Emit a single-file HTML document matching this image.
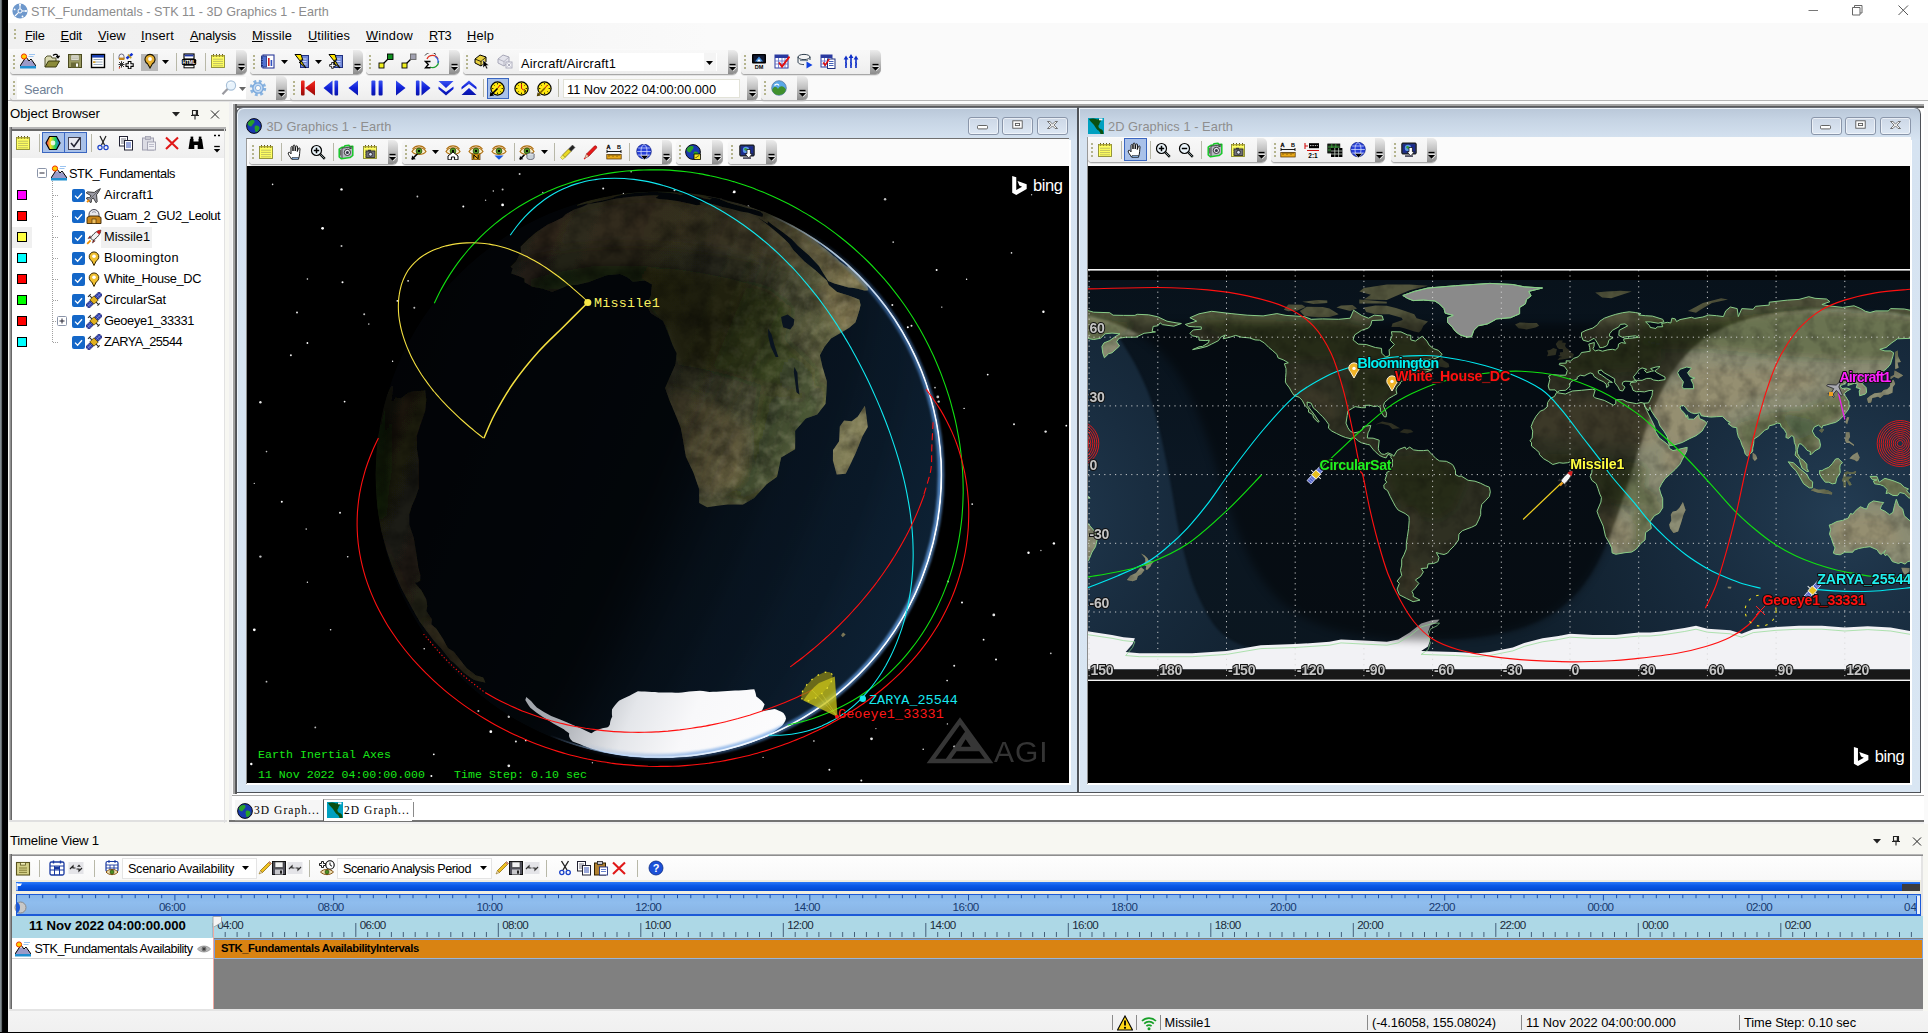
<!DOCTYPE html>
<html lang="en"><head><meta charset="utf-8"><title>STK_Fundamentals - STK 11 - 3D Graphics 1 - Earth</title>
<style>
html,body{margin:0;padding:0}
body{width:1928px;height:1033px;position:relative;overflow:hidden;background:#fafafa;font-family:"Liberation Sans",sans-serif}
.b{position:absolute;box-sizing:border-box}
.t{position:absolute;white-space:pre}
u{text-decoration:underline;text-underline-offset:1px}
svg{overflow:hidden;display:block}
</style></head>
<body>
<div class="b" style="left:0px;top:0px;width:8px;height:1033px;background:linear-gradient(90deg,#8a9498 0,#7a8286 1.2px,#000 2.6px,#000 100%)"></div>
<div class="b" style="left:0px;top:1031.5px;width:1928px;height:1.5px;background:#000"></div>
<div class="b" style="left:8px;top:0px;width:1920px;height:23px;background:#fff"></div>
<svg class="b" style="left:12px;top:3px" width="16" height="16" viewBox="0 0 16 16"><circle cx="8" cy="8" r="7.6" fill="#6e98cc"/><circle cx="8" cy="8" r="2" fill="none" stroke="#fff" stroke-width="1"/><path d="M8 6V1.5M6.6 9.4L3 13M10 8h4" stroke="#fff" stroke-width="1.1"/><circle cx="8" cy="1.8" r="1" fill="#fff"/><circle cx="14" cy="8" r="1.1" fill="#fff"/><circle cx="2.6" cy="6.4" r=".9" fill="#fff"/><circle cx="10.5" cy="13.5" r=".9" fill="#fff"/></svg>
<span class="t" style="left:31.00px;top:3.13px;font:400 12.6px/18px 'Liberation Sans',sans-serif;color:#8c8c8c;letter-spacing:0.027px;">STK_Fundamentals - STK 11 - 3D Graphics 1 - Earth</span>
<svg class="b" style="left:1800px;top:0px;" width="128" height="23"><path d="M8.5 10.5h9.5" stroke="#777" stroke-width="1"/><path d="M52.5 7.5h7.5v7.5h-7.5Z M54.5 7.5v-2h7.5v7.5h-2" fill="none" stroke="#666" stroke-width="1"/><path d="M98.5 5.5l9.5 9.5m0-9.5l-9.5 9.5" stroke="#555" stroke-width="1"/></svg>
<div class="b" style="left:8px;top:23px;width:1920px;height:26px;background:linear-gradient(90deg,#f0f0f0 0,#f2f2f2 300px,#fafafa 700px)"></div>
<div class="b" style="left:14px;top:29px;width:2px;height:2px;background:#b4b48e"></div>
<div class="b" style="left:14px;top:33px;width:2px;height:2px;background:#b4b48e"></div>
<div class="b" style="left:14px;top:37px;width:2px;height:2px;background:#b4b48e"></div>
<span class="t" style="left:25.00px;top:26.56px;font:400 12.8px/18px 'Liberation Sans',sans-serif;color:#000;letter-spacing:-0.281px;"><u>F</u>ile</span>
<span class="t" style="left:60.50px;top:26.56px;font:400 12.8px/18px 'Liberation Sans',sans-serif;color:#000;letter-spacing:-0.139px;"><u>E</u>dit</span>
<span class="t" style="left:98.00px;top:26.56px;font:400 12.8px/18px 'Liberation Sans',sans-serif;color:#000;letter-spacing:-0.002px;"><u>V</u>iew</span>
<span class="t" style="left:141.00px;top:26.56px;font:400 12.8px/18px 'Liberation Sans',sans-serif;color:#000;letter-spacing:0.165px;"><u>I</u>nsert</span>
<span class="t" style="left:190.00px;top:26.56px;font:400 12.8px/18px 'Liberation Sans',sans-serif;color:#000;letter-spacing:-0.208px;"><u>A</u>nalysis</span>
<span class="t" style="left:252.00px;top:26.56px;font:400 12.8px/18px 'Liberation Sans',sans-serif;color:#000;letter-spacing:0.127px;"><u>M</u>issile</span>
<span class="t" style="left:308.00px;top:26.56px;font:400 12.8px/18px 'Liberation Sans',sans-serif;color:#000;letter-spacing:0.084px;"><u>U</u>tilities</span>
<span class="t" style="left:366.00px;top:26.56px;font:400 12.8px/18px 'Liberation Sans',sans-serif;color:#000;letter-spacing:0.247px;"><u>W</u>indow</span>
<span class="t" style="left:429.00px;top:26.56px;font:400 12.8px/18px 'Liberation Sans',sans-serif;color:#000;letter-spacing:-0.649px;"><u>R</u>T3</span>
<span class="t" style="left:467.00px;top:26.56px;font:400 12.8px/18px 'Liberation Sans',sans-serif;color:#000;letter-spacing:0.170px;"><u>H</u>elp</span>
<div class="b" style="left:10px;top:50px;width:236.5px;height:24px;border-radius:5px 6px 6px 4px;background:linear-gradient(180deg,#f8f8f8,#f3f3f3 60%,#ededed);box-shadow:0 1px 0 #a8a8a8,0 2px 1px rgba(0,0,0,.10)"></div>
<div class="b" style="left:236.0px;top:50px;width:10.5px;height:24px;border-radius:0 5px 5px 0;background:linear-gradient(180deg,#ececec,#c4c4c4 45%,#8c8c8c)"></div>
<svg class="b" style="left:236.5px;top:63px;" width="9" height="9"><path d="M1.5 1.5h6" stroke="#000" stroke-width="1.3"/><path d="M2.2 3.2h6v1h-6z" fill="#fff" opacity=".8"/><path d="M1 4h7L4.5 7.6Z" fill="#000"/><path d="M5.2 8 L8.6 4.4" stroke="#fff" stroke-width=".8" opacity=".9"/></svg>
<div class="b" style="left:13.4px;top:55px;width:2px;height:2px;background:#b4b48e"></div>
<div class="b" style="left:13.4px;top:59px;width:2px;height:2px;background:#b4b48e"></div>
<div class="b" style="left:13.4px;top:63px;width:2px;height:2px;background:#b4b48e"></div>
<div class="b" style="left:13.4px;top:67px;width:2px;height:2px;background:#b4b48e"></div>
<svg class="b" style="left:20px;top:53.4px" width="16" height="16" viewBox="0 0 16 16"><rect x="0" y="13" width="16" height="2.5" fill="#1f8fd0"/><path d="M0 13 L6 4 L9 8 L11 6 L16 13Z" fill="#9a9ac8"/><path d="M6 4 L4.2 7 L6 6.3 L7.6 7.2 L6 4Z M11 6 L9.8 7.5 L12.2 7.8Z" fill="#fff"/><path d="M0 13 L6 4 L9 8 L11 6 L16 13" fill="none" stroke="#000" stroke-width="1"/><circle cx="4" cy="3.5" r="2.6" fill="#ffd000" stroke="#f03000" stroke-width="1"/><path d="M9 1.5h6M8.5 3.5h5" stroke="#9cc4f0" stroke-width="1"/></svg>
<svg class="b" style="left:44px;top:53.4px" width="16" height="16" viewBox="0 0 16 16"><path d="M1 14 L1 5 L3 3 L7 3 L8 5 L12 5 L12 8" fill="#d8d8b0" stroke="#555530" stroke-width="1"/><path d="M1 14 L4.5 8 L15.5 8 L12 14Z" fill="#8a8a3a" stroke="#3a3a10" stroke-width="1"/><path d="M9 2.5 C11 0.5 14 1 14 4 M12.2 3.2 L14 4.8 L15.6 2.8" fill="none" stroke="#000" stroke-width="1.2"/></svg>
<svg class="b" style="left:67px;top:53.4px" width="16" height="16" viewBox="0 0 16 16"><rect x="1.5" y="1.5" width="13" height="13" fill="#9a9a62" stroke="#4a4a20"/><rect x="4" y="2" width="8" height="5.5" fill="#f2f2e6" stroke="#707050" stroke-width=".6"/><path d="M5 4h6M5 5.8h6" stroke="#909080" stroke-width=".7"/><rect x="4" y="9.5" width="8" height="5" fill="#6a6a38"/><rect x="9" y="10.5" width="2" height="3.2" fill="#fff"/></svg>
<svg class="b" style="left:90px;top:53.4px" width="16" height="16" viewBox="0 0 16 16"><rect x="1.5" y="1.5" width="13" height="13" fill="#fff" stroke="#000" stroke-width="1.4"/><rect x="2" y="2" width="12" height="2.6" fill="#1a3fb0"/><path d="M3.5 6.5h9M3.5 9h9M3.5 11.5h9" stroke="#9ab" stroke-width="1.2"/><rect x="3" y="8.3" width="2.4" height="1.6" fill="#d8a020"/></svg>
<div class="b" style="left:112.5px;top:53px;width:1px;height:18px;background:#b8b8a8"></div>
<svg class="b" style="left:118px;top:53.4px" width="16" height="16" viewBox="0 0 16 16"><path d="M1 6 L1 3.5 A2.5 2.5 0 0 1 6 3.5 L6 6Z" fill="#f4f4f4" stroke="#446" stroke-width=".8"/><rect x="1" y="4.6" width="5.4" height="2.4" fill="#c8861c"/><path d="M8.5 5.5 L14.5 0.8" stroke="#1030d0" stroke-width="2.4"/><path d="M10 1.5 L13.2 5.2" stroke="#c8a020" stroke-width="1.6"/><path d="M1 9l5 5M6 9l-5 5M3.5 8.2v6.4M.5 11.5h6" stroke="#333" stroke-width="1"/><path d="M1 15.3l1-1" stroke="#e02000" stroke-width="1.2"/><path d="M10.3 8.5h2.6v2.3h2.3v2.6h-2.3v2.3h-2.6v-2.3H8v-2.6h2.3Z" fill="#fff" stroke="#000" stroke-width="1.1"/></svg>
<div class="b" style="left:141px;top:53.5px;width:16.5px;height:17px;background:#b8b8b8"></div>
<svg class="b" style="left:141.5px;top:53.4px" width="16" height="16" viewBox="0 0 16 16"><path d="M8 15 L5.6 10.8 A5 5 0 1 1 10.4 10.8Z" fill="#e8b030" stroke="#1a1400" stroke-width="1.1"/><circle cx="8" cy="6" r="1.9" fill="#fff"/></svg>
<svg class="b" style="left:162px;top:60px;" width="7" height="4"><path d="M0 0h7L3.5 4Z" fill="#000"/></svg>
<div class="b" style="left:175.5px;top:53px;width:1px;height:18px;background:#b8b8a8"></div>
<svg class="b" style="left:181px;top:53.4px" width="16" height="16" viewBox="0 0 16 16"><rect x="3" y="1" width="10" height="5" fill="#fff" stroke="#000" stroke-width="1.2"/><rect x="3.6" y="1.6" width="8.8" height="1.8" fill="#2038a8"/><rect x="0.8" y="6" width="14.4" height="6" rx="1.2" fill="#000"/><text x="8" y="10.9" font-family="Liberation Sans,sans-serif" font-size="4.6" font-weight="700" fill="#fff" text-anchor="middle">HTML</text><rect x="3" y="12.2" width="10" height="2.6" fill="#fff" stroke="#000" stroke-width="1"/></svg>
<div class="b" style="left:204.5px;top:53px;width:1px;height:18px;background:#b8b8a8"></div>
<svg class="b" style="left:210px;top:53.4px" width="16" height="16" viewBox="0 0 16 16"><rect x="1.5" y="2.5" width="13" height="12" fill="#ffff60" stroke="#8a8a30" stroke-width=".9"/><path d="M3 6.2h10M3 8.4h10M3 10.6h10M3 12.8h10" stroke="#b0b060" stroke-width=".8"/><path d="M3.5 1v3M6.5 1v3M9.5 1v3M12.5 1v3" stroke="#605820" stroke-width="1"/><path d="M2 3h12" stroke="#c0b840" stroke-width="1.2"/></svg>
<div class="b" style="left:249.5px;top:50px;width:113.5px;height:24px;border-radius:5px 6px 6px 4px;background:linear-gradient(180deg,#f8f8f8,#f3f3f3 60%,#ededed);box-shadow:0 1px 0 #a8a8a8,0 2px 1px rgba(0,0,0,.10)"></div>
<div class="b" style="left:352.5px;top:50px;width:10.5px;height:24px;border-radius:0 5px 5px 0;background:linear-gradient(180deg,#ececec,#c4c4c4 45%,#8c8c8c)"></div>
<svg class="b" style="left:353px;top:63px;" width="9" height="9"><path d="M1.5 1.5h6" stroke="#000" stroke-width="1.3"/><path d="M2.2 3.2h6v1h-6z" fill="#fff" opacity=".8"/><path d="M1 4h7L4.5 7.6Z" fill="#000"/><path d="M5.2 8 L8.6 4.4" stroke="#fff" stroke-width=".8" opacity=".9"/></svg>
<div class="b" style="left:252.9px;top:55px;width:2px;height:2px;background:#b4b48e"></div>
<div class="b" style="left:252.9px;top:59px;width:2px;height:2px;background:#b4b48e"></div>
<div class="b" style="left:252.9px;top:63px;width:2px;height:2px;background:#b4b48e"></div>
<div class="b" style="left:252.9px;top:67px;width:2px;height:2px;background:#b4b48e"></div>
<svg class="b" style="left:260px;top:53.4px" width="16" height="16" viewBox="0 0 16 16"><rect x="3" y="2" width="11" height="13" fill="#fff" stroke="#2a3a9a" stroke-width="1.1"/><rect x="1.5" y="3" width="5" height="11" fill="#5070d0" stroke="#203080" stroke-width=".8"/><path d="M1 5h2M1 7.5h2M1 10h2M1 12.5h2" stroke="#102060" stroke-width=".8"/><rect x="8" y="5" width="1.6" height="8" fill="#d02020"/><rect x="10.6" y="7" width="1.6" height="6" fill="#3050c0"/></svg>
<svg class="b" style="left:281px;top:60px;" width="7" height="4"><path d="M0 0h7L3.5 4Z" fill="#000"/></svg>
<svg class="b" style="left:294px;top:53.4px" width="16" height="16" viewBox="0 0 16 16"><rect x="6.5" y="2.5" width="8" height="12" fill="#7088d8" stroke="#203080" stroke-width="1"/><path d="M8.5 6h4M8.5 8.5h4M8.5 11h4" stroke="#dfe6ff" stroke-width=".9"/><path d="M1 1.5 L7 1.5 L8.8 7 L6.6 7 L12 15 L5 9.2 L7 9.2 Z" fill="#ffe600" stroke="#000" stroke-width="1"/></svg>
<svg class="b" style="left:315px;top:60px;" width="7" height="4"><path d="M0 0h7L3.5 4Z" fill="#000"/></svg>
<svg class="b" style="left:328px;top:53.4px" width="16" height="16" viewBox="0 0 16 16"><rect x="6.5" y="2.5" width="8" height="12" fill="#7088d8" stroke="#203080" stroke-width="1"/><path d="M8.5 6h4M8.5 8.5h4M8.5 11h4" stroke="#dfe6ff" stroke-width=".9"/><path d="M1 1.5 L7 1.5 L8.8 7 L6.6 7 L12 15 L5 9.2 L7 9.2 Z" fill="#ffe600" stroke="#000" stroke-width="1"/><path d="M1.6 11.5h2v-2h1.8v2h2v1.8h-2v2H3.6v-2h-2Z" fill="#fff" stroke="#000" stroke-width=".8"/></svg>
<div class="b" style="left:366px;top:50px;width:93.5px;height:24px;border-radius:5px 6px 6px 4px;background:linear-gradient(180deg,#f8f8f8,#f3f3f3 60%,#ededed);box-shadow:0 1px 0 #a8a8a8,0 2px 1px rgba(0,0,0,.10)"></div>
<div class="b" style="left:449.0px;top:50px;width:10.5px;height:24px;border-radius:0 5px 5px 0;background:linear-gradient(180deg,#ececec,#c4c4c4 45%,#8c8c8c)"></div>
<svg class="b" style="left:449.5px;top:63px;" width="9" height="9"><path d="M1.5 1.5h6" stroke="#000" stroke-width="1.3"/><path d="M2.2 3.2h6v1h-6z" fill="#fff" opacity=".8"/><path d="M1 4h7L4.5 7.6Z" fill="#000"/><path d="M5.2 8 L8.6 4.4" stroke="#fff" stroke-width=".8" opacity=".9"/></svg>
<div class="b" style="left:369.4px;top:55px;width:2px;height:2px;background:#b4b48e"></div>
<div class="b" style="left:369.4px;top:59px;width:2px;height:2px;background:#b4b48e"></div>
<div class="b" style="left:369.4px;top:63px;width:2px;height:2px;background:#b4b48e"></div>
<div class="b" style="left:369.4px;top:67px;width:2px;height:2px;background:#b4b48e"></div>
<svg class="b" style="left:378px;top:53.4px" width="16" height="16" viewBox="0 0 16 16"><path d="M3.5 12.5 L12 4" stroke="#000" stroke-width="1.2"/><rect x="9.5" y="1" width="5.5" height="5.5" fill="#109020" stroke="#000" stroke-width=".9"/><rect x="1" y="10" width="5" height="5" fill="#f0f020" stroke="#000" stroke-width=".9"/></svg>
<svg class="b" style="left:401px;top:53.4px" width="16" height="16" viewBox="0 0 16 16"><path d="M3.5 12.5 L12 4" stroke="#000" stroke-width="1.2"/><rect x="9.5" y="1" width="5.5" height="5.5" fill="#a0a0b0" stroke="#666" stroke-width=".9"/><rect x="1" y="10" width="5" height="5" fill="#f0f020" stroke="#000" stroke-width=".9"/></svg>
<svg class="b" style="left:424px;top:53.4px" width="16" height="16" viewBox="0 0 16 16"><path d="M3 6 A6 6 0 0 1 14 6" fill="none" stroke="#e03020" stroke-width="1.3"/><path d="M14.5 8 A6 6 0 0 1 6 14" fill="none" stroke="#20a030" stroke-width="1.3"/><path d="M11 3.5 A6 6 0 0 1 14 10" fill="none" stroke="#3060e0" stroke-width="1.3"/><path d="M1 2.5 A7 7 0 0 1 12 1.5" fill="none" stroke="#333" stroke-width="1"/><path d="M6.5 8.5H1.5L4.3 11.5 1.5 14.8H6.5" fill="none" stroke="#000" stroke-width="1.4"/></svg>
<div class="b" style="left:462.5px;top:50px;width:275.5px;height:24px;border-radius:5px 6px 6px 4px;background:linear-gradient(180deg,#f8f8f8,#f3f3f3 60%,#ededed);box-shadow:0 1px 0 #a8a8a8,0 2px 1px rgba(0,0,0,.10)"></div>
<div class="b" style="left:727.5px;top:50px;width:10.5px;height:24px;border-radius:0 5px 5px 0;background:linear-gradient(180deg,#ececec,#c4c4c4 45%,#8c8c8c)"></div>
<svg class="b" style="left:728px;top:63px;" width="9" height="9"><path d="M1.5 1.5h6" stroke="#000" stroke-width="1.3"/><path d="M2.2 3.2h6v1h-6z" fill="#fff" opacity=".8"/><path d="M1 4h7L4.5 7.6Z" fill="#000"/><path d="M5.2 8 L8.6 4.4" stroke="#fff" stroke-width=".8" opacity=".9"/></svg>
<div class="b" style="left:465.9px;top:55px;width:2px;height:2px;background:#b4b48e"></div>
<div class="b" style="left:465.9px;top:59px;width:2px;height:2px;background:#b4b48e"></div>
<div class="b" style="left:465.9px;top:63px;width:2px;height:2px;background:#b4b48e"></div>
<div class="b" style="left:465.9px;top:67px;width:2px;height:2px;background:#b4b48e"></div>
<svg class="b" style="left:474px;top:53.4px" width="16" height="16" viewBox="0 0 16 16"><path d="M1 6 L6 2 L12 4 L12 9 L7 13 L1 10Z" fill="#e8d040" stroke="#000" stroke-width="1"/><path d="M1 6l6 2.5v4.5M7 8.5l5-4.5" fill="none" stroke="#000" stroke-width=".8"/><path d="M9 7 L9 15 L11 13 L12.4 16 L13.8 15.3 L12.4 12.5 L15 12.5Z" fill="#000" stroke="#fff" stroke-width=".5"/></svg>
<svg class="b" style="left:497px;top:53.4px" width="16" height="16" viewBox="0 0 16 16"><path d="M1 6 L6 2 L12 4 L12 9 L7 13 L1 10Z" fill="#e4e4ec" stroke="#a8a8b8" stroke-width="1"/><path d="M1 6l6 2.5v4.5M7 8.5l5-4.5" fill="none" stroke="#a8a8b8" stroke-width=".8"/><rect x="9" y="9" width="6" height="6" fill="#f4f4f8" stroke="#a8a8b8" stroke-width=".9"/><path d="M10.5 10.5l3 3m0-3l-3 3" stroke="#a8a8b8" stroke-width=".9"/></svg>
<div class="b" style="left:519px;top:53px;width:198px;height:18px;background:#fff"></div>
<div class="b" style="left:704px;top:53px;width:12px;height:18px;background:#f4f4f4"></div>
<span class="t" style="left:521.00px;top:54.96px;font:400 12.8px/18px 'Liberation Sans',sans-serif;color:#000;letter-spacing:0.181px;">Aircraft/Aircraft1</span>
<svg class="b" style="left:706px;top:60.5px;" width="7" height="4"><path d="M0 0h7L3.5 4Z" fill="#000"/></svg>
<div class="b" style="left:741px;top:50px;width:139.5px;height:24px;border-radius:5px 6px 6px 4px;background:linear-gradient(180deg,#f8f8f8,#f3f3f3 60%,#ededed);box-shadow:0 1px 0 #a8a8a8,0 2px 1px rgba(0,0,0,.10)"></div>
<div class="b" style="left:870.0px;top:50px;width:10.5px;height:24px;border-radius:0 5px 5px 0;background:linear-gradient(180deg,#ececec,#c4c4c4 45%,#8c8c8c)"></div>
<svg class="b" style="left:870.5px;top:63px;" width="9" height="9"><path d="M1.5 1.5h6" stroke="#000" stroke-width="1.3"/><path d="M2.2 3.2h6v1h-6z" fill="#fff" opacity=".8"/><path d="M1 4h7L4.5 7.6Z" fill="#000"/><path d="M5.2 8 L8.6 4.4" stroke="#fff" stroke-width=".8" opacity=".9"/></svg>
<div class="b" style="left:744.4px;top:55px;width:2px;height:2px;background:#b4b48e"></div>
<div class="b" style="left:744.4px;top:59px;width:2px;height:2px;background:#b4b48e"></div>
<div class="b" style="left:744.4px;top:63px;width:2px;height:2px;background:#b4b48e"></div>
<div class="b" style="left:744.4px;top:67px;width:2px;height:2px;background:#b4b48e"></div>
<svg class="b" style="left:751px;top:53.4px" width="16" height="16" viewBox="0 0 16 16"><rect x="1" y="1" width="14" height="9.5" rx="1" fill="#000"/><rect x="2.5" y="2.3" width="11" height="6.6" fill="#101830"/><path d="M4 8.5 L8 3.5 L12 8.5Z" fill="#4090e0"/><path d="M6 8.5L8 6l2 2.5Z" fill="#fff"/><text x="8" y="15.6" font-family="Liberation Sans,sans-serif" font-size="5.6" font-weight="700" fill="#000" text-anchor="middle">DM</text></svg>
<svg class="b" style="left:774px;top:53.4px" width="16" height="16" viewBox="0 0 16 16"><rect x="1" y="2" width="13" height="13" fill="#fff" stroke="#2a3aa0" stroke-width="1"/><rect x="1" y="2" width="13" height="3" fill="#2a3aa0"/><path d="M1 8h13M1 11h13M4.5 5v10M8 5v10M11 5v10" stroke="#5a6ac8" stroke-width=".8"/><path d="M5 9.5 L8 13.5 L15.5 3.5" fill="none" stroke="#e01010" stroke-width="2"/></svg>
<svg class="b" style="left:797px;top:53.4px" width="16" height="16" viewBox="0 0 16 16"><ellipse cx="7" cy="4" rx="6" ry="2.6" fill="#f4f4f4" stroke="#304050" stroke-width="1"/><path d="M1 4v5c0 1.5 2.6 2.6 6 2.6" fill="none" stroke="#304050" stroke-width="1"/><path d="M13 4v3" stroke="#304050" stroke-width="1"/><path d="M3 7.5h8" stroke="#7a8a9a" stroke-width="1.2"/><path d="M9.5 8.5 L15.5 12 L9.5 15.5Z" fill="#1040e0"/></svg>
<svg class="b" style="left:820px;top:53.4px" width="16" height="16" viewBox="0 0 16 16"><rect x="1" y="2" width="11" height="12" fill="#fff" stroke="#2a3aa0" stroke-width="1"/><rect x="1" y="2" width="11" height="3" fill="#2a3aa0"/><path d="M1 8h11M1 11h11M4.5 5v9M8 5v9" stroke="#5a6ac8" stroke-width=".8"/><rect x="7.5" y="6" width="7.5" height="9.5" fill="#fff" stroke="#203080" stroke-width="1"/><path d="M9 8.5h4.5M9 10.5h4.5M9 12.5h4.5" stroke="#3050b0" stroke-width=".9"/><path d="M3.2 9.5l2 2.6 4-6" fill="none" stroke="#e01010" stroke-width="1.6"/></svg>
<svg class="b" style="left:843px;top:53.4px" width="16" height="16" viewBox="0 0 16 16"><path d="M3 15V4M8 15V2.5M13 15V4" stroke="#1030c8" stroke-width="1.6"/><path d="M0.6 6.5L3 2.5l2.4 4ZM5.6 5L8 1l2.4 4ZM10.6 6.5L13 2.5l2.4 4Z" fill="#1030c8"/><path d="M2 9l2 2-2 2M7 9l2 2-2 2M12 9l2 2-2 2" fill="none" stroke="#1030c8" stroke-width=".7"/></svg>
<div class="b" style="left:10px;top:76px;width:276.5px;height:24px;border-radius:5px 6px 6px 4px;background:linear-gradient(180deg,#f8f8f8,#f3f3f3 60%,#ededed);box-shadow:0 1px 0 #a8a8a8,0 2px 1px rgba(0,0,0,.10)"></div>
<div class="b" style="left:276.0px;top:76px;width:10.5px;height:24px;border-radius:0 5px 5px 0;background:linear-gradient(180deg,#ececec,#c4c4c4 45%,#8c8c8c)"></div>
<svg class="b" style="left:276.5px;top:89px;" width="9" height="9"><path d="M1.5 1.5h6" stroke="#000" stroke-width="1.3"/><path d="M2.2 3.2h6v1h-6z" fill="#fff" opacity=".8"/><path d="M1 4h7L4.5 7.6Z" fill="#000"/><path d="M5.2 8 L8.6 4.4" stroke="#fff" stroke-width=".8" opacity=".9"/></svg>
<div class="b" style="left:13.4px;top:81px;width:2px;height:2px;background:#b4b48e"></div>
<div class="b" style="left:13.4px;top:85px;width:2px;height:2px;background:#b4b48e"></div>
<div class="b" style="left:13.4px;top:89px;width:2px;height:2px;background:#b4b48e"></div>
<div class="b" style="left:13.4px;top:93px;width:2px;height:2px;background:#b4b48e"></div>
<div class="b" style="left:17px;top:77px;width:229px;height:22px;background:#fff"></div>
<span class="t" style="left:24.00px;top:81.36px;font:400 12.8px/18px 'Liberation Sans',sans-serif;color:#6f7f96;letter-spacing:-0.258px;">Search</span>
<svg class="b" style="left:221px;top:80px" width="16" height="16" viewBox="0 0 16 16"><circle cx="10" cy="5.5" r="4.6" fill="#e8f3fc" stroke="#a8c0d8" stroke-width="1.1"/><path d="M6.5 9 L1.5 14.2" stroke="#9a9aa0" stroke-width="2.2"/><path d="M7.6 4.2 A3 3 0 0 1 10.5 2.4" fill="none" stroke="#fff" stroke-width="1"/></svg>
<svg class="b" style="left:239px;top:87px;" width="7" height="4"><path d="M0 0h7L3.5 4Z" fill="#666"/></svg>
<svg class="b" style="left:249px;top:79px" width="18" height="18" viewBox="0 0 16 16"><circle cx="8" cy="8" r="5.6" fill="none" stroke="#8ab4e0" stroke-width="3.4" stroke-dasharray="2.3 2.1"/><circle cx="8" cy="8" r="4.6" fill="#c4daf2" stroke="#7aa8dc" stroke-width="1.2"/><circle cx="8" cy="8" r="2.3" fill="#fafafa" stroke="#7aa8dc" stroke-width=".8"/></svg>
<div class="b" style="left:290px;top:76px;width:467.5px;height:24px;border-radius:5px 6px 6px 4px;background:linear-gradient(180deg,#f8f8f8,#f3f3f3 60%,#ededed);box-shadow:0 1px 0 #a8a8a8,0 2px 1px rgba(0,0,0,.10)"></div>
<div class="b" style="left:747.0px;top:76px;width:10.5px;height:24px;border-radius:0 5px 5px 0;background:linear-gradient(180deg,#ececec,#c4c4c4 45%,#8c8c8c)"></div>
<svg class="b" style="left:747.5px;top:89px;" width="9" height="9"><path d="M1.5 1.5h6" stroke="#000" stroke-width="1.3"/><path d="M2.2 3.2h6v1h-6z" fill="#fff" opacity=".8"/><path d="M1 4h7L4.5 7.6Z" fill="#000"/><path d="M5.2 8 L8.6 4.4" stroke="#fff" stroke-width=".8" opacity=".9"/></svg>
<div class="b" style="left:293.4px;top:81px;width:2px;height:2px;background:#b4b48e"></div>
<div class="b" style="left:293.4px;top:85px;width:2px;height:2px;background:#b4b48e"></div>
<div class="b" style="left:293.4px;top:89px;width:2px;height:2px;background:#b4b48e"></div>
<div class="b" style="left:293.4px;top:93px;width:2px;height:2px;background:#b4b48e"></div>
<svg class="b" style="left:300px;top:80px" width="16" height="16" viewBox="0 0 16 16"><defs><linearGradient id="chx25" x1="0" y1="0" x2="0" y2="1"><stop offset="0" stop-color="#f03020"/><stop offset=".5" stop-color="#d01010"/><stop offset="1" stop-color="#901008"/></linearGradient></defs><rect x="1" y="0.5" width="3.6" height="15" rx="1" fill="url(#chx25)"/><path d="M15 0.5 L15 15.5 L5 8Z" fill="url(#chx25)"/></svg>
<svg class="b" style="left:323px;top:80px" width="16" height="16" viewBox="0 0 16 16"><defs><linearGradient id="chx26" x1="0" y1="0" x2="0" y2="1"><stop offset="0" stop-color="#3a54f0"/><stop offset=".5" stop-color="#1020d8"/><stop offset="1" stop-color="#0814a8"/></linearGradient></defs><path d="M9.5 0.5 L9.5 15.5 L0.5 8Z" fill="url(#chx26)"/><rect x="11.5" y="0.5" width="3.6" height="15" rx="1" fill="url(#chx26)"/></svg>
<svg class="b" style="left:346px;top:80px" width="16" height="16" viewBox="0 0 16 16"><defs><linearGradient id="chx27" x1="0" y1="0" x2="0" y2="1"><stop offset="0" stop-color="#3a54f0"/><stop offset=".5" stop-color="#1020d8"/><stop offset="1" stop-color="#0814a8"/></linearGradient></defs><path d="M12 0.5 L12 15.5 L2.5 8Z" fill="url(#chx27)"/></svg>
<svg class="b" style="left:369px;top:80px" width="16" height="16" viewBox="0 0 16 16"><defs><linearGradient id="chx28" x1="0" y1="0" x2="0" y2="1"><stop offset="0" stop-color="#3a54f0"/><stop offset=".5" stop-color="#1020d8"/><stop offset="1" stop-color="#0814a8"/></linearGradient></defs><rect x="2.4" y="0.5" width="4" height="15" rx="1" fill="url(#chx28)"/><rect x="9.6" y="0.5" width="4" height="15" rx="1" fill="url(#chx28)"/></svg>
<svg class="b" style="left:392px;top:80px" width="16" height="16" viewBox="0 0 16 16"><defs><linearGradient id="chx29" x1="0" y1="0" x2="0" y2="1"><stop offset="0" stop-color="#3a54f0"/><stop offset=".5" stop-color="#1020d8"/><stop offset="1" stop-color="#0814a8"/></linearGradient></defs><path d="M4 0.5 L4 15.5 L13.5 8Z" fill="url(#chx29)"/></svg>
<svg class="b" style="left:415px;top:80px" width="16" height="16" viewBox="0 0 16 16"><defs><linearGradient id="chx30" x1="0" y1="0" x2="0" y2="1"><stop offset="0" stop-color="#3a54f0"/><stop offset=".5" stop-color="#1020d8"/><stop offset="1" stop-color="#0814a8"/></linearGradient></defs><path d="M6.5 0.5 L6.5 15.5 L15.5 8Z" fill="url(#chx30)"/><rect x="0.9" y="0.5" width="3.6" height="15" rx="1" fill="url(#chx30)"/></svg>
<svg class="b" style="left:438px;top:80px" width="16" height="16" viewBox="0 0 16 16"><defs><linearGradient id="chx31" x1="0" y1="0" x2="0" y2="1"><stop offset="0" stop-color="#3a54f0"/><stop offset=".5" stop-color="#1020d8"/><stop offset="1" stop-color="#0814a8"/></linearGradient></defs><path d="M0.5 1 L15.5 1 L8 8Z M0.5 6.5 L8 12 L15.5 6.5 L15.5 9 L8 15.5 L0.5 9Z" fill="url(#chx31)"/></svg>
<svg class="b" style="left:461px;top:80px" width="16" height="16" viewBox="0 0 16 16"><defs><linearGradient id="chx32" x1="0" y1="0" x2="0" y2="1"><stop offset="0" stop-color="#3a54f0"/><stop offset=".5" stop-color="#1020d8"/><stop offset="1" stop-color="#0814a8"/></linearGradient></defs><path d="M0.5 15 L15.5 15 L8 8Z M0.5 9.5 L8 4 L15.5 9.5 L15.5 7 L8 0.5 L0.5 7Z" fill="url(#chx32)"/></svg>
<div class="b" style="left:483px;top:79px;width:1px;height:18px;background:#b8b8a8"></div>
<div class="b" style="left:487px;top:78px;width:22px;height:21px;background:#a9c1e9;border:1px solid #3a66c0"></div>
<svg class="b" style="left:489px;top:80.5px" width="16" height="16" viewBox="0 0 16 16"><circle cx="8.5" cy="7.5" r="6.6" fill="#ffe810" stroke="#000" stroke-width="1.2"/><path d="M8.5 2v1.4M8.5 11.6V13M3 7.5h1.4M12.6 7.5H14M4.6 3.6l1 1M12.4 3.6l-1 1M4.6 11.4l1-1M12.4 11.4l-1-1" stroke="#000" stroke-width=".8"/><path d="M8.5 7.5L11 4" stroke="#d01010" stroke-width="1"/><path d="M8.5 7.5 L2 14" stroke="#000" stroke-width="1.6"/><path d="M0.8 15.2 L1.4 10.8 L5.2 14.6Z" fill="#000"/></svg>
<svg class="b" style="left:513px;top:80.5px" width="16" height="16" viewBox="0 0 16 16"><circle cx="8.5" cy="7.5" r="6.6" fill="#ffe810" stroke="#000" stroke-width="1.2"/><path d="M8.5 2v1.4M8.5 11.6V13M3 7.5h1.4M12.6 7.5H14M4.6 3.6l1 1M12.4 3.6l-1 1M4.6 11.4l1-1M12.4 11.4l-1-1" stroke="#000" stroke-width=".8"/><path d="M8.5 7.5V3.2M8.5 7.5l2.8 2" stroke="#d01010" stroke-width="1"/><path d="M11 8.5l2 1.5-2 1.5" fill="none" stroke="#000" stroke-width=".8"/></svg>
<svg class="b" style="left:536px;top:80.5px" width="16" height="16" viewBox="0 0 16 16"><circle cx="8.5" cy="7.5" r="6.6" fill="#ffe810" stroke="#000" stroke-width="1.2"/><path d="M8.5 2v1.4M8.5 11.6V13M3 7.5h1.4M12.6 7.5H14M4.6 3.6l1 1M12.4 3.6l-1 1M4.6 11.4l1-1M12.4 11.4l-1-1" stroke="#000" stroke-width=".8"/><path d="M8.5 7.5L11.5 4" stroke="#d01010" stroke-width="1"/><path d="M9 7 L2.5 13.5" stroke="#806000" stroke-width="1.6"/><path d="M0.8 15.2 L1.6 11.2 L4.8 14.4Z" fill="#504000"/></svg>
<div class="b" style="left:557.5px;top:79px;width:1px;height:18px;background:#b8b8a8"></div>
<div class="b" style="left:563px;top:79px;width:177px;height:19px;background:#fff;border:1px solid #e2e2d8"></div>
<span class="t" style="left:567.00px;top:81.16px;font:400 12.8px/18px 'Liberation Sans',sans-serif;color:#000;letter-spacing:-0.038px;">11 Nov 2022 04:00:00.000</span>
<div class="b" style="left:760.5px;top:76px;width:47.0px;height:24px;border-radius:5px 6px 6px 4px;background:linear-gradient(180deg,#f8f8f8,#f3f3f3 60%,#ededed);box-shadow:0 1px 0 #a8a8a8,0 2px 1px rgba(0,0,0,.10)"></div>
<div class="b" style="left:797.0px;top:76px;width:10.5px;height:24px;border-radius:0 5px 5px 0;background:linear-gradient(180deg,#ececec,#c4c4c4 45%,#8c8c8c)"></div>
<svg class="b" style="left:797.5px;top:89px;" width="9" height="9"><path d="M1.5 1.5h6" stroke="#000" stroke-width="1.3"/><path d="M2.2 3.2h6v1h-6z" fill="#fff" opacity=".8"/><path d="M1 4h7L4.5 7.6Z" fill="#000"/><path d="M5.2 8 L8.6 4.4" stroke="#fff" stroke-width=".8" opacity=".9"/></svg>
<div class="b" style="left:763.9px;top:81px;width:2px;height:2px;background:#b4b48e"></div>
<div class="b" style="left:763.9px;top:85px;width:2px;height:2px;background:#b4b48e"></div>
<div class="b" style="left:763.9px;top:89px;width:2px;height:2px;background:#b4b48e"></div>
<div class="b" style="left:763.9px;top:93px;width:2px;height:2px;background:#b4b48e"></div>
<svg class="b" style="left:771px;top:80px" width="16" height="16" viewBox="0 0 16 16"><circle cx="8" cy="8" r="7.3" fill="#5aa8e8" stroke="#5878a0" stroke-width=".8"/><path d="M1 10 C3 6 5 6 7 9 C9 5.5 12 5 15 9.5 A7.3 7.3 0 0 1 1 10Z" fill="#40902c"/><path d="M3.5 5.5 C5 3.5 7 3.8 8 5.5" fill="none" stroke="#fff" stroke-width="1.3"/></svg>
<div class="b" style="left:8px;top:100.2px;width:1920px;height:1px;background:#b4b4b4"></div>
<div class="b" style="left:8px;top:102px;width:221px;height:722px;background:#f7f7f2"></div>
<span class="t" style="left:10.00px;top:104.63px;font:400 13.2px/18px 'Liberation Sans',sans-serif;color:#000;letter-spacing:-0.016px;">Object Browser</span>
<svg class="b" style="left:170px;top:108px;" width="52" height="12"><path d="M2 4h8L6 8.5Z" fill="#222"/><path d="M22.5 2.5h5v4.5h-5zM21 7.5h8M25 7.5v4" fill="none" stroke="#222" stroke-width="1.1"/><path d="M26.5 2.5v4.5" stroke="#222" stroke-width="1.4"/><path d="M41 2.5l8 8m0-8l-8 8" stroke="#222" stroke-width="1"/></svg>
<div class="b" style="left:9px;top:127.2px;width:217px;height:3.6px;background:linear-gradient(180deg,#b4b4b4 0,#b4b4b4 40%,#686868 60%,#686868 100%)"></div>
<div class="b" style="left:9px;top:127.2px;width:3.4px;height:695px;background:linear-gradient(90deg,#b4b4b4 0,#b4b4b4 40%,#686868 60%,#686868 100%)"></div>
<div class="b" style="left:12.4px;top:130.8px;width:212px;height:27.5px;background:linear-gradient(180deg,#f9f9f9,#efefef)"></div>
<div class="b" style="left:224px;top:129px;width:1px;height:694px;background:#e2e2e2"></div>
<div class="b" style="left:12px;top:158px;width:212px;height:662px;background:#fff"></div>
<div class="b" style="left:9px;top:820px;width:218px;height:2px;background:#e0e0e0"></div>
<svg class="b" style="left:15px;top:135px" width="16" height="16" viewBox="0 0 16 16"><rect x="1.5" y="2.5" width="13" height="12" fill="#ffff60" stroke="#8a8a30" stroke-width=".9"/><path d="M3 6.2h10M3 8.4h10M3 10.6h10M3 12.8h10" stroke="#b0b060" stroke-width=".8"/><path d="M3.5 1v3M6.5 1v3M9.5 1v3M12.5 1v3" stroke="#605820" stroke-width="1"/><path d="M2 3h12" stroke="#c0b840" stroke-width="1.2"/></svg>
<div class="b" style="left:39px;top:134px;width:1px;height:18px;background:#b8b8a8"></div>
<div class="b" style="left:41.5px;top:132px;width:45px;height:21px;background:#a9c1e9;border:1px solid #3a66c0"></div>
<div class="b" style="left:64px;top:132px;width:1px;height:21px;background:#3a66c0"></div>
<svg class="b" style="left:45px;top:135px" width="16" height="16" viewBox="0 0 16 16"><defs><linearGradient id="chx38" x1="0" x2="1"><stop offset="0" stop-color="#f02060"/><stop offset=".33" stop-color="#f0e020"/><stop offset=".66" stop-color="#20d060"/><stop offset="1" stop-color="#2060f0"/></linearGradient></defs><path d="M4.5 1.5h7L15 8l-3.5 6.5h-7L1 8Z" fill="url(#chx38)" stroke="#000" stroke-width="1.2"/><circle cx="8" cy="8" r="2.4" fill="#fff" opacity=".85"/></svg>
<svg class="b" style="left:67px;top:135px" width="16" height="16" viewBox="0 0 16 16"><rect x="1.5" y="2.5" width="12" height="12" fill="#e8e8f0" stroke="#445" stroke-width="1"/><path d="M4 8l3 3.5L13 3" fill="none" stroke="#223" stroke-width="1.6"/></svg>
<div class="b" style="left:91px;top:134px;width:1px;height:18px;background:#b8b8a8"></div>
<svg class="b" style="left:95px;top:135px" width="16" height="16" viewBox="0 0 16 16"><path d="M5 1 L9.5 10M11 1 L6.5 10" stroke="#222" stroke-width="1.2"/><circle cx="5" cy="12.5" r="2.1" fill="none" stroke="#1840c8" stroke-width="1.2"/><circle cx="11" cy="12.5" r="2.1" fill="none" stroke="#1840c8" stroke-width="1.2"/></svg>
<svg class="b" style="left:118px;top:135px" width="16" height="16" viewBox="0 0 16 16"><rect x="1.5" y="1.5" width="8" height="9.5" fill="#fff" stroke="#223" stroke-width="1"/><path d="M3 4h5M3 6h5M3 8h5" stroke="#556" stroke-width=".8"/><rect x="6.5" y="5.5" width="8" height="9.5" fill="#fff" stroke="#223" stroke-width="1"/><path d="M8 8h5M8 10h5M8 12h5" stroke="#2040b0" stroke-width=".9"/></svg>
<svg class="b" style="left:141px;top:135px" width="16" height="16" viewBox="0 0 16 16"><rect x="1.5" y="3" width="11" height="12" fill="#dcdce4" stroke="#a0a0b0" stroke-width="1"/><rect x="4.5" y="1.5" width="5" height="3" fill="#c8c8d0" stroke="#a0a0b0" stroke-width=".8"/><rect x="6.5" y="7" width="8" height="8" fill="#f0f0f4" stroke="#a0a0b0" stroke-width=".9"/><path d="M8 9.5h5M8 11.5h5" stroke="#b0b0c0" stroke-width=".8"/></svg>
<svg class="b" style="left:164px;top:135px" width="16" height="16" viewBox="0 0 16 16"><path d="M2 2.5 L14 14M14 2.5 L2 14" stroke="#e01818" stroke-width="2.1"/></svg>
<svg class="b" style="left:188px;top:135px" width="16" height="16" viewBox="0 0 16 16"><path d="M2 4h3.5v2.5h5V4H14l1.5 10h-5.8v-4h-3.4v4H.5Z" fill="#000"/><rect x="2.6" y="1.6" width="2.6" height="3" fill="#000"/><rect x="10.8" y="1.6" width="2.6" height="3" fill="#000"/></svg>
<svg class="b" style="left:213px;top:133px;" width="8" height="22"><path d="M1 2.5h2M5 2.5h2" stroke="#000" stroke-width="1.4"/><path d="M1.2 13.5h5.6" stroke="#000" stroke-width="1.3"/><path d="M0.8 16h6.4L4 19.6Z" fill="#000"/></svg>
<svg class="b" style="left:50px;top:181px;" width="30" height="170"><path d="M2.5 0V161.5" stroke="#a0a0a0" stroke-width="1" stroke-dasharray="1 1"/><path d="M3 14.5H8" stroke="#a0a0a0" stroke-width="1" stroke-dasharray="1 1"/><path d="M3 35.5H8" stroke="#a0a0a0" stroke-width="1" stroke-dasharray="1 1"/><path d="M3 56.5H8" stroke="#a0a0a0" stroke-width="1" stroke-dasharray="1 1"/><path d="M3 77.5H8" stroke="#a0a0a0" stroke-width="1" stroke-dasharray="1 1"/><path d="M3 98.5H8" stroke="#a0a0a0" stroke-width="1" stroke-dasharray="1 1"/><path d="M3 119.5H8" stroke="#a0a0a0" stroke-width="1" stroke-dasharray="1 1"/><path d="M3 140.5H6" stroke="#a0a0a0" stroke-width="1" stroke-dasharray="1 1"/><path d="M3 161.5H8" stroke="#a0a0a0" stroke-width="1" stroke-dasharray="1 1"/></svg>
<svg class="b" style="left:37px;top:168px;" width="11" height="11"><rect x=".5" y=".5" width="9" height="9" rx="1" fill="#fff" stroke="#8a94a8"/><path d="M2.5 5h5" stroke="#223" stroke-width="1"/></svg>
<svg class="b" style="left:51px;top:165px" width="16" height="16" viewBox="0 0 16 16"><rect x="0" y="13" width="16" height="2.5" fill="#1f8fd0"/><path d="M0 13 L6 4 L9 8 L11 6 L16 13Z" fill="#9a9ac8"/><path d="M6 4 L4.2 7 L6 6.3 L7.6 7.2 L6 4Z M11 6 L9.8 7.5 L12.2 7.8Z" fill="#fff"/><path d="M0 13 L6 4 L9 8 L11 6 L16 13" fill="none" stroke="#000" stroke-width="1"/><circle cx="4" cy="3.5" r="2.6" fill="#ffd000" stroke="#f03000" stroke-width="1"/><path d="M9 1.5h6M8.5 3.5h5" stroke="#9cc4f0" stroke-width="1"/></svg>
<span class="t" style="left:69.00px;top:164.56px;font:400 12.8px/18px 'Liberation Sans',sans-serif;color:#000;letter-spacing:-0.444px;">STK_Fundamentals</span>
<div class="b" style="left:12px;top:227px;width:20px;height:21px;background:#f0f0f0"></div>
<div class="b" style="left:101px;top:227px;width:51px;height:21px;background:#f0f0f0"></div>
<div class="b" style="left:17px;top:190px;width:10px;height:10px;background:#ff00ff;border:1px solid #000"></div>
<svg class="b" style="left:72px;top:188.7px;" width="13" height="13"><rect x="0" y="0" width="13" height="13" rx="2" fill="#1467c8"/><path d="M3 6.6l2.6 2.6L10 4.2" fill="none" stroke="#fff" stroke-width="1.3"/></svg>
<svg class="b" style="left:86px;top:187px" width="16" height="16" viewBox="0 0 16 16"><g transform="rotate(45 8 8)"><path d="M8 -1 L9.3 3.5 L9.6 6 L15 10.5 L15 12 L9.6 10.6 L9.3 13 L11.2 15 L11.2 16 L8 15.2 L4.8 16 L4.8 15 L6.7 13 L6.4 10.6 L1 12 L1 10.5 L6.4 6 L6.7 3.5Z" fill="#9c9ca6" stroke="#222" stroke-width=".8"/><path d="M8 1.5v12" stroke="#555" stroke-width=".7"/></g><path d="M1 15.2l2.2-2.2" stroke="#f08a00" stroke-width="1.8"/></svg>
<span class="t" style="left:104.00px;top:186.16px;font:400 12.8px/18px 'Liberation Sans',sans-serif;color:#000;letter-spacing:0.205px;">Aircraft1</span>
<div class="b" style="left:17px;top:211px;width:10px;height:10px;background:#ff0000;border:1px solid #000"></div>
<svg class="b" style="left:72px;top:209.7px;" width="13" height="13"><rect x="0" y="0" width="13" height="13" rx="2" fill="#1467c8"/><path d="M3 6.6l2.6 2.6L10 4.2" fill="none" stroke="#fff" stroke-width="1.3"/></svg>
<svg class="b" style="left:86px;top:208px" width="16" height="16" viewBox="0 0 16 16"><path d="M3 9 V6.5 A5 5 0 0 1 13 6.5 V9Z" fill="#e8e8ec" stroke="#334" stroke-width=".9"/><path d="M6 4.5 A3 3 0 0 1 10 4.5" fill="none" stroke="#889" stroke-width=".8"/><path d="M1 15.5 V9.5 L4 8 h8 L15 9.5 V15.5Z" fill="#c8861c" stroke="#3a2400" stroke-width=".9"/><rect x="6" y="11" width="4" height="4.5" fill="#f0c060" stroke="#3a2400" stroke-width=".6"/></svg>
<span class="t" style="left:104.00px;top:207.16px;font:400 12.8px/18px 'Liberation Sans',sans-serif;color:#000;letter-spacing:-0.500px;">Guam_2_GU2_Leolut</span>
<div class="b" style="left:17px;top:232px;width:10px;height:10px;background:#ffff40;border:1px solid #000"></div>
<svg class="b" style="left:72px;top:230.7px;" width="13" height="13"><rect x="0" y="0" width="13" height="13" rx="2" fill="#1467c8"/><path d="M3 6.6l2.6 2.6L10 4.2" fill="none" stroke="#fff" stroke-width="1.3"/></svg>
<svg class="b" style="left:86px;top:229px" width="16" height="16" viewBox="0 0 16 16"><path d="M14.8 1.2 C11 1.5 7.5 4.5 4.5 9 L7 11.5 C11.5 8.5 14.5 5 14.8 1.2Z" fill="#f0f0f0" stroke="#222" stroke-width=".9"/><path d="M14.8 1.2 C13 1.4 11.6 2 10.4 2.9 L13.1 5.6 C14 4.4 14.6 3 14.8 1.2Z" fill="#d01818"/><path d="M4.5 9 L2 9.5 L4.2 6.8Z M7 11.5 L6.5 14 L9.2 11.8Z" fill="#d01818" stroke="#222" stroke-width=".5"/><path d="M4.6 11.4 L1.2 14.8" stroke="#f09000" stroke-width="1.8"/></svg>
<span class="t" style="left:104.00px;top:228.16px;font:400 12.8px/18px 'Liberation Sans',sans-serif;color:#000;letter-spacing:-0.029px;">Missile1</span>
<div class="b" style="left:17px;top:253px;width:10px;height:10px;background:#00ffff;border:1px solid #000"></div>
<svg class="b" style="left:72px;top:251.7px;" width="13" height="13"><rect x="0" y="0" width="13" height="13" rx="2" fill="#1467c8"/><path d="M3 6.6l2.6 2.6L10 4.2" fill="none" stroke="#fff" stroke-width="1.3"/></svg>
<svg class="b" style="left:86px;top:250px" width="16" height="16" viewBox="0 0 16 16"><path d="M8 15.5 L5.8 11 A4.8 4.8 0 1 1 10.2 11Z" fill="#f0c030" stroke="#3a2a00" stroke-width="1"/><circle cx="8" cy="6.2" r="1.8" fill="#fff"/></svg>
<span class="t" style="left:104.00px;top:249.16px;font:400 12.8px/18px 'Liberation Sans',sans-serif;color:#000;letter-spacing:0.350px;">Bloomington</span>
<div class="b" style="left:17px;top:274px;width:10px;height:10px;background:#ff0000;border:1px solid #000"></div>
<svg class="b" style="left:72px;top:272.7px;" width="13" height="13"><rect x="0" y="0" width="13" height="13" rx="2" fill="#1467c8"/><path d="M3 6.6l2.6 2.6L10 4.2" fill="none" stroke="#fff" stroke-width="1.3"/></svg>
<svg class="b" style="left:86px;top:271px" width="16" height="16" viewBox="0 0 16 16"><path d="M8 15.5 L5.8 11 A4.8 4.8 0 1 1 10.2 11Z" fill="#f0c030" stroke="#3a2a00" stroke-width="1"/><circle cx="8" cy="6.2" r="1.8" fill="#fff"/></svg>
<span class="t" style="left:104.00px;top:270.16px;font:400 12.8px/18px 'Liberation Sans',sans-serif;color:#000;letter-spacing:-0.388px;">White_House_DC</span>
<div class="b" style="left:17px;top:295px;width:10px;height:10px;background:#00ff00;border:1px solid #000"></div>
<svg class="b" style="left:72px;top:293.7px;" width="13" height="13"><rect x="0" y="0" width="13" height="13" rx="2" fill="#1467c8"/><path d="M3 6.6l2.6 2.6L10 4.2" fill="none" stroke="#fff" stroke-width="1.3"/></svg>
<svg class="b" style="left:86px;top:292px" width="16" height="16" viewBox="0 0 16 16"><g transform="rotate(-45 8 8)"><rect x="-1.5" y="5.6" width="6.4" height="4.8" fill="#2c3ca8" stroke="#10184a" stroke-width=".6"/><rect x="11.1" y="5.6" width="6.4" height="4.8" fill="#2c3ca8" stroke="#10184a" stroke-width=".6"/><path d="M0.6 5.6v4.8M2.7 5.6v4.8M13.2 5.6v4.8M15.3 5.6v4.8M-1.5 8h6.4M11.1 8h6.4" stroke="#9aa8f0" stroke-width=".5"/><rect x="5.2" y="5" width="5.6" height="6" fill="#e0b020" stroke="#403000" stroke-width=".7"/><path d="M8 1.5V5M8 11v3.5M6 1.5h4M6.4 14.5h3.2" stroke="#222" stroke-width="1"/></g></svg>
<span class="t" style="left:104.00px;top:291.16px;font:400 12.8px/18px 'Liberation Sans',sans-serif;color:#000;letter-spacing:-0.118px;">CircularSat</span>
<div class="b" style="left:17px;top:316px;width:10px;height:10px;background:#ff0000;border:1px solid #000"></div>
<svg class="b" style="left:72px;top:314.7px;" width="13" height="13"><rect x="0" y="0" width="13" height="13" rx="2" fill="#1467c8"/><path d="M3 6.6l2.6 2.6L10 4.2" fill="none" stroke="#fff" stroke-width="1.3"/></svg>
<svg class="b" style="left:86px;top:313px" width="16" height="16" viewBox="0 0 16 16"><g transform="rotate(-45 8 8)"><rect x="-1.5" y="5.6" width="6.4" height="4.8" fill="#2c3ca8" stroke="#10184a" stroke-width=".6"/><rect x="11.1" y="5.6" width="6.4" height="4.8" fill="#2c3ca8" stroke="#10184a" stroke-width=".6"/><path d="M0.6 5.6v4.8M2.7 5.6v4.8M13.2 5.6v4.8M15.3 5.6v4.8M-1.5 8h6.4M11.1 8h6.4" stroke="#9aa8f0" stroke-width=".5"/><rect x="5.2" y="5" width="5.6" height="6" fill="#e0b020" stroke="#403000" stroke-width=".7"/><path d="M8 1.5V5M8 11v3.5M6 1.5h4M6.4 14.5h3.2" stroke="#222" stroke-width="1"/></g></svg>
<span class="t" style="left:104.00px;top:312.16px;font:400 12.8px/18px 'Liberation Sans',sans-serif;color:#000;letter-spacing:-0.357px;">Geoeye1_33331</span>
<div class="b" style="left:17px;top:337px;width:10px;height:10px;background:#00ffff;border:1px solid #000"></div>
<svg class="b" style="left:72px;top:335.7px;" width="13" height="13"><rect x="0" y="0" width="13" height="13" rx="2" fill="#1467c8"/><path d="M3 6.6l2.6 2.6L10 4.2" fill="none" stroke="#fff" stroke-width="1.3"/></svg>
<svg class="b" style="left:86px;top:334px" width="16" height="16" viewBox="0 0 16 16"><g transform="rotate(-45 8 8)"><rect x="-1.5" y="5.6" width="6.4" height="4.8" fill="#2c3ca8" stroke="#10184a" stroke-width=".6"/><rect x="11.1" y="5.6" width="6.4" height="4.8" fill="#2c3ca8" stroke="#10184a" stroke-width=".6"/><path d="M0.6 5.6v4.8M2.7 5.6v4.8M13.2 5.6v4.8M15.3 5.6v4.8M-1.5 8h6.4M11.1 8h6.4" stroke="#9aa8f0" stroke-width=".5"/><rect x="5.2" y="5" width="5.6" height="6" fill="#e0b020" stroke="#403000" stroke-width=".7"/><path d="M8 1.5V5M8 11v3.5M6 1.5h4M6.4 14.5h3.2" stroke="#222" stroke-width="1"/></g></svg>
<span class="t" style="left:104.00px;top:333.16px;font:400 12.8px/18px 'Liberation Sans',sans-serif;color:#000;letter-spacing:-0.563px;">ZARYA_25544</span>
<svg class="b" style="left:57px;top:316px;" width="11" height="11"><rect x=".5" y=".5" width="9" height="9" rx="1" fill="#fff" stroke="#8a94a8"/><path d="M2.5 5h5M5 2.5v5" stroke="#223" stroke-width="1"/></svg>
<div class="b" style="left:229px;top:102px;width:3px;height:722px;background:#f0f0f0"></div>
<div class="b" style="left:233px;top:104px;width:1691px;height:695px;background:#fff"></div>
<div class="b" style="left:233px;top:104.2px;width:1691px;height:3.6px;background:linear-gradient(180deg,#a2a2a2 0,#a2a2a2 42%,#5a5a5a 58%,#5a5a5a 100%)"></div>
<div class="b" style="left:233px;top:104.2px;width:3.6px;height:690px;background:linear-gradient(90deg,#a2a2a2 0,#a2a2a2 42%,#5a5a5a 58%,#5a5a5a 100%)"></div>
<div class="b" style="left:232px;top:795px;width:1692px;height:1px;background:#a8a8a8"></div>
<div class="b" style="left:232px;top:798px;width:1692px;height:1px;background:#686868"></div>
<div class="b" style="left:236.4px;top:107.4px;width:841.6px;height:685.6px;border-radius:7px 0 0 0;background:linear-gradient(180deg,#b9c7d8 0,#c6d4e4 12px,#d6e3f1 32px,#d9e6f3 100%);border:1px solid #4e5258;border-top-color:#6a6e76;box-shadow:inset 1px 1px 0 #eef4fa"></div>
<svg class="b" style="left:246.4px;top:118px" width="16" height="16" viewBox="0 0 16 16"><circle cx="8" cy="8" r="7.4" fill="#1838b0" stroke="#000" stroke-width=".9"/><path d="M3 3.5 C5 1.5 8 1.5 8.5 3 C9 5 7 5.5 6 7.5 C5 9.5 3.5 8 2.2 7 C1.5 5.5 2 4.5 3 3.5Z" fill="#28a028"/><path d="M9 8 C11 7 13.5 8 13.5 10 C13 12.5 11 14.5 9.5 14 C9 12 8 10 9 8Z" fill="#28a028"/></svg>
<span class="t" style="left:266.40px;top:117.56px;font:400 12.8px/18px 'Liberation Sans',sans-serif;color:#8e8e8e;letter-spacing:0.059px;">3D Graphics 1 - Earth</span>
<div class="b" style="left:968.0px;top:117px;width:31px;height:18px;border-radius:3px;border:1px solid #8a96aa;background:linear-gradient(180deg,#ccd7e6,#dde7f3);box-shadow:inset 0 0 0 1px rgba(255,255,255,.55)"></div>
<svg class="b" style="left:977.0px;top:124px;" width="13" height="7"><rect x=".5" y="1.5" width="10" height="3.4" rx="1" fill="#fff" stroke="#555" stroke-width=".9"/></svg>
<div class="b" style="left:1002.3px;top:117px;width:31px;height:18px;border-radius:3px;border:1px solid #8a96aa;background:linear-gradient(180deg,#ccd7e6,#dde7f3);box-shadow:inset 0 0 0 1px rgba(255,255,255,.55)"></div>
<svg class="b" style="left:1012.3px;top:120px;" width="12" height="11"><rect x=".8" y=".8" width="9.4" height="7.4" fill="#fff" stroke="#555" stroke-width=".9"/><rect x="3.4" y="3.4" width="4.2" height="2.2" fill="#fff" stroke="#555" stroke-width=".9"/></svg>
<div class="b" style="left:1036.6px;top:117px;width:31px;height:18px;border-radius:3px;border:1px solid #8a96aa;background:linear-gradient(180deg,#ccd7e6,#dde7f3);box-shadow:inset 0 0 0 1px rgba(255,255,255,.55)"></div>
<svg class="b" style="left:1045.6px;top:120px;" width="13" height="11"><path d="M1.5 1.5h2.4l2.6 2.6 2.6-2.6h2.4L7.9 5l3.6 3.5H9.1L6.5 5.9 3.9 8.5H1.5L5.1 5Z" fill="#fff" stroke="#555" stroke-width=".8"/></svg>
<div class="b" style="left:1078px;top:107.4px;width:843px;height:685.6px;border-radius:0 7px 0 0;background:linear-gradient(180deg,#b9c7d8 0,#c6d4e4 12px,#d6e3f1 32px,#d9e6f3 100%);border:1px solid #4e5258;border-top-color:#6a6e76;box-shadow:inset 1px 1px 0 #eef4fa"></div>
<svg class="b" style="left:1088px;top:118px" width="16" height="16" viewBox="0 0 16 16"><rect x="0" y="0" width="16" height="16" fill="#00a0c0"/><path d="M1 1 C4 0 7 0.5 9 1.5 L12 1 L13 3 C11 4.5 12 6 10.5 7.5 C10 9.5 11.5 10.5 12.5 11 C14.5 11.5 15.5 13 15.5 16 L12.5 16 C12 14 11 12.5 9.5 12 C8 10.5 7 8.5 6 7 C4.5 5 3 4.5 1 1Z" fill="#0a5010"/><path d="M11 0.5h3.5v1.8H11Z" fill="#f0f4f8"/></svg>
<span class="t" style="left:1108.00px;top:117.56px;font:400 12.8px/18px 'Liberation Sans',sans-serif;color:#8e8e8e;letter-spacing:0.059px;">2D Graphics 1 - Earth</span>
<div class="b" style="left:1811.0px;top:117px;width:31px;height:18px;border-radius:3px;border:1px solid #8a96aa;background:linear-gradient(180deg,#ccd7e6,#dde7f3);box-shadow:inset 0 0 0 1px rgba(255,255,255,.55)"></div>
<svg class="b" style="left:1820.0px;top:124px;" width="13" height="7"><rect x=".5" y="1.5" width="10" height="3.4" rx="1" fill="#fff" stroke="#555" stroke-width=".9"/></svg>
<div class="b" style="left:1845.3px;top:117px;width:31px;height:18px;border-radius:3px;border:1px solid #8a96aa;background:linear-gradient(180deg,#ccd7e6,#dde7f3);box-shadow:inset 0 0 0 1px rgba(255,255,255,.55)"></div>
<svg class="b" style="left:1855.3px;top:120px;" width="12" height="11"><rect x=".8" y=".8" width="9.4" height="7.4" fill="#fff" stroke="#555" stroke-width=".9"/><rect x="3.4" y="3.4" width="4.2" height="2.2" fill="#fff" stroke="#555" stroke-width=".9"/></svg>
<div class="b" style="left:1879.6px;top:117px;width:31px;height:18px;border-radius:3px;border:1px solid #8a96aa;background:linear-gradient(180deg,#ccd7e6,#dde7f3);box-shadow:inset 0 0 0 1px rgba(255,255,255,.55)"></div>
<svg class="b" style="left:1888.6px;top:120px;" width="13" height="11"><path d="M1.5 1.5h2.4l2.6 2.6 2.6-2.6h2.4L7.9 5l3.6 3.5H9.1L6.5 5.9 3.9 8.5H1.5L5.1 5Z" fill="#fff" stroke="#555" stroke-width=".8"/></svg>
<div class="b" style="left:246px;top:138.4px;width:823px;height:28px;background:#fbfbfb;border-top:1px solid #707070;border-left:1px solid #9a9a9a"></div>
<div class="b" style="left:246px;top:783px;width:824.5px;height:1.6px;background:#fff"></div>
<div class="b" style="left:1069px;top:140px;width:1.6px;height:644.5px;background:#fff"></div>
<div class="b" style="left:1087px;top:783px;width:824.5px;height:1.6px;background:#fff"></div>
<div class="b" style="left:1910px;top:140px;width:1.6px;height:644.5px;background:#fff"></div>
<div class="b" style="left:249px;top:140.3px;width:149px;height:23.899999999999977px;border-radius:5px 6px 6px 4px;background:linear-gradient(180deg,#f8f8f8,#f3f3f3 60%,#ededed);box-shadow:0 1px 0 #a8a8a8,0 2px 1px rgba(0,0,0,.10)"></div>
<div class="b" style="left:387.5px;top:140.3px;width:10.5px;height:23.899999999999977px;border-radius:0 5px 5px 0;background:linear-gradient(180deg,#ececec,#c4c4c4 45%,#8c8c8c)"></div>
<svg class="b" style="left:388px;top:153.2px;" width="9" height="9"><path d="M1.5 1.5h6" stroke="#000" stroke-width="1.3"/><path d="M2.2 3.2h6v1h-6z" fill="#fff" opacity=".8"/><path d="M1 4h7L4.5 7.6Z" fill="#000"/><path d="M5.2 8 L8.6 4.4" stroke="#fff" stroke-width=".8" opacity=".9"/></svg>
<div class="b" style="left:252.4px;top:145.3px;width:2px;height:2px;background:#b4b48e"></div>
<div class="b" style="left:252.4px;top:149.3px;width:2px;height:2px;background:#b4b48e"></div>
<div class="b" style="left:252.4px;top:153.3px;width:2px;height:2px;background:#b4b48e"></div>
<div class="b" style="left:252.4px;top:157.3px;width:2px;height:2px;background:#b4b48e"></div>
<svg class="b" style="left:258px;top:143.6px" width="16" height="16" viewBox="0 0 16 16"><rect x="1.5" y="2.5" width="13" height="12" fill="#ffff60" stroke="#8a8a30" stroke-width=".9"/><path d="M3 6.2h10M3 8.4h10M3 10.6h10M3 12.8h10" stroke="#b0b060" stroke-width=".8"/><path d="M3.5 1v3M6.5 1v3M9.5 1v3M12.5 1v3" stroke="#605820" stroke-width="1"/><path d="M2 3h12" stroke="#c0b840" stroke-width="1.2"/></svg>
<div class="b" style="left:281px;top:143px;width:1px;height:18px;background:#b8b8a8"></div>
<svg class="b" style="left:287px;top:143.6px" width="16" height="16" viewBox="0 0 16 16"><path d="M4.5 15 C3 12.5 1 10.5 1.2 9 C1.5 7.8 3 8.2 4 9.8 L4 3.5 C4 2.2 5.8 2.2 5.8 3.5 L6 7 L6.2 2 C6.2 0.7 8 0.7 8 2 L8.2 7 L8.8 2.6 C9 1.4 10.6 1.6 10.5 2.9 L10.3 7.5 L11.4 4.5 C11.8 3.4 13.3 3.9 13 5.1 C12.5 8 13 11 11.5 15Z" fill="#fff" stroke="#000" stroke-width=".9"/><path d="M5 15.3h6.5v-1.8H5Z" fill="#90b8e8" stroke="#000" stroke-width=".5"/></svg>
<svg class="b" style="left:310px;top:143.6px" width="16" height="16" viewBox="0 0 16 16"><path d="M9.5 9.5 L14.8 14.8" stroke="#000" stroke-width="2.4"/><path d="M10 10 L14.5 14.5" stroke="#8aa0a0" stroke-width=".9"/><circle cx="6.5" cy="6.5" r="5" fill="#eaf4fa" stroke="#000" stroke-width="1.2"/><path d="M3.8 6.5h5.4M6.5 3.8v5.4" stroke="#000" stroke-width="1.5"/></svg>
<div class="b" style="left:333px;top:143px;width:1px;height:18px;background:#b8b8a8"></div>
<svg class="b" style="left:338px;top:143.6px" width="16" height="16" viewBox="0 0 16 16"><path d="M1.2 5.2 L4.2 3.2 L6 3 L7 1.8 L11 1.2 L12 2.4 L14.8 2.2 V11.5 L12 13.6 L3.5 14.8 L1.2 13Z" fill="#b8b8c4" stroke="#18c828" stroke-width="1.5" stroke-linejoin="round"/><path d="M4 4.2V14M4 4.2L14.4 2.8" fill="none" stroke="#333" stroke-width=".8"/><rect x="2" y="6" width="1.4" height="5.5" fill="#666"/><circle cx="9.4" cy="8.4" r="3.1" fill="#e8e8f0" stroke="#222" stroke-width=".9"/><circle cx="9.4" cy="8.4" r="1.5" fill="#334" /><rect x="11.4" y="3.6" width="2.2" height="1.4" fill="#444"/></svg>
<svg class="b" style="left:362px;top:143.6px" width="16" height="16" viewBox="0 0 16 16"><rect x="1.5" y="2.5" width="13" height="12" fill="#ffff60" stroke="#8a8a30" stroke-width=".9"/><path d="M3 6.2h10M3 8.4h10M3 10.6h10M3 12.8h10" stroke="#b0b060" stroke-width=".8"/><path d="M3.5 1v3M6.5 1v3M9.5 1v3M12.5 1v3" stroke="#605820" stroke-width="1"/><path d="M2 3h12" stroke="#c0b840" stroke-width="1.2"/><rect x="4" y="7" width="9" height="6.5" fill="#707078" stroke="#222" stroke-width=".8"/><circle cx="8.5" cy="10.3" r="1.9" fill="#d8e0f0" stroke="#000" stroke-width=".7"/><rect x="6" y="5.8" width="3" height="1.4" fill="#333"/></svg>
<div class="b" style="left:401.5px;top:140.3px;width:270.5px;height:23.899999999999977px;border-radius:5px 6px 6px 4px;background:linear-gradient(180deg,#f8f8f8,#f3f3f3 60%,#ededed);box-shadow:0 1px 0 #a8a8a8,0 2px 1px rgba(0,0,0,.10)"></div>
<div class="b" style="left:661.5px;top:140.3px;width:10.5px;height:23.899999999999977px;border-radius:0 5px 5px 0;background:linear-gradient(180deg,#ececec,#c4c4c4 45%,#8c8c8c)"></div>
<svg class="b" style="left:662px;top:153.2px;" width="9" height="9"><path d="M1.5 1.5h6" stroke="#000" stroke-width="1.3"/><path d="M2.2 3.2h6v1h-6z" fill="#fff" opacity=".8"/><path d="M1 4h7L4.5 7.6Z" fill="#000"/><path d="M5.2 8 L8.6 4.4" stroke="#fff" stroke-width=".8" opacity=".9"/></svg>
<div class="b" style="left:404.9px;top:145.3px;width:2px;height:2px;background:#b4b48e"></div>
<div class="b" style="left:404.9px;top:149.3px;width:2px;height:2px;background:#b4b48e"></div>
<div class="b" style="left:404.9px;top:153.3px;width:2px;height:2px;background:#b4b48e"></div>
<div class="b" style="left:404.9px;top:157.3px;width:2px;height:2px;background:#b4b48e"></div>
<svg class="b" style="left:411px;top:143.6px" width="16" height="16" viewBox="0 0 16 16"><path d="M1 7.5 C4 2.5 12 2.5 15 7.5 C12 11.5 4 11.5 1 7.5Z" fill="#f8f0d0" stroke="#b07010" stroke-width="1.2"/><circle cx="8" cy="7" r="2.9" fill="#58a028" stroke="#204000" stroke-width=".7"/><circle cx="8" cy="7" r="1.2" fill="#000"/><path d="M1.5 5 C5 0.8 11 0.8 14.5 5" fill="none" stroke="#b07010" stroke-width="1.1"/><path d="M0.8 15.4 L6.5 9.8" stroke="#000" stroke-width="1.6"/><path d="M0.6 15.6 L1 11.6 L4.8 15.2Z" fill="#000"/></svg>
<svg class="b" style="left:432px;top:149.6px;" width="7" height="4"><path d="M0 0h7L3.5 4Z" fill="#000"/></svg>
<svg class="b" style="left:445px;top:143.6px" width="16" height="16" viewBox="0 0 16 16"><path d="M1 7.5 C4 2.5 12 2.5 15 7.5 C12 11.5 4 11.5 1 7.5Z" fill="#f8f0d0" stroke="#b07010" stroke-width="1.2"/><circle cx="8" cy="7" r="2.9" fill="#58a028" stroke="#204000" stroke-width=".7"/><circle cx="8" cy="7" r="1.2" fill="#000"/><path d="M1.5 5 C5 0.8 11 0.8 14.5 5" fill="none" stroke="#b07010" stroke-width="1.1"/><path d="M3 12 L8 8 L13 12 V15.8 H9.6 V13 H6.4 V15.8 H3Z" fill="#fff" stroke="#000" stroke-width="1"/></svg>
<svg class="b" style="left:468px;top:143.6px" width="16" height="16" viewBox="0 0 16 16"><path d="M1 7.5 C4 2.5 12 2.5 15 7.5 C12 11.5 4 11.5 1 7.5Z" fill="#f8f0d0" stroke="#b07010" stroke-width="1.2"/><circle cx="8" cy="7" r="2.9" fill="#58a028" stroke="#204000" stroke-width=".7"/><circle cx="8" cy="7" r="1.2" fill="#000"/><path d="M1.5 5 C5 0.8 11 0.8 14.5 5" fill="none" stroke="#b07010" stroke-width="1.1"/><rect x="4" y="10" width="8" height="5.8" fill="#e8a818" stroke="#503000" stroke-width=".7"/><path d="M5.8 14.8V11l4.4 3.8V11" fill="none" stroke="#000" stroke-width="1"/></svg>
<svg class="b" style="left:491px;top:143.6px" width="16" height="16" viewBox="0 0 16 16"><path d="M1 7.5 C4 2.5 12 2.5 15 7.5 C12 11.5 4 11.5 1 7.5Z" fill="#f8f0d0" stroke="#b07010" stroke-width="1.2"/><circle cx="8" cy="7" r="2.9" fill="#58a028" stroke="#204000" stroke-width=".7"/><circle cx="8" cy="7" r="1.2" fill="#000"/><path d="M1.5 5 C5 0.8 11 0.8 14.5 5" fill="none" stroke="#b07010" stroke-width="1.1"/><path d="M3.5 11.5h9L8 15.8Z" fill="#1858e0"/></svg>
<div class="b" style="left:514px;top:143px;width:1px;height:18px;background:#b8b8a8"></div>
<svg class="b" style="left:519px;top:143.6px" width="16" height="16" viewBox="0 0 16 16"><path d="M1 7.5 C4 2.5 12 2.5 15 7.5 C12 11.5 4 11.5 1 7.5Z" fill="#f8f0d0" stroke="#b07010" stroke-width="1.2"/><circle cx="8" cy="7" r="2.9" fill="#58a028" stroke="#204000" stroke-width=".7"/><circle cx="8" cy="7" r="1.2" fill="#000"/><path d="M1.5 5 C5 0.8 11 0.8 14.5 5" fill="none" stroke="#b07010" stroke-width="1.1"/><path d="M0.8 15.4 L5.5 10.8" stroke="#000" stroke-width="1.5"/><path d="M0.6 15.6 L1 12 L4.4 15.2Z" fill="#000"/><ellipse cx="11.5" cy="10.5" rx="3.6" ry="1.6" fill="#e8ecf0" stroke="#445" stroke-width=".7"/><path d="M7.9 10.5v3.3c0 1 1.6 1.7 3.6 1.7s3.6-.7 3.6-1.7v-3.3" fill="#c8d0d8" stroke="#445" stroke-width=".7"/></svg>
<svg class="b" style="left:541px;top:149.6px;" width="7" height="4"><path d="M0 0h7L3.5 4Z" fill="#000"/></svg>
<div class="b" style="left:553.5px;top:143px;width:1px;height:18px;background:#b8b8a8"></div>
<svg class="b" style="left:560px;top:143.6px" width="16" height="16" viewBox="0 0 16 16"><path d="M8.5 5 L12.5 1 L15 3.5 L11 7.5Z" fill="#222" stroke="#555" stroke-width=".5"/><path d="M8.5 5 L11 7.5 L5 13.5 L2.5 11Z" fill="#e8d820" stroke="#605000" stroke-width=".6"/><path d="M2.5 11 L5 13.5 L2.5 15.5 L0.5 13.5Z" fill="#f4f060" stroke="#a09000" stroke-width=".5"/></svg>
<svg class="b" style="left:583px;top:143.6px" width="16" height="16" viewBox="0 0 16 16"><path d="M3.5 10 L11.5 2 C12.5 1 14.5 2.8 13.6 4 L5.8 12.2Z" fill="#e81818" stroke="#800" stroke-width=".6"/><path d="M3.5 10 L5.8 12.2 L1.5 14.5Z" fill="#f8d8b0" stroke="#800" stroke-width=".5"/><path d="M1 15l1.3-.7" stroke="#e81818" stroke-width="1.2"/></svg>
<svg class="b" style="left:606px;top:143.6px" width="16" height="16" viewBox="0 0 16 16"><text x="0.5" y="5" font-family="Liberation Sans,sans-serif" font-size="5.5" font-weight="700" fill="#000" stroke="#000" stroke-width=".3">A</text><text x="11" y="5" font-family="Liberation Sans,sans-serif" font-size="5.5" font-weight="700" fill="#000">B</text><path d="M1 7.5h14M1 6v3M15 6v3" stroke="#000" stroke-width=".9"/><rect x="0.8" y="10.5" width="14.4" height="4.5" fill="#e8a818" stroke="#503000" stroke-width=".7"/><path d="M3 10.5v2.2M5 10.5v1.4M7 10.5v2.2M9 10.5v1.4M11 10.5v2.2M13 10.5v1.4" stroke="#302000" stroke-width=".7"/></svg>
<div class="b" style="left:628.5px;top:143px;width:1px;height:18px;background:#b8b8a8"></div>
<svg class="b" style="left:636px;top:143.6px" width="16" height="16" viewBox="0 0 16 16"><circle cx="8" cy="7.5" r="7.3" fill="#2840d8" stroke="#102080" stroke-width=".7"/><ellipse cx="8" cy="7.5" rx="3" ry="6.8" fill="none" stroke="#e0e8ff" stroke-width=".7"/><path d="M1.2 7.5h13.6M2.2 4h11.6M2.2 11h11.6" stroke="#e0e8ff" stroke-width=".7"/><path d="M4.5 11.5h8L8.5 15.8Z" fill="#000" stroke="#fff" stroke-width=".5"/></svg>
<div class="b" style="left:675.5px;top:140.3px;width:47.0px;height:23.899999999999977px;border-radius:5px 6px 6px 4px;background:linear-gradient(180deg,#f8f8f8,#f3f3f3 60%,#ededed);box-shadow:0 1px 0 #a8a8a8,0 2px 1px rgba(0,0,0,.10)"></div>
<div class="b" style="left:712.0px;top:140.3px;width:10.5px;height:23.899999999999977px;border-radius:0 5px 5px 0;background:linear-gradient(180deg,#ececec,#c4c4c4 45%,#8c8c8c)"></div>
<svg class="b" style="left:712.5px;top:153.2px;" width="9" height="9"><path d="M1.5 1.5h6" stroke="#000" stroke-width="1.3"/><path d="M2.2 3.2h6v1h-6z" fill="#fff" opacity=".8"/><path d="M1 4h7L4.5 7.6Z" fill="#000"/><path d="M5.2 8 L8.6 4.4" stroke="#fff" stroke-width=".8" opacity=".9"/></svg>
<div class="b" style="left:678.9px;top:145.3px;width:2px;height:2px;background:#b4b48e"></div>
<div class="b" style="left:678.9px;top:149.3px;width:2px;height:2px;background:#b4b48e"></div>
<div class="b" style="left:678.9px;top:153.3px;width:2px;height:2px;background:#b4b48e"></div>
<div class="b" style="left:678.9px;top:157.3px;width:2px;height:2px;background:#b4b48e"></div>
<svg class="b" style="left:685px;top:143.6px" width="16" height="16" viewBox="0 0 16 16"><circle cx="8" cy="8" r="7.4" fill="#1838b0" stroke="#000" stroke-width=".9"/><path d="M3 3.5 C5 1.5 8 1.5 8.5 3 C9 5 7 5.5 6 7.5 C5 9.5 3.5 8 2.2 7 C1.5 5.5 2 4.5 3 3.5Z" fill="#28a028"/><path d="M9 8 C11 7 13.5 8 13.5 10 C13 12.5 11 14.5 9.5 14 C9 12 8 10 9 8Z" fill="#28a028"/><path d="M9 10h6.5v5.5H9Z" fill="#f8e820" stroke="#000" stroke-width=".8"/><path d="M10.2 14.2c1-2 1.5 0 2.2-1.6s1.2-.2 1.8-1" fill="none" stroke="#000" stroke-width=".6"/></svg>
<div class="b" style="left:728px;top:140.3px;width:48.5px;height:23.899999999999977px;border-radius:5px 6px 6px 4px;background:linear-gradient(180deg,#f8f8f8,#f3f3f3 60%,#ededed);box-shadow:0 1px 0 #a8a8a8,0 2px 1px rgba(0,0,0,.10)"></div>
<div class="b" style="left:766.0px;top:140.3px;width:10.5px;height:23.899999999999977px;border-radius:0 5px 5px 0;background:linear-gradient(180deg,#ececec,#c4c4c4 45%,#8c8c8c)"></div>
<svg class="b" style="left:766.5px;top:153.2px;" width="9" height="9"><path d="M1.5 1.5h6" stroke="#000" stroke-width="1.3"/><path d="M2.2 3.2h6v1h-6z" fill="#fff" opacity=".8"/><path d="M1 4h7L4.5 7.6Z" fill="#000"/><path d="M5.2 8 L8.6 4.4" stroke="#fff" stroke-width=".8" opacity=".9"/></svg>
<div class="b" style="left:731.4px;top:145.3px;width:2px;height:2px;background:#b4b48e"></div>
<div class="b" style="left:731.4px;top:149.3px;width:2px;height:2px;background:#b4b48e"></div>
<div class="b" style="left:731.4px;top:153.3px;width:2px;height:2px;background:#b4b48e"></div>
<div class="b" style="left:731.4px;top:157.3px;width:2px;height:2px;background:#b4b48e"></div>
<svg class="b" style="left:739px;top:143.6px" width="16" height="16" viewBox="0 0 16 16"><rect x="0.8" y="1" width="14.4" height="11" rx="1" fill="#2a3a68" stroke="#000" stroke-width=".9"/><rect x="2.2" y="2.4" width="11.6" height="8.2" fill="#1a2a90"/><circle cx="7" cy="6" r="3.2" fill="#5a98e8"/><path d="M5 5c1-1.5 3-1 3 .5s-2 2-3-.5Z" fill="#38a038"/><path d="M8 5.5h3.4v4.2h2L9.7 14 6 9.7h2Z" fill="#fff" stroke="#000" stroke-width=".7"/><rect x="4" y="13.2" width="8" height="1.8" fill="#556"/></svg>
<div class="b" style="left:1087px;top:137px;width:824px;height:29px;background:#fbfbfb;border-left:1px solid #9a9a9a"></div>
<div class="b" style="left:1087.5px;top:138px;width:179.5px;height:23.5px;border-radius:5px 6px 6px 4px;background:linear-gradient(180deg,#f8f8f8,#f3f3f3 60%,#ededed);box-shadow:0 1px 0 #a8a8a8,0 2px 1px rgba(0,0,0,.10)"></div>
<div class="b" style="left:1256.5px;top:138px;width:10.5px;height:23.5px;border-radius:0 5px 5px 0;background:linear-gradient(180deg,#ececec,#c4c4c4 45%,#8c8c8c)"></div>
<svg class="b" style="left:1257px;top:150.5px;" width="9" height="9"><path d="M1.5 1.5h6" stroke="#000" stroke-width="1.3"/><path d="M2.2 3.2h6v1h-6z" fill="#fff" opacity=".8"/><path d="M1 4h7L4.5 7.6Z" fill="#000"/><path d="M5.2 8 L8.6 4.4" stroke="#fff" stroke-width=".8" opacity=".9"/></svg>
<div class="b" style="left:1090.9px;top:143px;width:2px;height:2px;background:#b4b48e"></div>
<div class="b" style="left:1090.9px;top:147px;width:2px;height:2px;background:#b4b48e"></div>
<div class="b" style="left:1090.9px;top:151px;width:2px;height:2px;background:#b4b48e"></div>
<div class="b" style="left:1090.9px;top:155px;width:2px;height:2px;background:#b4b48e"></div>
<svg class="b" style="left:1097px;top:141.5px" width="16" height="16" viewBox="0 0 16 16"><rect x="1.5" y="2.5" width="13" height="12" fill="#ffff60" stroke="#8a8a30" stroke-width=".9"/><path d="M3 6.2h10M3 8.4h10M3 10.6h10M3 12.8h10" stroke="#b0b060" stroke-width=".8"/><path d="M3.5 1v3M6.5 1v3M9.5 1v3M12.5 1v3" stroke="#605820" stroke-width="1"/><path d="M2 3h12" stroke="#c0b840" stroke-width="1.2"/></svg>
<div class="b" style="left:1120.5px;top:141px;width:1px;height:18px;background:#b8b8a8"></div>
<div class="b" style="left:1124px;top:138px;width:23px;height:22.5px;background:#a9c1e9;border:1px solid #3a66c0"></div>
<svg class="b" style="left:1127px;top:141.5px" width="16" height="16" viewBox="0 0 16 16"><path d="M4.5 15 C3 12.5 1 10.5 1.2 9 C1.5 7.8 3 8.2 4 9.8 L4 3.5 C4 2.2 5.8 2.2 5.8 3.5 L6 7 L6.2 2 C6.2 0.7 8 0.7 8 2 L8.2 7 L8.8 2.6 C9 1.4 10.6 1.6 10.5 2.9 L10.3 7.5 L11.4 4.5 C11.8 3.4 13.3 3.9 13 5.1 C12.5 8 13 11 11.5 15Z" fill="#fff" stroke="#000" stroke-width=".9"/><path d="M5 15.3h6.5v-1.8H5Z" fill="#90b8e8" stroke="#000" stroke-width=".5"/></svg>
<div class="b" style="left:1149.5px;top:141px;width:1px;height:18px;background:#b8b8a8"></div>
<svg class="b" style="left:1155px;top:141.5px" width="16" height="16" viewBox="0 0 16 16"><path d="M9.5 9.5 L14.8 14.8" stroke="#000" stroke-width="2.4"/><path d="M10 10 L14.5 14.5" stroke="#8aa0a0" stroke-width=".9"/><circle cx="6.5" cy="6.5" r="5" fill="#eaf4fa" stroke="#000" stroke-width="1.2"/><path d="M3.8 6.5h5.4M6.5 3.8v5.4" stroke="#000" stroke-width="1.5"/></svg>
<svg class="b" style="left:1178px;top:141.5px" width="16" height="16" viewBox="0 0 16 16"><path d="M9.5 9.5 L14.8 14.8" stroke="#000" stroke-width="2.4"/><path d="M10 10 L14.5 14.5" stroke="#8aa0a0" stroke-width=".9"/><circle cx="6.5" cy="6.5" r="5" fill="#eaf4fa" stroke="#000" stroke-width="1.2"/><path d="M3.8 6.5h5.4" stroke="#000" stroke-width="1.5"/></svg>
<div class="b" style="left:1201px;top:141px;width:1px;height:18px;background:#b8b8a8"></div>
<svg class="b" style="left:1207px;top:141.5px" width="16" height="16" viewBox="0 0 16 16"><path d="M1.2 5.2 L4.2 3.2 L6 3 L7 1.8 L11 1.2 L12 2.4 L14.8 2.2 V11.5 L12 13.6 L3.5 14.8 L1.2 13Z" fill="#b8b8c4" stroke="#18c828" stroke-width="1.5" stroke-linejoin="round"/><path d="M4 4.2V14M4 4.2L14.4 2.8" fill="none" stroke="#333" stroke-width=".8"/><rect x="2" y="6" width="1.4" height="5.5" fill="#666"/><circle cx="9.4" cy="8.4" r="3.1" fill="#e8e8f0" stroke="#222" stroke-width=".9"/><circle cx="9.4" cy="8.4" r="1.5" fill="#334" /><rect x="11.4" y="3.6" width="2.2" height="1.4" fill="#444"/></svg>
<svg class="b" style="left:1230px;top:141.5px" width="16" height="16" viewBox="0 0 16 16"><rect x="1.5" y="2.5" width="13" height="12" fill="#ffff60" stroke="#8a8a30" stroke-width=".9"/><path d="M3 6.2h10M3 8.4h10M3 10.6h10M3 12.8h10" stroke="#b0b060" stroke-width=".8"/><path d="M3.5 1v3M6.5 1v3M9.5 1v3M12.5 1v3" stroke="#605820" stroke-width="1"/><path d="M2 3h12" stroke="#c0b840" stroke-width="1.2"/><rect x="4" y="7" width="9" height="6.5" fill="#707078" stroke="#222" stroke-width=".8"/><circle cx="8.5" cy="10.3" r="1.9" fill="#d8e0f0" stroke="#000" stroke-width=".7"/><rect x="6" y="5.8" width="3" height="1.4" fill="#333"/></svg>
<div class="b" style="left:1271px;top:138px;width:114px;height:23.5px;border-radius:5px 6px 6px 4px;background:linear-gradient(180deg,#f8f8f8,#f3f3f3 60%,#ededed);box-shadow:0 1px 0 #a8a8a8,0 2px 1px rgba(0,0,0,.10)"></div>
<div class="b" style="left:1374.5px;top:138px;width:10.5px;height:23.5px;border-radius:0 5px 5px 0;background:linear-gradient(180deg,#ececec,#c4c4c4 45%,#8c8c8c)"></div>
<svg class="b" style="left:1375px;top:150.5px;" width="9" height="9"><path d="M1.5 1.5h6" stroke="#000" stroke-width="1.3"/><path d="M2.2 3.2h6v1h-6z" fill="#fff" opacity=".8"/><path d="M1 4h7L4.5 7.6Z" fill="#000"/><path d="M5.2 8 L8.6 4.4" stroke="#fff" stroke-width=".8" opacity=".9"/></svg>
<div class="b" style="left:1274.4px;top:143px;width:2px;height:2px;background:#b4b48e"></div>
<div class="b" style="left:1274.4px;top:147px;width:2px;height:2px;background:#b4b48e"></div>
<div class="b" style="left:1274.4px;top:151px;width:2px;height:2px;background:#b4b48e"></div>
<div class="b" style="left:1274.4px;top:155px;width:2px;height:2px;background:#b4b48e"></div>
<svg class="b" style="left:1280px;top:141.5px" width="16" height="16" viewBox="0 0 16 16"><text x="0.5" y="5" font-family="Liberation Sans,sans-serif" font-size="5.5" font-weight="700" fill="#000" stroke="#000" stroke-width=".3">A</text><text x="11" y="5" font-family="Liberation Sans,sans-serif" font-size="5.5" font-weight="700" fill="#000">B</text><path d="M1 7.5h14M1 6v3M15 6v3" stroke="#000" stroke-width=".9"/><rect x="0.8" y="10.5" width="14.4" height="4.5" fill="#e8a818" stroke="#503000" stroke-width=".7"/><path d="M3 10.5v2.2M5 10.5v1.4M7 10.5v2.2M9 10.5v1.4M11 10.5v2.2M13 10.5v1.4" stroke="#302000" stroke-width=".7"/></svg>
<svg class="b" style="left:1304px;top:141.5px" width="16" height="16" viewBox="0 0 16 16"><path d="M1 1v6M1 4h3" stroke="#d01010" stroke-width="1.1"/><rect x="5" y="1.2" width="10" height="5" fill="#000"/><path d="M6 3.6h8" stroke="#fff" stroke-width=".8" stroke-dasharray="1.4 1"/><path d="M3 8.5h12" stroke="#d01010" stroke-width="1"/><text x="9" y="15.6" font-family="Liberation Sans,sans-serif" font-size="6.5" font-weight="700" fill="#000" text-anchor="middle">2:1</text></svg>
<svg class="b" style="left:1327px;top:141.5px" width="16" height="16" viewBox="0 0 16 16"><rect x="0.8" y="2" width="12" height="9" fill="#203020" stroke="#000" stroke-width=".8"/><path d="M0.8 5h12M0.8 8h12M4.8 2v9M8.8 2v9" stroke="#40c040" stroke-width=".7"/><rect x="4" y="6" width="11.4" height="9" fill="#000"/><path d="M4 9h11.4M4 12h11.4M7.8 6v9M11.6 6v9" stroke="#d8e8d8" stroke-width=".7"/></svg>
<svg class="b" style="left:1350px;top:141.5px" width="16" height="16" viewBox="0 0 16 16"><circle cx="8" cy="7.5" r="7.3" fill="#2840d8" stroke="#102080" stroke-width=".7"/><ellipse cx="8" cy="7.5" rx="3" ry="6.8" fill="none" stroke="#e0e8ff" stroke-width=".7"/><path d="M1.2 7.5h13.6M2.2 4h11.6M2.2 11h11.6" stroke="#e0e8ff" stroke-width=".7"/><path d="M4.5 11.5h8L8.5 15.8Z" fill="#000" stroke="#fff" stroke-width=".5"/></svg>
<div class="b" style="left:1391px;top:138px;width:46px;height:23.5px;border-radius:5px 6px 6px 4px;background:linear-gradient(180deg,#f8f8f8,#f3f3f3 60%,#ededed);box-shadow:0 1px 0 #a8a8a8,0 2px 1px rgba(0,0,0,.10)"></div>
<div class="b" style="left:1426.5px;top:138px;width:10.5px;height:23.5px;border-radius:0 5px 5px 0;background:linear-gradient(180deg,#ececec,#c4c4c4 45%,#8c8c8c)"></div>
<svg class="b" style="left:1427px;top:150.5px;" width="9" height="9"><path d="M1.5 1.5h6" stroke="#000" stroke-width="1.3"/><path d="M2.2 3.2h6v1h-6z" fill="#fff" opacity=".8"/><path d="M1 4h7L4.5 7.6Z" fill="#000"/><path d="M5.2 8 L8.6 4.4" stroke="#fff" stroke-width=".8" opacity=".9"/></svg>
<div class="b" style="left:1394.4px;top:143px;width:2px;height:2px;background:#b4b48e"></div>
<div class="b" style="left:1394.4px;top:147px;width:2px;height:2px;background:#b4b48e"></div>
<div class="b" style="left:1394.4px;top:151px;width:2px;height:2px;background:#b4b48e"></div>
<div class="b" style="left:1394.4px;top:155px;width:2px;height:2px;background:#b4b48e"></div>
<svg class="b" style="left:1401px;top:141.5px" width="16" height="16" viewBox="0 0 16 16"><rect x="0.8" y="1" width="14.4" height="11" rx="1" fill="#2a3a68" stroke="#000" stroke-width=".9"/><rect x="2.2" y="2.4" width="11.6" height="8.2" fill="#1a2a90"/><circle cx="7" cy="6" r="3.2" fill="#5a98e8"/><path d="M5 5c1-1.5 3-1 3 .5s-2 2-3-.5Z" fill="#38a038"/><path d="M8 5.5h3.4v4.2h2L9.7 14 6 9.7h2Z" fill="#fff" stroke="#000" stroke-width=".7"/><rect x="4" y="13.2" width="8" height="1.8" fill="#556"/></svg>
<div class="b" style="left:246px;top:166px;width:1px;height:618px;background:#8c8c8c"></div>
<div class="b" style="left:1087px;top:166px;width:1px;height:618px;background:#8c8c8c"></div>
<div class="b" style="left:232px;top:796px;width:1692px;height:28px;background:#fff"></div>
<div class="b" style="left:229px;top:820.4px;width:1695px;height:1.2px;background:#747474"></div>
<div class="b" style="left:229px;top:821.6px;width:1695px;height:2.6px;background:#f0f0f0"></div>
<div class="b" style="left:234.5px;top:799.5px;width:88px;height:21px;background:#f6f6f6;border-bottom:1px solid #8a8a8a"></div>
<div class="b" style="left:322.6px;top:798.6px;width:89px;height:22px;background:#fff;border-left:1.4px solid #5a5a5a;border-top:1px solid #b8b8b8"></div>
<div class="b" style="left:413px;top:802px;width:1px;height:15px;background:#8a8a8a"></div>
<svg class="b" style="left:236.5px;top:802.5px" width="16" height="16" viewBox="0 0 16 16"><circle cx="8" cy="8" r="7.4" fill="#1838b0" stroke="#000" stroke-width=".9"/><path d="M3 3.5 C5 1.5 8 1.5 8.5 3 C9 5 7 5.5 6 7.5 C5 9.5 3.5 8 2.2 7 C1.5 5.5 2 4.5 3 3.5Z" fill="#28a028"/><path d="M9 8 C11 7 13.5 8 13.5 10 C13 12.5 11 14.5 9.5 14 C9 12 8 10 9 8Z" fill="#28a028"/></svg>
<svg class="b" style="left:327px;top:802px" width="16" height="16" viewBox="0 0 16 16"><rect x="0" y="0" width="16" height="16" fill="#00a0c0"/><path d="M1 1 C4 0 7 0.5 9 1.5 L12 1 L13 3 C11 4.5 12 6 10.5 7.5 C10 9.5 11.5 10.5 12.5 11 C14.5 11.5 15.5 13 15.5 16 L12.5 16 C12 14 11 12.5 9.5 12 C8 10.5 7 8.5 6 7 C4.5 5 3 4.5 1 1Z" fill="#0a5010"/><path d="M11 0.5h3.5v1.8H11Z" fill="#f0f4f8"/></svg>
<span class="t" style="left:254px;top:803px;font:400 11.5px/15px 'Liberation Serif','Noto Serif CJK SC',serif;letter-spacing:1.05px;color:#000">3D Graph...</span>
<span class="t" style="left:344px;top:802.5px;font:400 11.5px/15px 'Liberation Serif','Noto Serif CJK SC',serif;letter-spacing:1.05px;color:#000">2D Graph...</span>
<svg class="b" style="left:247px;top:166px;" width="822" height="617" viewBox="247 166 822 617"><defs>
<clipPath id="lc3"><path d="M653.1,180.4 647.3,180.6 641.9,180.9 636.9,181.2 642.6,180.8 647.8,180.6 642.7,180.8 638.2,181.1 634.0,181.4 630.1,181.8 626.5,182.2 622.0,182.7 617.5,183.3 613.0,184.0 608.5,184.7 603.9,185.6 599.4,186.5 594.9,187.4 590.5,188.4 586.1,189.5 582.3,190.5 578.5,191.6 574.9,192.6 571.4,193.7 570.2,194.1 569.1,194.4 568.1,194.7 567.3,195.0 562.4,196.7 557.6,198.4 555.1,199.3 552.7,200.2 550.4,201.1 548.3,202.0 546.2,202.8 541.4,204.8 536.8,206.9 535.9,207.3 535.2,207.6 534.6,207.9 533.4,208.5 532.3,209.0 531.3,209.5 530.5,209.9 531.0,209.6 531.6,209.3 532.3,209.0 542.0,204.6 551.8,200.5 545.2,203.2 538.7,206.0 535.5,207.5 532.4,209.0 539.8,205.5 539.1,205.9 529.8,210.2 528.9,210.6 528.1,211.0 527.3,211.4 516.7,217.0 509.8,220.9 506.9,222.7 504.0,224.4 498.6,227.8 493.3,231.4 482.2,239.3 474.2,245.5 474.6,245.2 472.6,246.8 470.9,248.2 462.3,255.6 457.0,260.6 461.1,256.7 470.9,248.2 482.4,239.2 489.2,234.2 498.8,227.8 506.4,223.0 507.6,222.3 508.9,221.5 505.3,223.6 505.8,223.3 497.3,228.7 505.5,223.5 509.1,221.4 502.8,225.2 497.1,228.9 494.1,230.9 490.5,233.3 485.2,237.1 480.9,240.3 476.6,243.6 473.8,245.9 471.0,248.1 467.7,250.9 464.4,253.8 455.4,262.0 459.3,258.4 463.3,254.8 465.8,252.6 459.8,257.9 456.8,260.7 458.1,259.5 459.4,258.3 464.9,253.4 461.3,256.5 456.8,260.7 452.4,264.9 445.8,271.6 450.2,267.1 449.3,268.1 443.5,274.1 439.5,278.5 435.2,283.3 432.2,287.0 427.2,293.1 423.8,297.6 419.0,304.1 414.9,310.0 410.9,316.1 407.4,321.6 402.5,330.0 396.6,341.0 392.9,348.4 390.3,354.1 387.9,359.7 384.8,367.1 384.3,368.5 387.5,360.5 390.2,354.3 390.8,352.9 389.0,357.0 388.7,357.7 387.1,361.6 385.3,366.0 384.1,369.0 383.2,371.3 381.2,376.9 378.0,386.5 374.8,397.4 372.5,406.4 370.4,415.5 368.8,424.0 367.9,429.4 369.2,421.9 370.5,415.2 372.3,407.1 373.5,402.4 374.7,397.7 372.1,408.1 370.4,415.8 368.3,426.8 369.3,421.4 369.7,419.2 368.2,427.6 367.0,436.0 366.5,440.0 366.0,443.8 366.3,441.4 367.2,434.6 367.4,433.1 367.1,435.0 369.5,420.2 370.7,414.2 372.8,405.0 372.1,408.0 374.1,399.9 373.9,400.7 375.1,396.1 376.6,390.8 378.5,384.7 377.8,387.0 377.3,388.5 376.7,390.7 387.7,394.1 389.1,390.5 390.7,386.9 392.2,385.8 392.9,386.5 392.6,393.3 391.3,401.3 393.5,401.0 395.4,397.5 397.9,398.0 400.7,398.5 404.1,395.7 407.7,392.9 414.1,391.0 419.7,391.0 425.2,390.2 426.4,399.2 425.4,410.2 420.5,424.6 416.8,435.7 417.1,449.8 418.8,460.3 418.8,472.7 418.8,488.4 415.5,497.8 412.1,505.6 409.4,513.9 409.3,524.6 413.8,537.7 416.4,553.7 418.3,567.2 420.4,575.2 420.2,580.7 417.1,582.4 414.6,582.5 421.6,590.6 426.4,599.6 427.3,606.2 426.4,611.1 431.9,619.3 431.4,624.3 436.7,629.0 443.1,639.0 447.9,647.9 453.8,651.7 461.1,661.0 466.8,668.2 472.5,672.4 475.8,675.2 479.5,676.3 483.3,677.4 484.4,680.1 485.6,682.8 482.2,682.0 479.0,681.2 475.9,680.4 473.1,679.6 463.5,672.5 453.9,662.7 450.6,660.4 441.2,648.6 434.1,641.0 426.9,631.4 419.6,621.4 413.9,611.6 407.3,599.4 401.6,588.7 398.4,581.7 395.4,574.7 392.2,566.6 389.2,558.3 386.6,550.2 384.3,542.1 382.3,534.7 381.6,532.6 370.5,534.9 369.6,530.5 368.6,524.6 367.3,516.6 366.3,508.5 366.2,507.9 365.6,501.5 364.9,492.8 364.8,490.5 364.4,478.2 364.4,473.7 364.4,468.4 365.1,454.8 366.1,442.9 366.4,440.4 366.9,436.1 366.7,437.7 365.8,446.4 365.6,448.1 365.8,446.0 366.0,444.3 366.7,438.4 366.5,439.8 366.2,442.6 366.6,439.1 365.8,445.8 365.6,448.0 365.5,448.7 365.7,447.5 366.0,443.8 367.1,435.0 368.2,427.9 369.5,420.4 370.6,414.9 371.6,409.9 372.8,404.9 376.2,392.3 376.5,391.4 373.7,401.3 371.0,412.9 369.0,422.8 367.6,431.5 367.0,435.9 366.6,438.7 367.6,431.3 369.0,423.1 369.6,419.5 371.3,411.7 373.5,402.2 377.3,388.7 379.8,381.0 380.8,378.0 386.0,364.1 390.0,354.7 396.0,342.3 399.5,335.6 408.2,320.4 417.2,306.6 426.0,294.7 437.3,281.0 438.2,279.9 446.2,271.2 454.5,262.9 463.9,254.2 477.8,242.7 487.7,235.3 504.0,224.4 515.7,217.5 521.2,214.6 533.1,208.6 539.0,205.9 545.1,203.3 557.5,198.4 562.1,196.7 566.1,195.4 570.4,194.0 574.3,192.8 577.7,191.8 575.3,192.5 579.0,191.4 583.3,190.3 590.2,188.5 597.6,186.8 605.5,185.3 615.5,183.6 626.0,182.2 610.5,184.4 601.9,185.9 593.1,187.8 595.0,187.4 601.8,186.0 609.8,184.5 618.0,183.2 620.9,182.8 628.9,181.9 636.7,181.2 642.6,180.8 639.2,181.0 637.6,181.1 630.6,181.7 623.9,182.5 625.8,182.2 635.3,181.3 641.2,180.9 647.0,180.6ZM587.5,204.2 595.1,202.9 602.9,201.7 609.8,200.1 616.5,198.6 625.0,197.5 633.5,196.6 640.3,196.0 647.1,195.5 653.9,195.2 658.9,195.4 655.4,198.1 659.0,199.1 668.1,199.8 677.3,200.9 686.8,202.9 696.6,205.3 700.7,204.7 699.6,202.3 706.3,203.1 712.9,204.0 722.6,206.9 731.7,209.1 740.7,211.5 748.6,212.8 754.4,214.8 757.5,217.3 764.0,222.0 771.1,227.5 778.3,233.4 783.6,238.3 789.0,243.4 793.3,250.1 804.5,261.5 815.2,270.0 826.9,280.4 828.8,284.9 837.1,292.0 842.9,293.7 848.4,295.5 854.0,297.6 859.4,299.8 860.6,305.0 859.3,310.4 857.5,316.2 855.4,322.5 848.9,328.1 839.3,333.7 831.0,338.6 824.5,346.8 819.9,355.3 822.4,366.6 826.9,381.6 826.4,392.6 825.6,403.8 817.2,414.5 805.8,418.4 795.1,430.7 795.2,440.0 795.1,449.3 781.1,457.4 779.1,467.1 777.0,476.8 766.6,484.3 754.1,498.0 743.0,504.6 735.4,504.6 727.8,504.6 717.4,505.8 707.1,507.2 699.2,502.9 699.1,488.9 693.5,472.8 685.8,456.6 684.2,447.0 682.6,437.5 680.8,428.1 677.1,418.6 673.2,409.3 669.3,400.1 665.1,388.0 670.2,376.2 675.4,364.6 676.7,353.3 672.4,344.8 667.4,331.2 663.0,320.7 650.8,313.2 646.5,304.8 650.8,296.1 652.0,284.6 644.8,280.4 632.8,281.8 627.0,276.9 620.1,274.1 606.7,275.3 597.8,278.6 589.0,282.1 577.5,284.7 568.0,285.5 552.2,292.1 542.1,288.6 532.3,286.8 524.5,282.2 524.3,278.6 518.1,276.1 511.1,273.6 512.7,268.3 510.3,267.1 516.3,261.1 518.6,256.1 521.0,251.4 520.6,246.8 528.5,238.7 536.5,232.1 547.3,224.8 554.5,221.6 562.5,217.5 566.0,213.9 573.8,209.8 581.8,207.0ZM864.9,405.8 866.5,416.4 867.8,427.1 862.5,436.2 859.0,445.1 855.3,454.1 850.7,463.8 845.7,473.7 836.7,474.6 832.9,460.6 833.0,450.1 839.1,441.3 839.8,426.5 844.1,420.5 851.6,421.3 857.8,416.5ZM588.9,203.7 586.6,203.5 576.8,205.9 577.4,204.8 584.0,202.0 584.4,201.7 589.9,200.3 595.8,198.9 601.7,197.6 611.4,195.8 613.8,183.9 611.0,184.3 604.3,185.5 605.7,185.2 615.5,183.6 616.1,183.5 622.3,182.7 627.8,182.0 634.3,181.4 638.1,181.1 640.0,181.0 646.3,180.6 651.8,180.5 650.6,180.5 657.4,180.4 655.6,180.4 658.5,180.4 663.0,180.4 668.3,180.5 675.0,180.8 680.8,181.2 684.9,181.5 687.5,181.8 689.9,182.0 695.1,182.6 691.8,182.2 691.0,182.1 697.1,182.8 701.9,183.5 706.4,184.2 701.9,183.5 697.9,182.9 693.8,182.4 688.9,181.9 684.1,181.4 682.8,181.3 686.0,181.6 689.0,181.9 685.6,181.6 681.6,181.2 675.8,180.8 673.8,180.7 678.5,181.0 674.4,180.8 672.8,180.7 668.1,180.5 664.4,180.4 663.4,180.4 660.6,180.4 658.4,180.4 657.1,180.4 650.3,180.5 644.3,180.7 643.2,180.8 643.9,180.8 649.0,180.5 652.6,180.4 656.1,180.4 660.4,180.4 662.3,180.4 665.9,180.4 670.2,180.6 674.2,180.8 676.6,180.9 678.8,181.0 683.1,181.4 687.9,181.8 692.8,182.3 692.0,182.2 694.9,182.6 697.7,182.9 700.5,183.3 703.2,183.7 706.7,184.3 710.3,184.9 713.9,185.5 717.3,186.2 714.0,185.5 710.0,184.8 706.2,184.2 702.3,183.6 708.9,184.6 710.6,184.9 716.7,186.1 721.0,187.0 717.0,186.1 720.5,186.8 723.9,187.6 719.5,186.7 722.8,187.4 726.8,188.3 728.6,188.7 730.3,189.1 731.8,189.5 735.6,190.5 737.2,190.9 738.7,191.3 741.7,192.2 744.5,193.0 747.1,193.8 749.7,194.7 740.9,192.0 735.9,190.6 738.8,191.4 741.7,192.2 749.4,194.6 757.0,197.2 750.4,194.9 743.4,192.7 745.3,193.3 747.1,193.9 748.9,194.4 743.6,192.8 744.3,193.0 738.3,191.2 737.6,191.0 736.7,190.8 733.3,189.9 730.1,189.1 734.3,190.1 734.9,190.3 735.9,190.6 742.7,192.5 746.3,193.6 749.8,194.7 751.5,195.3 753.2,195.8 754.0,196.1 754.9,196.4 755.6,196.7 756.3,196.9 754.5,196.3 752.6,195.6 750.7,195.0 753.6,196.0 756.4,196.9 762.3,199.1 764.0,199.7 758.2,197.6 756.9,197.1 755.4,196.6 753.7,196.0 747.2,193.9 746.0,193.5 744.8,193.1 743.4,192.7 742.0,192.3 741.2,192.1 739.1,191.5 736.5,190.8 733.8,190.0 731.0,189.3 733.3,189.9 730.5,189.2 727.5,188.5 724.5,187.7 720.8,186.9 717.0,186.1 713.1,185.4 709.0,184.6 705.3,184.0 701.4,183.4 697.4,182.9 693.3,182.4 688.8,181.9 684.8,181.5 680.0,181.1 673.8,180.7 667.2,180.5 659.2,180.4 665.4,180.4 672.0,180.7 678.0,181.0 683.8,181.4 689.3,181.9 691.1,182.1 697.5,182.9 705.4,184.0 713.9,185.5 708.6,184.6 715.9,185.9 723.2,187.5 730.5,189.2 740.8,192.0 751.4,195.2 756.9,197.1 762.2,199.0 767.2,200.9 773.3,203.5 779.3,206.0 791.1,211.6 798.2,215.3 809.8,221.9 827.2,233.1 833.6,237.7 849.3,250.1 837.9,240.9 828.8,234.2 819.7,228.1 808.4,221.1 796.3,214.3 779.0,205.9 766.6,200.7 770.7,202.4 774.4,203.9 778.9,205.9 783.3,207.9 799.5,216.0 804.1,218.6 808.5,221.1 809.7,221.8 810.7,222.4 813.3,224.0 815.7,225.5 818.0,226.9 820.1,228.3 833.1,237.3 846.3,247.6 852.2,252.5 854.8,254.8 853.2,253.4 856.6,256.4 865.0,264.3 874.2,273.7 883.0,283.6 891.9,294.6 900.9,306.7 904.2,311.7 907.2,316.3 907.9,317.3 906.9,315.8 911.1,322.4 915.9,330.7 922.1,342.4 927.8,354.4 929.6,358.6 930.4,360.3 924.9,348.2 922.4,343.0 920.1,338.5 915.9,330.7 914.1,327.6 914.9,328.9 915.5,330.1 910.0,320.7 913.3,326.3 913.8,327.0 917.8,334.1 918.4,335.3 920.8,339.8 922.1,342.4 924.5,347.3 927.4,353.6 933.7,368.4 935.7,373.8 937.7,379.5 940.1,386.7 942.2,393.6 943.5,398.5 944.6,402.7 945.1,404.7 944.7,403.1 944.4,401.8 943.9,400.1 945.0,404.2 942.5,394.9 944.2,400.9 947.2,413.7 949.4,425.0 951.3,437.8 951.9,442.8 952.2,445.6 951.5,439.8 950.7,433.4 949.3,424.7 947.4,414.6 946.9,412.4 948.7,421.3 950.0,428.8 951.7,441.1 952.5,449.3 953.3,460.5 953.6,468.8 953.6,476.4 953.6,474.8 953.4,462.3 952.4,448.4 951.9,443.4 950.1,429.8 948.8,422.0 947.0,413.0 945.2,405.0 942.1,393.4 940.9,389.2 941.4,391.0 940.1,386.6 937.7,379.5 934.2,369.7 931.4,362.8 928.3,355.6 926.7,351.9 926.4,351.2 925.1,348.6 927.0,352.5 926.4,351.2 927.9,354.7 931.2,362.2 934.0,369.2 935.8,374.1 936.5,376.0 925.6,379.3 926.0,380.6 923.7,374.3 920.1,365.2 915.6,354.9 921.8,341.8 917.0,332.7 912.1,324.2 907.4,316.6 903.7,310.9 896.6,300.8 897.3,301.7 892.8,295.7 887.4,288.9 884.1,284.8 870.4,286.5 865.2,281.1 858.3,274.6 853.1,270.0 848.8,265.5 843.2,261.6 837.8,257.4 831.2,252.2 825.0,247.1 819.8,243.3 817.0,241.9 820.7,245.5 826.1,249.6 830.1,252.9 834.9,257.6 834.2,255.9 837.8,259.5 838.9,261.1 847.0,266.7 848.9,266.2 853.6,271.3 861.1,278.3 866.9,284.5 867.7,287.4 868.4,290.2 866.4,290.5 864.1,290.4 860.5,289.4 856.6,288.4 852.6,287.8 848.4,287.4 841.6,285.4 834.3,283.5 828.2,280.9 822.6,272.3 819.0,266.1 809.1,255.6 798.1,246.0 791.8,239.2 783.8,233.1 772.7,225.0 767.7,220.9 767.7,223.4 757.5,217.3 754.4,214.8 762.4,217.0 762.9,215.6 763.2,214.1 761.3,212.5 760.7,211.8 754.6,209.8 748.0,208.2 740.0,205.9 734.2,204.6 727.5,202.6 723.5,200.7 719.9,199.5 719.6,199.1 728.5,200.9 736.5,202.7 742.2,204.2 747.9,206.0 753.6,208.0 760.7,210.6 769.3,201.8 773.7,203.6 771.3,202.6 763.9,199.7 756.0,196.8 751.2,195.2 753.6,196.0 754.6,196.3 749.5,194.6 743.5,192.8 749.6,194.6 746.7,193.7 741.1,192.0 736.1,190.6 738.5,191.3 730.9,189.3 727.1,188.3 722.6,198.9 720.9,198.6 724.2,199.6 727.5,200.5 721.0,199.2 718.2,198.6 709.5,197.0 706.1,196.7 712.0,198.8 709.6,199.6 704.0,198.6 699.9,196.9 692.6,195.0 691.5,194.2 683.2,193.0 674.2,192.2 669.5,191.9 668.3,191.9 663.4,191.7 664.3,191.9 668.9,192.1 677.7,193.0 688.7,194.6 682.6,193.9 681.1,194.3 683.7,194.8 679.7,195.2 678.2,194.2 672.7,193.3 664.7,192.6 656.9,192.1 655.1,191.9 650.7,191.9 645.8,192.2 640.7,192.6 634.5,193.0 628.8,193.7 618.9,195.5 613.6,196.9 614.1,197.2 610.6,198.4 604.4,200.1 594.2,202.1ZM936.7,376.5 939.7,385.4 942.1,393.3 942.6,395.0 929.6,391.2ZM843.1,632.4 845.6,634.4 842.7,637.2 841.1,635.3Z"/></clipPath>
<filter id="b3e" x="-10%" y="-10%" width="120%" height="120%"><feGaussianBlur stdDeviation="5"/></filter>
<linearGradient id="an3" gradientUnits="userSpaceOnUse" x1="398.5" y1="365.7" x2="919.5" y2="584.3"><stop offset="0" stop-color="#70747a"/><stop offset=".5" stop-color="#a8acb2"/><stop offset=".62" stop-color="#e4e6ea"/><stop offset=".72" stop-color="#f8f8fa"/><stop offset="1" stop-color="#fff"/></linearGradient>
<linearGradient id="ds3" gradientUnits="userSpaceOnUse" x1="398.5" y1="365.7" x2="919.5" y2="584.3"><stop offset="0" stop-color="#5a4a30" stop-opacity=".15"/><stop offset=".5" stop-color="#6a5838" stop-opacity=".25"/><stop offset=".7" stop-color="#a88c60" stop-opacity=".4"/><stop offset="1" stop-color="#d0b080" stop-opacity=".5"/></linearGradient>
<linearGradient id="fo3" gradientUnits="userSpaceOnUse" x1="398.5" y1="365.7" x2="919.5" y2="584.3"><stop offset="0" stop-color="#080e05" stop-opacity=".45"/><stop offset=".5" stop-color="#101a08" stop-opacity=".5"/><stop offset=".62" stop-color="#1c3010" stop-opacity=".4"/><stop offset="1" stop-color="#2c4818" stop-opacity=".35"/></linearGradient>
<filter id="tx3" x="0" y="0" width="100%" height="100%"><feTurbulence type="fractalNoise" baseFrequency="0.045" numOctaves="4" seed="11"/><feColorMatrix type="matrix" values="0 0 0 0 0  0 0 0 0 0  0 0 0 0 0  1.6 0 0 0 -0.62"/></filter>
<filter id="tx4" x="0" y="0" width="100%" height="100%"><feTurbulence type="fractalNoise" baseFrequency="0.09" numOctaves="3" seed="5"/><feColorMatrix type="matrix" values="0 0 0 0 .85  0 0 0 0 .8  0 0 0 0 .55  0 1.5 0 0 -0.62"/></filter>
<linearGradient id="lmg" gradientUnits="userSpaceOnUse" x1="398.5" y1="365.7" x2="919.5" y2="584.3"><stop offset="0" stop-color="#000"/><stop offset=".42" stop-color="#000"/><stop offset=".7" stop-color="#fff"/><stop offset="1" stop-color="#fff"/></linearGradient>
<mask id="lm3" maskUnits="userSpaceOnUse" x="370" y="185" width="580" height="580"><rect x="370" y="185" width="580" height="580" fill="url(#lmg)"/></mask>
<clipPath id="gl3"><circle cx="659.0" cy="475.0" r="283.3"/></clipPath>
<filter id="b3a" x="-10%" y="-10%" width="120%" height="120%"><feGaussianBlur stdDeviation="9"/></filter>
<filter id="b3b" x="-10%" y="-10%" width="120%" height="120%"><feGaussianBlur stdDeviation="2.2"/></filter>
<filter id="b3d" x="-10%" y="-10%" width="120%" height="120%"><feGaussianBlur stdDeviation="1.3"/></filter>
<filter id="b3c" x="-10%" y="-10%" width="120%" height="120%"><feGaussianBlur stdDeviation=".7"/></filter>
<linearGradient id="rim3" gradientUnits="userSpaceOnUse" x1="398.5" y1="365.7" x2="919.5" y2="584.3"><stop offset="0" stop-color="#9fc8ff" stop-opacity="0"/><stop offset=".5" stop-color="#9fc8ff" stop-opacity="0"/><stop offset=".62" stop-color="#b8d8ff" stop-opacity=".75"/><stop offset=".8" stop-color="#eef6ff" stop-opacity="1"/><stop offset="1" stop-color="#fff" stop-opacity="1"/></linearGradient>
<linearGradient id="rimb" gradientUnits="userSpaceOnUse" x1="398.5" y1="365.7" x2="919.5" y2="584.3"><stop offset="0" stop-color="#3a78c8" stop-opacity="0"/><stop offset=".55" stop-color="#3a78c8" stop-opacity="0"/><stop offset=".75" stop-color="#4a88d8" stop-opacity=".5"/><stop offset="1" stop-color="#6aa8f0" stop-opacity=".75"/></linearGradient>
<linearGradient id="oc3" gradientUnits="userSpaceOnUse" x1="398.5" y1="365.7" x2="919.5" y2="584.3"><stop offset="0" stop-color="#050b14"/><stop offset=".5" stop-color="#081420"/><stop offset=".85" stop-color="#0b1b2b"/><stop offset="1" stop-color="#0d2134"/></linearGradient>
<linearGradient id="ld3" gradientUnits="userSpaceOnUse" x1="398.5" y1="365.7" x2="919.5" y2="584.3"><stop offset="0" stop-color="#18170e"/><stop offset=".25" stop-color="#262318"/><stop offset=".44" stop-color="#26261a"/><stop offset=".52" stop-color="#2e2f20"/><stop offset=".6" stop-color="#484a32"/><stop offset=".68" stop-color="#626442"/><stop offset=".8" stop-color="#827e58"/><stop offset="1" stop-color="#a09870"/></linearGradient>
</defs>
<rect x="247" y="166" width="822" height="617" fill="#000"/>
<g fill="#fff"><circle cx="417.4" cy="196.5" r="0.9" opacity="0.75"/><circle cx="463.3" cy="206.5" r="1.0" opacity="1"/><circle cx="485.6" cy="200.3" r="0.7" opacity="0.75"/><circle cx="502.6" cy="204.9" r="1.4" opacity="1"/><circle cx="493.3" cy="191.0" r="0.7" opacity="0.9"/><circle cx="502.6" cy="189.4" r="1.0" opacity="0.75"/><circle cx="519.6" cy="173.9" r="1.0" opacity="0.75"/><circle cx="542.8" cy="192.5" r="0.7" opacity="0.75"/><circle cx="603.2" cy="188.5" r="1.0" opacity="0.9"/><circle cx="623.4" cy="193.4" r="0.7" opacity="0.75"/><circle cx="631.1" cy="171.8" r="0.7" opacity="1"/><circle cx="674.5" cy="190.3" r="1.0" opacity="0.75"/><circle cx="720.9" cy="200.3" r="1.4" opacity="1"/><circle cx="733.3" cy="192.5" r="0.7" opacity="0.75"/><circle cx="341.5" cy="189.4" r="1.2" opacity="1"/><circle cx="341.5" cy="246.1" r="1.0" opacity="0.75"/><circle cx="342.5" cy="282.3" r="1.0" opacity="1"/><circle cx="364.2" cy="314.2" r="1.0" opacity="0.75"/><circle cx="368.8" cy="324.1" r="0.8" opacity="0.75"/><circle cx="414.3" cy="307.7" r="1.0" opacity="0.75"/><circle cx="408.1" cy="280.8" r="0.9" opacity="0.9"/><circle cx="397.3" cy="300.9" r="0.8" opacity="1"/><circle cx="392.6" cy="361.3" r="0.7" opacity="1"/><circle cx="344.6" cy="401.6" r="0.9" opacity="1"/><circle cx="734.3" cy="191.9" r="1.4" opacity="1"/><circle cx="721.0" cy="199.6" r="0.8" opacity="0.75"/><circle cx="748.3" cy="206.5" r="1.0" opacity="1"/><circle cx="885.1" cy="199.3" r="1.2" opacity="0.75"/><circle cx="893.2" cy="242.1" r="0.9" opacity="0.75"/><circle cx="936.6" cy="269.9" r="1.0" opacity="1"/><circle cx="966.6" cy="279.2" r="0.7" opacity="1"/><circle cx="941.8" cy="307.1" r="0.7" opacity="1"/><circle cx="1011.5" cy="252.9" r="0.8" opacity="0.9"/><circle cx="1043.4" cy="311.7" r="1.2" opacity="1"/><circle cx="892.3" cy="304.9" r="1.0" opacity="0.9"/><circle cx="907.8" cy="327.2" r="1.0" opacity="1"/><circle cx="911.5" cy="325.7" r="1.0" opacity="0.9"/><circle cx="935.0" cy="387.6" r="0.9" opacity="0.75"/><circle cx="937.8" cy="396.9" r="1.4" opacity="0.75"/><circle cx="938.7" cy="401.6" r="1.2" opacity="0.75"/><circle cx="964.1" cy="408.4" r="0.7" opacity="1"/><circle cx="987.7" cy="374.6" r="0.9" opacity="1"/><circle cx="1014.0" cy="424.2" r="1.0" opacity="0.9"/><circle cx="1045.6" cy="431.6" r="1.2" opacity="0.9"/><circle cx="1066.3" cy="425.7" r="0.9" opacity="1"/><circle cx="1031.6" cy="194.7" r="0.7" opacity="0.75"/><circle cx="340.0" cy="512.7" r="1.0" opacity="0.9"/><circle cx="347.7" cy="556.7" r="0.8" opacity="0.9"/><circle cx="424.2" cy="648.7" r="0.8" opacity="0.9"/><circle cx="478.4" cy="710.9" r="1.0" opacity="0.75"/><circle cx="508.8" cy="716.8" r="1.2" opacity="0.75"/><circle cx="490.8" cy="731.7" r="1.4" opacity="1"/><circle cx="515.9" cy="741.6" r="1.0" opacity="0.9"/><circle cx="525.8" cy="740.4" r="0.9" opacity="1"/><circle cx="433.8" cy="754.3" r="0.9" opacity="1"/><circle cx="431.4" cy="776.0" r="1.0" opacity="1"/><circle cx="508.8" cy="765.8" r="1.4" opacity="0.9"/><circle cx="592.4" cy="762.7" r="0.7" opacity="0.75"/><circle cx="972.2" cy="504.1" r="0.9" opacity="0.9"/><circle cx="1053.9" cy="543.4" r="1.2" opacity="1"/><circle cx="1040.9" cy="550.5" r="0.7" opacity="0.75"/><circle cx="1028.5" cy="552.7" r="1.2" opacity="1"/><circle cx="948.0" cy="581.5" r="0.9" opacity="1"/><circle cx="962.0" cy="602.5" r="1.0" opacity="1"/><circle cx="993.8" cy="614.9" r="1.4" opacity="0.9"/><circle cx="983.6" cy="639.7" r="0.9" opacity="1"/><circle cx="996.0" cy="659.5" r="1.0" opacity="1"/><circle cx="1050.8" cy="653.3" r="0.9" opacity="0.75"/><circle cx="954.2" cy="665.7" r="1.0" opacity="0.9"/><circle cx="947.1" cy="680.6" r="0.8" opacity="1"/><circle cx="947.4" cy="723.9" r="0.7" opacity="0.9"/><circle cx="875.9" cy="728.6" r="0.7" opacity="0.75"/><circle cx="871.5" cy="738.8" r="1.4" opacity="0.9"/><circle cx="813.9" cy="741.0" r="0.8" opacity="1"/><circle cx="923.2" cy="749.3" r="0.8" opacity="0.9"/><circle cx="954.2" cy="746.6" r="1.0" opacity="0.9"/><circle cx="763.1" cy="757.4" r="0.7" opacity="0.75"/><circle cx="829.4" cy="769.8" r="1.0" opacity="0.9"/><circle cx="861.3" cy="780.6" r="1.0" opacity="0.9"/><circle cx="307.4" cy="279.0" r="0.8" opacity="0.9"/><circle cx="322.6" cy="228.3" r="1.4" opacity="1"/><circle cx="307.4" cy="343.0" r="0.9" opacity="1"/><circle cx="290.9" cy="355.2" r="1.0" opacity="0.9"/><circle cx="260.4" cy="402.2" r="1.2" opacity="0.9"/><circle cx="266.5" cy="451.6" r="0.8" opacity="0.75"/><circle cx="254.3" cy="483.4" r="0.7" opacity="0.75"/><circle cx="306.2" cy="529.1" r="0.8" opacity="0.75"/><circle cx="260.4" cy="556.6" r="1.2" opacity="0.75"/><circle cx="307.4" cy="582.2" r="0.7" opacity="0.9"/><circle cx="254.3" cy="629.8" r="1.4" opacity="1"/><circle cx="330.6" cy="629.8" r="0.8" opacity="0.9"/><circle cx="266.5" cy="681.7" r="0.9" opacity="0.75"/><circle cx="272.6" cy="184.4" r="0.8" opacity="0.9"/><circle cx="297.0" cy="312.5" r="1.0" opacity="0.9"/><circle cx="281.8" cy="501.7" r="1.0" opacity="1"/><circle cx="315.3" cy="727.4" r="0.9" opacity="0.75"/><circle cx="251.3" cy="764.0" r="1.2" opacity="1"/></g>
<circle cx="659.0" cy="475.0" r="283.7" fill="none" stroke="url(#rimb)" stroke-width="3" filter="url(#b3d)" opacity=".9"/>
<g clip-path="url(#gl3)">
<circle cx="659.0" cy="475.0" r="283.3" fill="url(#oc3)"/>
<g filter="url(#b3a)"><path d="M774,175 772,179 770,184 769,187 767,193 766,196 764,202 762,205 761,211 761,217 760,223 760,226 758,232 757,237 756,241 754,247 753,250 751,256 751,259 749,265 748,268 746,274 745,277 743,283 742,286 740,292 738,295 736,301 735,304 733,311 732,314 730,319 729,323 727,328 725,332 724,336 722,341 721,344 719,350 718,353 715,359 714,362 712,368 711,371 709,375 707,380 706,383 704,389 702,392 700,398 699,401 697,406 695,410 694,414 692,419 690,422 688,428 687,431 685,436 683,440 682,443 679,449 678,452 676,458 674,461 673,465 670,470 669,473 667,480 665,483 664,487 662,492 660,495 658,501 656,504 654,508 653,513 651,516 649,522 647,525 645,529 643,534 642,537 639,543 638,546 636,550 634,555 633,558 630,564 629,567 627,570 625,576 623,579 621,584 619,588 618,591 615,597 614,600 612,603 610,609 608,612 606,616 604,621 602,624 600,629 598,633 597,636 594,642 592,646 591,649 588,654 586,658 585,661 582,666 580,670 579,673 576,678 574,682 573,685 570,690 568,694 566,697 564,701 561,706 559,709 558,712 555,716 552,721 550,724 548,727 545,730 541,733 539,736 537,742 535,745 534,749 531,754 530,757 528,762 526,766 524,769 522,775 519,775 513,775 507,775 501,775 495,775 488,775 482,775 476,775 470,775 464,775 458,775 452,775 446,775 440,775 434,775 428,775 422,775 416,775 410,775 404,775 398,775 392,775 386,775 380,775 374,775 368,775 362,775 359,775 359,769 359,763 359,757 359,751 359,745 359,739 359,733 359,727 359,721 359,715 359,709 359,703 359,697 359,691 359,685 359,679 359,673 359,667 359,661 359,655 359,649 359,643 359,636 359,630 359,624 359,618 359,612 359,606 359,600 359,594 359,588 359,582 359,576 359,570 359,564 358,558 358,552 358,546 358,540 358,534 358,528 358,522 358,516 358,510 358,504 358,498 358,492 358,486 358,480 358,473 358,467 358,461 358,455 358,449 358,443 358,437 358,431 358,425 358,419 358,413 358,407 358,401 358,395 358,389 358,383 358,377 358,371 358,365 358,359 358,353 358,347 358,341 358,335 358,329 358,323 358,317 358,311 358,304 358,298 358,292 358,286 358,280 358,274 358,268 358,262 358,256 358,250 358,244 358,238 358,232 358,226 358,220 358,214 358,208 358,202 358,196 358,190 358,184 358,178 359,174 365,174 371,174 377,174 383,174 389,174 395,174 401,174 407,174 413,174 419,174 425,174 431,174 437,174 443,174 449,174 455,174 461,174 467,174 473,174 479,174 485,174 491,174 498,175 504,175 510,175 516,175 522,175 528,175 534,175 540,175 546,175 552,175 558,175 564,175 570,175 576,175 582,175 588,175 594,175 600,175 606,175 612,175 618,175 624,175 630,175 636,175 642,175 648,175 654,175 661,175 667,175 673,175 679,175 685,175 691,175 697,175 703,175 709,175 715,175 721,175 727,175 733,175 739,175 745,175 751,175 757,175 763,175 769,175 774,175Z" fill="#000" opacity="0.25"/><path d="M800,175 798,178 796,182 794,187 793,190 790,195 788,199 787,202 784,208 783,211 781,214 780,220 781,226 780,232 779,238 778,244 777,247 776,253 775,256 774,262 772,267 771,271 769,277 768,280 766,286 766,289 764,295 763,298 761,304 760,307 758,314 757,317 755,323 754,326 751,332 750,335 748,341 747,344 745,350 744,353 742,358 741,362 739,366 737,371 736,374 734,380 733,383 730,389 729,392 727,398 726,401 724,406 722,410 721,414 719,419 717,422 715,428 714,431 712,436 710,440 709,444 707,449 705,452 703,458 702,461 700,466 698,470 697,473 694,480 693,483 691,488 689,492 688,495 685,501 684,504 682,509 680,513 679,516 676,522 675,525 673,530 671,534 670,537 667,543 666,546 664,551 662,555 660,558 658,564 656,567 654,571 652,576 651,579 648,584 647,588 645,591 642,597 641,600 639,604 637,609 635,612 633,617 631,621 630,624 627,629 625,633 624,636 621,642 619,646 618,649 615,654 613,658 612,661 609,666 607,670 606,673 603,677 601,682 599,685 597,688 594,694 593,697 591,700 588,705 586,709 584,712 582,715 579,720 576,724 574,727 572,730 569,733 567,736 564,739 559,742 558,746 556,751 555,754 553,760 552,763 549,769 548,772 546,775 540,775 534,775 528,775 522,775 516,775 510,775 504,775 498,775 491,775 485,775 479,775 473,775 467,775 461,775 455,775 449,775 443,775 437,775 431,775 425,775 419,775 413,775 407,775 401,775 395,775 389,775 383,775 377,775 371,775 365,775 359,775 359,772 359,766 359,760 359,754 359,748 359,742 359,736 359,730 359,724 359,718 359,712 359,706 359,700 359,694 359,688 359,682 359,676 359,670 359,664 359,658 359,652 359,646 359,639 359,633 359,627 359,621 359,615 359,609 359,603 358,597 358,591 358,585 358,579 358,573 358,567 358,561 358,555 358,549 358,543 358,537 358,531 358,525 358,519 358,513 358,507 358,501 358,495 358,489 358,483 358,477 358,470 358,464 358,458 358,452 358,446 358,440 358,434 358,428 358,422 358,416 358,410 358,404 358,398 358,392 358,386 358,380 358,374 358,368 358,362 358,356 358,350 358,344 358,338 358,332 358,326 358,320 358,314 358,307 358,301 358,295 358,289 358,283 358,277 358,271 358,265 358,259 358,253 358,247 358,241 358,235 358,229 358,223 358,217 358,211 358,205 358,199 358,193 358,187 358,181 358,175 362,174 368,174 374,174 380,174 386,174 392,174 398,174 404,174 410,174 416,174 422,174 428,174 434,174 440,174 446,174 452,174 458,174 464,174 470,174 476,174 482,174 488,174 495,174 501,174 507,174 513,174 519,174 525,174 531,174 537,174 543,175 549,175 555,175 561,175 567,175 573,175 579,175 585,175 591,175 597,175 603,175 609,175 615,175 621,175 627,175 633,175 639,175 645,175 651,175 657,175 664,175 670,175 676,175 682,175 688,175 694,175 700,175 706,175 712,175 718,175 724,175 730,175 736,175 742,175 748,175 754,175 760,175 766,175 772,175 778,175 784,175 790,175 796,175 800,175Z" fill="#000" opacity="0.28"/><path d="M832,175 830,178 827,183 825,187 823,190 820,194 818,199 816,202 814,205 811,210 809,214 807,217 805,220 802,225 801,229 802,235 803,238 802,244 802,247 801,253 800,259 799,263 798,268 797,274 796,277 795,283 793,288 792,292 790,298 790,301 788,307 787,311 785,317 784,320 782,326 781,329 779,335 778,338 776,344 775,347 773,353 772,356 770,362 769,365 767,371 766,374 764,380 763,383 760,389 759,392 757,398 756,401 754,406 753,410 751,414 749,419 748,422 746,428 744,431 742,437 741,440 739,445 737,449 736,453 734,458 733,461 730,467 729,470 727,475 725,480 724,483 721,489 720,492 718,497 716,501 715,504 713,510 711,513 709,519 707,522 706,526 703,531 702,534 700,539 698,543 697,546 694,552 693,555 691,560 689,564 687,567 685,573 683,576 682,580 679,585 678,588 676,593 674,597 672,600 670,606 668,609 666,612 664,618 662,621 661,624 658,630 656,633 654,637 652,643 650,646 648,649 645,655 644,658 642,661 639,666 638,670 636,673 633,677 631,682 629,685 627,688 624,694 623,697 621,700 618,704 615,709 614,712 612,715 609,719 606,723 604,727 602,730 599,733 597,736 594,740 591,743 588,745 583,748 582,751 580,757 579,760 577,766 576,771 575,775 570,775 564,775 558,775 552,775 546,775 540,775 534,775 528,775 522,775 516,775 510,775 504,775 498,775 491,775 485,775 479,775 473,775 467,775 461,775 455,775 449,775 443,775 437,775 431,775 425,775 419,775 413,775 407,775 401,775 395,775 389,775 383,775 377,775 371,775 365,775 359,775 359,772 359,766 359,760 359,754 359,748 359,742 359,736 359,730 359,724 359,718 359,712 359,706 359,700 359,694 359,688 359,682 359,676 359,670 359,664 359,658 359,652 359,646 358,639 358,633 358,627 358,621 358,615 358,609 358,603 358,597 358,591 358,585 358,579 358,573 358,567 358,561 358,555 358,549 358,543 358,537 358,531 358,525 358,519 358,513 358,507 358,501 358,495 358,489 358,483 358,477 358,470 358,464 358,458 358,452 358,446 358,440 358,434 358,428 358,422 358,416 358,410 358,404 358,398 358,392 358,386 358,380 358,374 358,368 358,362 358,356 358,350 358,344 358,338 358,332 358,326 358,320 358,314 358,307 358,301 358,295 358,289 358,283 358,277 358,271 358,265 358,259 358,253 358,247 358,241 358,235 358,229 358,223 358,217 358,211 358,205 358,199 358,193 358,187 358,181 358,175 362,174 368,174 374,174 380,174 386,174 392,174 398,174 404,174 410,174 416,174 422,174 428,174 434,174 440,174 446,174 452,174 458,174 464,174 470,174 476,174 482,174 488,174 495,174 501,174 507,174 513,174 519,174 525,174 531,174 537,174 543,174 549,174 555,174 561,174 567,174 573,174 579,175 585,175 591,175 597,175 603,175 609,175 615,175 621,175 627,175 633,175 639,175 645,175 651,175 657,175 664,175 670,175 676,175 682,175 688,175 694,175 700,175 706,175 712,175 718,175 724,175 730,175 736,175 742,175 748,175 754,175 760,175 766,175 772,175 778,175 784,175 790,175 796,175 802,175 808,175 814,175 820,175 827,175 832,175Z" fill="#000" opacity="0.2"/><path d="M886,175 884,178 881,182 878,186 875,190 873,193 870,196 868,199 866,202 863,206 860,210 857,214 854,217 852,220 850,223 848,226 845,230 842,234 839,238 836,241 834,244 832,247 832,253 833,256 834,262 834,268 833,274 833,279 832,283 831,289 830,295 829,298 828,304 827,311 826,314 824,320 823,323 822,329 820,334 819,338 818,344 817,347 815,353 814,356 812,362 811,365 809,371 808,374 807,380 805,384 804,389 802,393 800,398 799,401 797,407 796,410 794,416 793,419 791,425 790,428 788,434 786,437 784,443 783,446 781,451 780,455 778,459 776,464 775,467 773,473 771,477 769,482 768,486 766,490 764,495 763,498 760,504 759,507 757,512 755,516 754,519 752,525 750,528 748,533 746,537 745,540 742,546 741,549 739,554 737,558 736,561 733,567 732,570 730,574 728,579 726,582 724,587 722,591 721,594 718,600 716,603 715,606 712,612 710,615 709,619 706,624 704,627 703,631 700,636 698,639 697,643 694,648 692,652 690,655 688,660 686,664 684,667 682,671 679,676 677,679 676,682 673,687 670,691 669,694 667,697 664,702 661,706 659,709 657,712 654,717 652,721 650,724 647,727 645,730 642,734 639,738 636,741 633,745 630,748 627,751 624,753 621,755 617,757 616,763 616,769 615,772 612,775 606,775 600,775 594,775 588,775 582,775 576,775 570,775 564,775 558,775 552,775 546,775 540,775 534,775 528,775 522,775 516,775 510,775 504,775 498,775 491,775 485,775 479,775 473,775 467,775 461,775 455,775 449,775 443,775 437,775 431,775 425,775 419,775 413,775 407,775 401,775 395,775 389,775 383,775 377,775 371,775 365,775 359,775 359,772 359,766 359,760 359,754 359,748 359,742 359,736 359,730 359,724 359,718 358,712 358,706 358,700 358,694 358,688 358,682 358,676 358,670 358,664 358,658 358,652 358,646 358,639 358,633 358,627 358,621 358,615 358,609 358,603 358,597 358,591 358,585 358,579 358,573 358,567 358,561 358,555 358,549 358,543 358,537 358,531 358,525 358,519 358,513 358,507 358,501 358,495 358,489 358,483 358,477 358,470 358,464 358,458 358,452 358,446 358,440 358,434 358,428 358,422 358,416 358,410 358,404 358,398 358,392 358,386 358,380 358,374 358,368 358,362 358,356 358,350 358,344 358,338 358,332 358,326 358,320 358,314 358,307 358,301 358,295 358,289 358,283 358,277 358,271 358,265 358,259 358,253 358,247 358,241 358,235 358,229 358,223 358,217 358,211 358,205 358,199 358,193 358,187 358,181 358,175 362,174 368,174 374,174 380,174 386,174 392,174 398,174 404,174 410,174 416,174 422,174 428,174 434,174 440,174 446,174 452,174 458,174 464,174 470,174 476,174 482,174 488,174 495,174 501,174 507,174 513,174 519,174 525,174 531,174 537,174 543,174 549,174 555,174 561,174 567,174 573,174 579,174 585,174 591,174 597,174 603,174 609,174 615,174 621,174 627,174 633,175 639,175 645,175 651,175 657,175 664,175 670,175 676,175 682,175 688,175 694,175 700,175 706,175 712,175 718,175 724,175 730,175 736,175 742,175 748,175 754,175 760,175 766,175 772,175 778,175 784,175 790,175 796,175 802,175 808,175 814,175 820,175 827,175 833,175 839,175 845,175 851,175 857,175 863,175 869,175 875,175 881,175 886,175Z" fill="#000" opacity="0.16"/><path d="M959,175 959,181 959,187 959,193 959,197 956,200 953,203 950,206 947,209 944,211 941,214 938,217 935,220 932,223 928,226 925,229 922,232 919,235 915,238 912,241 909,244 905,247 902,250 899,253 896,256 893,259 890,262 887,264 884,267 881,270 878,273 875,276 872,278 869,281 869,285 870,289 871,295 872,301 872,307 871,314 871,320 870,326 869,332 869,335 868,341 866,347 866,350 865,356 863,362 862,365 861,371 860,376 859,380 857,386 856,389 855,395 854,398 852,404 851,408 849,413 848,418 846,422 845,428 843,431 842,437 840,440 839,446 837,449 836,454 834,458 833,463 831,467 830,471 828,477 827,480 824,486 823,489 821,495 820,498 817,503 816,507 814,511 812,516 811,519 809,525 808,528 805,533 804,537 802,540 800,546 799,549 796,554 795,558 793,561 791,567 789,570 787,575 785,579 784,582 781,588 780,591 778,594 775,600 774,603 772,607 770,612 768,615 766,619 764,624 762,627 760,631 757,636 756,639 754,643 751,648 749,652 748,655 745,660 743,664 741,667 739,670 736,676 734,679 732,682 730,686 727,691 725,694 723,697 721,701 718,705 715,709 713,712 711,715 709,719 706,723 703,727 700,730 698,733 695,736 693,739 690,742 687,745 684,748 681,751 677,754 673,756 670,759 668,763 668,769 668,775 664,775 657,775 651,775 645,775 639,775 633,775 627,775 621,775 615,775 609,775 603,775 597,775 591,775 585,775 579,775 573,775 567,775 561,775 555,775 549,775 543,775 537,775 531,775 525,775 519,775 513,775 507,775 501,775 495,775 488,775 482,775 476,775 470,775 464,775 458,775 452,775 446,775 440,775 434,775 428,775 422,775 416,775 410,775 404,775 398,776 392,776 386,776 380,776 374,776 368,776 362,776 358,775 358,769 358,763 358,757 358,751 358,745 358,739 358,733 358,727 358,721 358,715 358,709 358,703 358,697 358,691 358,685 358,679 358,673 358,667 358,661 358,655 358,649 358,643 358,636 358,630 358,624 358,618 358,612 358,606 358,600 358,594 358,588 358,582 358,576 358,570 358,564 358,558 358,552 358,546 358,540 358,534 358,528 358,522 358,516 358,510 358,504 358,498 358,492 358,486 358,480 358,473 358,467 358,461 358,455 358,449 358,443 358,437 358,431 358,425 358,419 358,413 358,407 358,401 358,395 358,389 358,383 358,377 358,371 358,365 358,359 358,353 358,347 358,341 358,335 358,329 358,323 358,317 358,311 358,304 358,298 358,292 358,286 358,280 358,274 358,268 358,262 358,256 358,250 358,244 358,238 358,232 358,226 358,220 358,214 358,208 358,202 358,196 358,190 358,184 358,178 359,174 365,174 371,174 377,174 383,174 389,174 395,174 401,174 407,174 413,174 419,174 425,174 431,174 437,174 443,174 449,174 455,174 461,174 467,174 473,174 479,174 485,174 491,174 498,174 504,174 510,174 516,174 522,174 528,174 534,174 540,174 546,174 552,174 558,174 564,174 570,174 576,174 582,174 588,174 594,174 600,174 606,174 612,174 618,174 624,174 630,174 636,174 642,174 648,174 654,174 661,174 667,174 673,174 679,174 685,174 691,175 697,175 703,175 709,175 715,175 721,175 727,175 733,175 739,175 745,175 751,175 757,175 763,175 769,175 775,175 781,175 787,175 793,175 799,175 805,175 811,175 817,175 823,175 830,175 836,175 842,175 848,175 854,175 860,175 866,175 872,175 878,175 884,175 890,175 896,175 902,175 908,175 914,175 920,175 926,175 932,175 938,175 944,175 950,175 956,175 959,175Z" fill="#000" opacity="0.12"/><path d="M959,175 959,181 959,187 959,193 959,199 959,205 959,211 959,217 959,223 959,229 959,235 959,241 959,247 959,253 959,259 959,265 959,271 959,277 959,283 959,289 959,294 956,296 953,298 948,301 944,304 941,305 938,307 933,311 929,313 926,314 923,317 918,320 914,322 911,323 907,326 902,329 904,335 905,339 906,344 906,350 906,356 906,362 905,368 905,373 905,377 904,383 903,389 902,394 901,398 900,404 899,409 898,413 897,419 896,422 894,428 893,434 892,437 890,443 890,446 888,452 887,456 885,461 884,466 882,470 881,475 879,480 878,484 876,489 875,493 873,498 872,502 870,507 869,510 867,516 865,519 863,525 862,528 860,534 858,537 857,541 855,546 854,549 851,555 850,558 848,563 846,567 845,570 842,576 841,579 839,584 836,588 835,591 833,597 831,600 829,603 827,609 825,612 823,615 821,621 819,624 817,627 814,633 813,636 811,639 808,645 806,649 805,652 802,656 799,661 798,664 796,667 793,671 791,676 789,679 787,682 784,686 781,691 779,694 777,697 775,700 772,704 769,708 766,712 764,715 762,718 759,721 757,724 754,727 751,731 748,734 745,737 742,740 739,742 735,745 730,748 727,750 726,754 727,759 728,763 729,769 730,772 730,775 724,775 718,775 712,775 706,775 700,775 694,775 688,775 682,775 676,775 670,775 664,775 657,775 651,775 645,775 639,775 633,775 627,775 621,775 615,775 609,775 603,775 597,775 591,775 585,775 579,775 573,775 567,775 561,775 555,775 549,775 543,775 537,775 531,775 525,775 519,775 513,775 507,775 501,775 495,775 488,776 482,776 476,776 470,776 464,776 458,776 452,776 446,776 440,776 434,776 428,776 422,776 416,776 410,776 404,776 398,776 392,776 386,776 380,776 374,776 368,776 362,776 358,775 358,769 358,763 358,757 358,751 358,745 358,739 358,733 358,727 358,721 358,715 358,709 358,703 358,697 358,691 358,685 358,679 358,673 358,667 358,661 358,655 358,649 358,643 358,636 358,630 358,624 358,618 358,612 358,606 358,600 358,594 358,588 358,582 358,576 358,570 358,564 358,558 358,552 358,546 358,540 358,534 358,528 358,522 358,516 358,510 358,504 358,498 358,492 358,486 358,480 358,473 358,467 358,461 358,455 358,449 358,443 358,437 358,431 358,425 358,419 358,413 358,407 358,401 358,395 358,389 358,383 358,377 358,371 358,365 358,359 358,353 358,347 358,341 358,335 358,329 358,323 358,317 358,311 358,304 358,298 358,292 358,286 358,280 358,274 358,268 358,262 358,256 358,250 358,244 358,238 358,232 358,226 358,220 358,214 358,208 358,202 358,196 358,190 358,184 358,178 359,174 365,174 371,174 377,174 383,174 389,174 395,174 401,174 407,174 413,174 419,174 425,174 431,174 437,174 443,174 449,174 455,174 461,174 467,174 473,174 479,174 485,174 491,174 498,174 504,174 510,174 516,174 522,174 528,174 534,174 540,174 546,174 552,174 558,174 564,174 570,174 576,174 582,174 588,174 594,174 600,174 606,174 612,174 618,174 624,174 630,174 636,174 642,174 648,174 654,174 661,174 667,174 673,174 679,174 685,174 691,174 697,174 703,174 709,174 715,174 721,174 727,174 733,174 739,174 745,174 751,175 757,175 763,175 769,175 775,175 781,175 787,175 793,175 799,175 805,175 811,175 817,175 823,175 830,175 836,175 842,175 848,175 854,175 860,175 866,175 872,175 878,175 884,175 890,175 896,175 902,175 908,175 914,175 920,175 926,175 932,175 938,175 944,175 950,175 956,175 959,175Z" fill="#000" opacity="0.08"/></g>
<path d="M653.1,180.4 647.3,180.6 641.9,180.9 636.9,181.2 642.6,180.8 647.8,180.6 642.7,180.8 638.2,181.1 634.0,181.4 630.1,181.8 626.5,182.2 622.0,182.7 617.5,183.3 613.0,184.0 608.5,184.7 603.9,185.6 599.4,186.5 594.9,187.4 590.5,188.4 586.1,189.5 582.3,190.5 578.5,191.6 574.9,192.6 571.4,193.7 570.2,194.1 569.1,194.4 568.1,194.7 567.3,195.0 562.4,196.7 557.6,198.4 555.1,199.3 552.7,200.2 550.4,201.1 548.3,202.0 546.2,202.8 541.4,204.8 536.8,206.9 535.9,207.3 535.2,207.6 534.6,207.9 533.4,208.5 532.3,209.0 531.3,209.5 530.5,209.9 531.0,209.6 531.6,209.3 532.3,209.0 542.0,204.6 551.8,200.5 545.2,203.2 538.7,206.0 535.5,207.5 532.4,209.0 539.8,205.5 539.1,205.9 529.8,210.2 528.9,210.6 528.1,211.0 527.3,211.4 516.7,217.0 509.8,220.9 506.9,222.7 504.0,224.4 498.6,227.8 493.3,231.4 482.2,239.3 474.2,245.5 474.6,245.2 472.6,246.8 470.9,248.2 462.3,255.6 457.0,260.6 461.1,256.7 470.9,248.2 482.4,239.2 489.2,234.2 498.8,227.8 506.4,223.0 507.6,222.3 508.9,221.5 505.3,223.6 505.8,223.3 497.3,228.7 505.5,223.5 509.1,221.4 502.8,225.2 497.1,228.9 494.1,230.9 490.5,233.3 485.2,237.1 480.9,240.3 476.6,243.6 473.8,245.9 471.0,248.1 467.7,250.9 464.4,253.8 455.4,262.0 459.3,258.4 463.3,254.8 465.8,252.6 459.8,257.9 456.8,260.7 458.1,259.5 459.4,258.3 464.9,253.4 461.3,256.5 456.8,260.7 452.4,264.9 445.8,271.6 450.2,267.1 449.3,268.1 443.5,274.1 439.5,278.5 435.2,283.3 432.2,287.0 427.2,293.1 423.8,297.6 419.0,304.1 414.9,310.0 410.9,316.1 407.4,321.6 402.5,330.0 396.6,341.0 392.9,348.4 390.3,354.1 387.9,359.7 384.8,367.1 384.3,368.5 387.5,360.5 390.2,354.3 390.8,352.9 389.0,357.0 388.7,357.7 387.1,361.6 385.3,366.0 384.1,369.0 383.2,371.3 381.2,376.9 378.0,386.5 374.8,397.4 372.5,406.4 370.4,415.5 368.8,424.0 367.9,429.4 369.2,421.9 370.5,415.2 372.3,407.1 373.5,402.4 374.7,397.7 372.1,408.1 370.4,415.8 368.3,426.8 369.3,421.4 369.7,419.2 368.2,427.6 367.0,436.0 366.5,440.0 366.0,443.8 366.3,441.4 367.2,434.6 367.4,433.1 367.1,435.0 369.5,420.2 370.7,414.2 372.8,405.0 372.1,408.0 374.1,399.9 373.9,400.7 375.1,396.1 376.6,390.8 378.5,384.7 377.8,387.0 377.3,388.5 376.7,390.7 387.7,394.1 389.1,390.5 390.7,386.9 392.2,385.8 392.9,386.5 392.6,393.3 391.3,401.3 393.5,401.0 395.4,397.5 397.9,398.0 400.7,398.5 404.1,395.7 407.7,392.9 414.1,391.0 419.7,391.0 425.2,390.2 426.4,399.2 425.4,410.2 420.5,424.6 416.8,435.7 417.1,449.8 418.8,460.3 418.8,472.7 418.8,488.4 415.5,497.8 412.1,505.6 409.4,513.9 409.3,524.6 413.8,537.7 416.4,553.7 418.3,567.2 420.4,575.2 420.2,580.7 417.1,582.4 414.6,582.5 421.6,590.6 426.4,599.6 427.3,606.2 426.4,611.1 431.9,619.3 431.4,624.3 436.7,629.0 443.1,639.0 447.9,647.9 453.8,651.7 461.1,661.0 466.8,668.2 472.5,672.4 475.8,675.2 479.5,676.3 483.3,677.4 484.4,680.1 485.6,682.8 482.2,682.0 479.0,681.2 475.9,680.4 473.1,679.6 463.5,672.5 453.9,662.7 450.6,660.4 441.2,648.6 434.1,641.0 426.9,631.4 419.6,621.4 413.9,611.6 407.3,599.4 401.6,588.7 398.4,581.7 395.4,574.7 392.2,566.6 389.2,558.3 386.6,550.2 384.3,542.1 382.3,534.7 381.6,532.6 370.5,534.9 369.6,530.5 368.6,524.6 367.3,516.6 366.3,508.5 366.2,507.9 365.6,501.5 364.9,492.8 364.8,490.5 364.4,478.2 364.4,473.7 364.4,468.4 365.1,454.8 366.1,442.9 366.4,440.4 366.9,436.1 366.7,437.7 365.8,446.4 365.6,448.1 365.8,446.0 366.0,444.3 366.7,438.4 366.5,439.8 366.2,442.6 366.6,439.1 365.8,445.8 365.6,448.0 365.5,448.7 365.7,447.5 366.0,443.8 367.1,435.0 368.2,427.9 369.5,420.4 370.6,414.9 371.6,409.9 372.8,404.9 376.2,392.3 376.5,391.4 373.7,401.3 371.0,412.9 369.0,422.8 367.6,431.5 367.0,435.9 366.6,438.7 367.6,431.3 369.0,423.1 369.6,419.5 371.3,411.7 373.5,402.2 377.3,388.7 379.8,381.0 380.8,378.0 386.0,364.1 390.0,354.7 396.0,342.3 399.5,335.6 408.2,320.4 417.2,306.6 426.0,294.7 437.3,281.0 438.2,279.9 446.2,271.2 454.5,262.9 463.9,254.2 477.8,242.7 487.7,235.3 504.0,224.4 515.7,217.5 521.2,214.6 533.1,208.6 539.0,205.9 545.1,203.3 557.5,198.4 562.1,196.7 566.1,195.4 570.4,194.0 574.3,192.8 577.7,191.8 575.3,192.5 579.0,191.4 583.3,190.3 590.2,188.5 597.6,186.8 605.5,185.3 615.5,183.6 626.0,182.2 610.5,184.4 601.9,185.9 593.1,187.8 595.0,187.4 601.8,186.0 609.8,184.5 618.0,183.2 620.9,182.8 628.9,181.9 636.7,181.2 642.6,180.8 639.2,181.0 637.6,181.1 630.6,181.7 623.9,182.5 625.8,182.2 635.3,181.3 641.2,180.9 647.0,180.6ZM587.5,204.2 595.1,202.9 602.9,201.7 609.8,200.1 616.5,198.6 625.0,197.5 633.5,196.6 640.3,196.0 647.1,195.5 653.9,195.2 658.9,195.4 655.4,198.1 659.0,199.1 668.1,199.8 677.3,200.9 686.8,202.9 696.6,205.3 700.7,204.7 699.6,202.3 706.3,203.1 712.9,204.0 722.6,206.9 731.7,209.1 740.7,211.5 748.6,212.8 754.4,214.8 757.5,217.3 764.0,222.0 771.1,227.5 778.3,233.4 783.6,238.3 789.0,243.4 793.3,250.1 804.5,261.5 815.2,270.0 826.9,280.4 828.8,284.9 837.1,292.0 842.9,293.7 848.4,295.5 854.0,297.6 859.4,299.8 860.6,305.0 859.3,310.4 857.5,316.2 855.4,322.5 848.9,328.1 839.3,333.7 831.0,338.6 824.5,346.8 819.9,355.3 822.4,366.6 826.9,381.6 826.4,392.6 825.6,403.8 817.2,414.5 805.8,418.4 795.1,430.7 795.2,440.0 795.1,449.3 781.1,457.4 779.1,467.1 777.0,476.8 766.6,484.3 754.1,498.0 743.0,504.6 735.4,504.6 727.8,504.6 717.4,505.8 707.1,507.2 699.2,502.9 699.1,488.9 693.5,472.8 685.8,456.6 684.2,447.0 682.6,437.5 680.8,428.1 677.1,418.6 673.2,409.3 669.3,400.1 665.1,388.0 670.2,376.2 675.4,364.6 676.7,353.3 672.4,344.8 667.4,331.2 663.0,320.7 650.8,313.2 646.5,304.8 650.8,296.1 652.0,284.6 644.8,280.4 632.8,281.8 627.0,276.9 620.1,274.1 606.7,275.3 597.8,278.6 589.0,282.1 577.5,284.7 568.0,285.5 552.2,292.1 542.1,288.6 532.3,286.8 524.5,282.2 524.3,278.6 518.1,276.1 511.1,273.6 512.7,268.3 510.3,267.1 516.3,261.1 518.6,256.1 521.0,251.4 520.6,246.8 528.5,238.7 536.5,232.1 547.3,224.8 554.5,221.6 562.5,217.5 566.0,213.9 573.8,209.8 581.8,207.0ZM864.9,405.8 866.5,416.4 867.8,427.1 862.5,436.2 859.0,445.1 855.3,454.1 850.7,463.8 845.7,473.7 836.7,474.6 832.9,460.6 833.0,450.1 839.1,441.3 839.8,426.5 844.1,420.5 851.6,421.3 857.8,416.5ZM588.9,203.7 586.6,203.5 576.8,205.9 577.4,204.8 584.0,202.0 584.4,201.7 589.9,200.3 595.8,198.9 601.7,197.6 611.4,195.8 613.8,183.9 611.0,184.3 604.3,185.5 605.7,185.2 615.5,183.6 616.1,183.5 622.3,182.7 627.8,182.0 634.3,181.4 638.1,181.1 640.0,181.0 646.3,180.6 651.8,180.5 650.6,180.5 657.4,180.4 655.6,180.4 658.5,180.4 663.0,180.4 668.3,180.5 675.0,180.8 680.8,181.2 684.9,181.5 687.5,181.8 689.9,182.0 695.1,182.6 691.8,182.2 691.0,182.1 697.1,182.8 701.9,183.5 706.4,184.2 701.9,183.5 697.9,182.9 693.8,182.4 688.9,181.9 684.1,181.4 682.8,181.3 686.0,181.6 689.0,181.9 685.6,181.6 681.6,181.2 675.8,180.8 673.8,180.7 678.5,181.0 674.4,180.8 672.8,180.7 668.1,180.5 664.4,180.4 663.4,180.4 660.6,180.4 658.4,180.4 657.1,180.4 650.3,180.5 644.3,180.7 643.2,180.8 643.9,180.8 649.0,180.5 652.6,180.4 656.1,180.4 660.4,180.4 662.3,180.4 665.9,180.4 670.2,180.6 674.2,180.8 676.6,180.9 678.8,181.0 683.1,181.4 687.9,181.8 692.8,182.3 692.0,182.2 694.9,182.6 697.7,182.9 700.5,183.3 703.2,183.7 706.7,184.3 710.3,184.9 713.9,185.5 717.3,186.2 714.0,185.5 710.0,184.8 706.2,184.2 702.3,183.6 708.9,184.6 710.6,184.9 716.7,186.1 721.0,187.0 717.0,186.1 720.5,186.8 723.9,187.6 719.5,186.7 722.8,187.4 726.8,188.3 728.6,188.7 730.3,189.1 731.8,189.5 735.6,190.5 737.2,190.9 738.7,191.3 741.7,192.2 744.5,193.0 747.1,193.8 749.7,194.7 740.9,192.0 735.9,190.6 738.8,191.4 741.7,192.2 749.4,194.6 757.0,197.2 750.4,194.9 743.4,192.7 745.3,193.3 747.1,193.9 748.9,194.4 743.6,192.8 744.3,193.0 738.3,191.2 737.6,191.0 736.7,190.8 733.3,189.9 730.1,189.1 734.3,190.1 734.9,190.3 735.9,190.6 742.7,192.5 746.3,193.6 749.8,194.7 751.5,195.3 753.2,195.8 754.0,196.1 754.9,196.4 755.6,196.7 756.3,196.9 754.5,196.3 752.6,195.6 750.7,195.0 753.6,196.0 756.4,196.9 762.3,199.1 764.0,199.7 758.2,197.6 756.9,197.1 755.4,196.6 753.7,196.0 747.2,193.9 746.0,193.5 744.8,193.1 743.4,192.7 742.0,192.3 741.2,192.1 739.1,191.5 736.5,190.8 733.8,190.0 731.0,189.3 733.3,189.9 730.5,189.2 727.5,188.5 724.5,187.7 720.8,186.9 717.0,186.1 713.1,185.4 709.0,184.6 705.3,184.0 701.4,183.4 697.4,182.9 693.3,182.4 688.8,181.9 684.8,181.5 680.0,181.1 673.8,180.7 667.2,180.5 659.2,180.4 665.4,180.4 672.0,180.7 678.0,181.0 683.8,181.4 689.3,181.9 691.1,182.1 697.5,182.9 705.4,184.0 713.9,185.5 708.6,184.6 715.9,185.9 723.2,187.5 730.5,189.2 740.8,192.0 751.4,195.2 756.9,197.1 762.2,199.0 767.2,200.9 773.3,203.5 779.3,206.0 791.1,211.6 798.2,215.3 809.8,221.9 827.2,233.1 833.6,237.7 849.3,250.1 837.9,240.9 828.8,234.2 819.7,228.1 808.4,221.1 796.3,214.3 779.0,205.9 766.6,200.7 770.7,202.4 774.4,203.9 778.9,205.9 783.3,207.9 799.5,216.0 804.1,218.6 808.5,221.1 809.7,221.8 810.7,222.4 813.3,224.0 815.7,225.5 818.0,226.9 820.1,228.3 833.1,237.3 846.3,247.6 852.2,252.5 854.8,254.8 853.2,253.4 856.6,256.4 865.0,264.3 874.2,273.7 883.0,283.6 891.9,294.6 900.9,306.7 904.2,311.7 907.2,316.3 907.9,317.3 906.9,315.8 911.1,322.4 915.9,330.7 922.1,342.4 927.8,354.4 929.6,358.6 930.4,360.3 924.9,348.2 922.4,343.0 920.1,338.5 915.9,330.7 914.1,327.6 914.9,328.9 915.5,330.1 910.0,320.7 913.3,326.3 913.8,327.0 917.8,334.1 918.4,335.3 920.8,339.8 922.1,342.4 924.5,347.3 927.4,353.6 933.7,368.4 935.7,373.8 937.7,379.5 940.1,386.7 942.2,393.6 943.5,398.5 944.6,402.7 945.1,404.7 944.7,403.1 944.4,401.8 943.9,400.1 945.0,404.2 942.5,394.9 944.2,400.9 947.2,413.7 949.4,425.0 951.3,437.8 951.9,442.8 952.2,445.6 951.5,439.8 950.7,433.4 949.3,424.7 947.4,414.6 946.9,412.4 948.7,421.3 950.0,428.8 951.7,441.1 952.5,449.3 953.3,460.5 953.6,468.8 953.6,476.4 953.6,474.8 953.4,462.3 952.4,448.4 951.9,443.4 950.1,429.8 948.8,422.0 947.0,413.0 945.2,405.0 942.1,393.4 940.9,389.2 941.4,391.0 940.1,386.6 937.7,379.5 934.2,369.7 931.4,362.8 928.3,355.6 926.7,351.9 926.4,351.2 925.1,348.6 927.0,352.5 926.4,351.2 927.9,354.7 931.2,362.2 934.0,369.2 935.8,374.1 936.5,376.0 925.6,379.3 926.0,380.6 923.7,374.3 920.1,365.2 915.6,354.9 921.8,341.8 917.0,332.7 912.1,324.2 907.4,316.6 903.7,310.9 896.6,300.8 897.3,301.7 892.8,295.7 887.4,288.9 884.1,284.8 870.4,286.5 865.2,281.1 858.3,274.6 853.1,270.0 848.8,265.5 843.2,261.6 837.8,257.4 831.2,252.2 825.0,247.1 819.8,243.3 817.0,241.9 820.7,245.5 826.1,249.6 830.1,252.9 834.9,257.6 834.2,255.9 837.8,259.5 838.9,261.1 847.0,266.7 848.9,266.2 853.6,271.3 861.1,278.3 866.9,284.5 867.7,287.4 868.4,290.2 866.4,290.5 864.1,290.4 860.5,289.4 856.6,288.4 852.6,287.8 848.4,287.4 841.6,285.4 834.3,283.5 828.2,280.9 822.6,272.3 819.0,266.1 809.1,255.6 798.1,246.0 791.8,239.2 783.8,233.1 772.7,225.0 767.7,220.9 767.7,223.4 757.5,217.3 754.4,214.8 762.4,217.0 762.9,215.6 763.2,214.1 761.3,212.5 760.7,211.8 754.6,209.8 748.0,208.2 740.0,205.9 734.2,204.6 727.5,202.6 723.5,200.7 719.9,199.5 719.6,199.1 728.5,200.9 736.5,202.7 742.2,204.2 747.9,206.0 753.6,208.0 760.7,210.6 769.3,201.8 773.7,203.6 771.3,202.6 763.9,199.7 756.0,196.8 751.2,195.2 753.6,196.0 754.6,196.3 749.5,194.6 743.5,192.8 749.6,194.6 746.7,193.7 741.1,192.0 736.1,190.6 738.5,191.3 730.9,189.3 727.1,188.3 722.6,198.9 720.9,198.6 724.2,199.6 727.5,200.5 721.0,199.2 718.2,198.6 709.5,197.0 706.1,196.7 712.0,198.8 709.6,199.6 704.0,198.6 699.9,196.9 692.6,195.0 691.5,194.2 683.2,193.0 674.2,192.2 669.5,191.9 668.3,191.9 663.4,191.7 664.3,191.9 668.9,192.1 677.7,193.0 688.7,194.6 682.6,193.9 681.1,194.3 683.7,194.8 679.7,195.2 678.2,194.2 672.7,193.3 664.7,192.6 656.9,192.1 655.1,191.9 650.7,191.9 645.8,192.2 640.7,192.6 634.5,193.0 628.8,193.7 618.9,195.5 613.6,196.9 614.1,197.2 610.6,198.4 604.4,200.1 594.2,202.1ZM936.7,376.5 939.7,385.4 942.1,393.3 942.6,395.0 929.6,391.2ZM843.1,632.4 845.6,634.4 842.7,637.2 841.1,635.3Z" fill="url(#ld3)" filter="url(#b3c)"/>
<g clip-path="url(#lc3)" filter="url(#b3e)"><path d="M531.4,230.0 540.0,225.4 548.7,221.1 557.3,217.1 565.9,213.4 573.3,211.0 580.6,208.9 588.1,206.8 595.5,205.0 603.0,203.3 610.5,201.8 617.6,201.1 624.8,200.5 632.1,200.1 639.5,199.8 647.0,199.7 654.5,199.7 661.3,199.8 668.1,200.0 674.9,200.4 681.7,200.9 688.6,201.5 695.4,202.2 702.1,203.1 708.9,204.1 715.6,205.2 722.3,206.5 729.2,208.2 736.1,210.0 742.9,212.0 749.7,214.2 756.5,216.5 763.2,218.9 768.1,222.6 772.9,226.7 777.8,231.0 782.7,235.7 787.6,240.7 793.3,246.6 799.0,252.9 804.6,259.5 810.2,266.5 803.5,266.0 796.5,265.6 789.2,265.4 781.8,263.2 774.4,261.1 766.7,259.2 759.0,257.4 751.1,255.7 743.2,254.2 735.1,252.8 726.9,251.6 718.7,250.5 710.4,249.5 701.7,248.1 693.0,246.9 684.3,245.9 675.6,245.0 666.9,244.3 658.2,243.7 649.5,243.3 640.9,243.1 632.3,243.0 623.7,243.1 615.2,243.3 606.8,243.7 598.5,244.2 590.3,244.8 582.1,245.6 574.1,246.5 566.2,247.6 558.5,248.7 550.9,250.1 543.4,251.5 536.1,253.1 529.0,254.9 522.1,256.7 515.3,258.7 517.3,253.8 519.4,249.3 521.6,244.9 523.9,240.8 526.3,236.9 528.8,233.3Z" fill="url(#ds3)"/><path d="M763.2,218.9 764.0,217.3 764.5,215.9 764.9,214.7 765.0,213.7 770.0,215.4 774.8,217.1 779.4,218.9 783.8,220.8 787.9,222.8 797.6,215.0 801.9,217.3 806.0,219.7 810.0,222.0 813.7,224.3 817.4,226.5 811.4,222.8 805.4,219.3 799.4,216.0 793.4,212.8 796.5,214.4 799.4,216.0 802.2,217.5 804.8,219.0 807.3,220.4 811.2,222.7 815.1,225.1 818.8,227.5 822.5,229.9 826.2,232.4 829.7,234.9 833.2,237.4 836.6,239.9 840.0,242.5 843.3,245.1 845.5,246.9 847.7,248.7 849.8,250.5 851.8,252.2 853.7,253.9 855.6,255.5 857.4,257.1 859.1,258.7 860.7,260.2 862.3,261.7 865.1,264.5 867.9,267.2 870.7,270.0 873.3,272.8 875.9,275.6 878.5,278.4 881.0,281.3 883.4,284.1 885.8,286.9 888.1,289.7 893.9,297.1 899.4,304.7 904.8,312.5 904.3,311.8 903.3,310.3 902.3,308.8 901.2,307.3 900.1,305.6 898.9,303.9 897.6,302.2 896.3,300.3 894.9,298.4 893.4,296.5 891.8,294.4 890.2,292.4 888.5,290.2 886.7,288.0 886.2,287.4 885.8,286.9 885.2,286.2 884.6,285.5 884.0,284.8 873.5,290.0 871.3,287.8 868.9,285.8 866.2,283.7 863.2,281.8 863.8,284.5 864.1,287.3 864.1,290.4 860.2,289.4 855.9,288.6 851.3,287.8 846.3,287.2 841.0,286.7 835.3,286.4 827.2,278.1 818.9,270.1 812.3,262.6 805.6,255.4 798.8,248.6 792.0,242.2 786.2,236.9 780.4,231.9 774.6,227.2 768.9,222.9Z" fill="url(#ds3)"/><path d="M822.6,280.6 829.4,283.6 836.0,286.7 842.4,289.9 848.6,293.2 854.6,296.6 860.3,300.1 860.4,305.3 860.2,310.8 859.7,316.5 859.0,322.5 853.4,324.8 847.4,327.3 841.0,330.1 833.4,320.4 825.5,311.0 822.8,303.2 819.8,295.7 816.8,288.4 819.8,284.4Z" fill="url(#ds3)"/><path d="M666.3,388.0 675.9,390.5 685.5,393.2 695.1,396.1 704.5,399.1 713.8,402.3 722.3,409.2 730.6,416.2 738.7,423.3 746.6,430.6 745.7,440.5 744.7,450.4 743.7,460.3 742.5,470.3 741.3,480.3 732.9,484.0 724.6,487.8 716.3,491.8 708.1,495.9 700.7,489.0 693.0,482.2 690.3,472.0 687.3,461.7 684.3,451.4 681.1,441.2 677.9,431.1 675.1,420.1 672.2,409.3 669.3,398.6Z" fill="url(#ds3)"/><path d="M379.5,521.5 380.4,524.8 381.6,528.2 383.5,535.4 385.6,542.6 388.0,549.8 390.7,557.0 393.7,564.2 396.9,571.3 400.5,580.1 404.5,588.7 408.7,597.2 413.3,605.6 408.5,601.5 404.8,594.7 401.3,587.8 398.0,580.9 394.9,573.9 392.1,566.9 389.5,559.8 387.1,552.7 384.8,544.9 382.8,537.1 381.0,529.3Z" fill="url(#ds3)"/><path d="M421.8,621.4 423.1,621.0 424.6,620.7 426.3,620.4 428.2,620.1 433.3,627.1 438.6,633.9 444.1,640.6 449.8,647.2 455.7,653.6 463.1,662.9 470.8,671.7 466.7,670.6 463.0,669.5 456.8,663.7 450.9,657.7 445.1,651.6 439.6,645.3 434.3,638.9 427.9,630.3Z" fill="url(#ds3)"/><path d="M531.2,279.1 538.9,277.0 546.7,275.0 554.6,273.1 562.7,271.3 570.9,269.7 579.1,268.2 587.5,266.9 596.0,265.7 604.5,265.5 613.0,265.4 621.6,265.4 630.3,265.6 639.1,266.0 647.9,266.5 656.7,267.2 665.6,268.0 674.5,269.0 683.3,270.1 692.2,271.4 701.0,272.8 709.8,274.4 718.6,276.2 727.3,278.1 735.9,280.2 744.4,282.4 752.9,284.7 761.3,287.2 769.5,289.8 781.0,299.0 792.2,308.5 790.4,315.9 788.3,323.6 786.1,331.6 783.7,339.8 791.8,347.0 799.8,354.4 807.5,361.9 815.0,369.5 814.7,378.6 814.3,387.7 813.7,397.1 805.4,394.7 796.9,392.4 788.1,390.2 779.2,388.2 770.1,386.3 760.9,384.6 752.1,381.8 743.3,379.2 734.3,376.7 725.2,374.3 716.0,372.1 706.7,370.0 697.4,368.1 687.9,366.3 678.5,364.7 675.4,354.7 672.4,344.8 669.3,335.3 666.1,325.9 656.9,315.6 647.7,305.8 647.7,297.8 647.7,290.0 647.8,282.5 638.5,282.6 629.2,282.8 619.9,283.2 610.8,283.7 601.6,284.4 592.6,285.3 583.7,286.3 574.8,287.5 566.1,288.8 556.5,289.2 547.2,289.7 538.1,290.4 529.2,291.3 530.2,285.1Z" fill="url(#fo3)"/><path d="M366.8,437.5 367.3,433.3 368.0,429.2 368.6,425.0 369.4,420.8 370.2,416.6 371.1,412.4 372.1,408.1 373.1,403.8 374.2,399.5 375.4,395.2 376.6,390.8 378.0,386.4 389.1,389.1 389.7,388.7 390.6,388.5 391.9,388.3 393.6,388.1 394.5,391.4 395.8,394.8 397.4,398.4 399.4,402.1 397.7,410.7 396.2,419.4 394.9,428.1 393.9,436.9 393.1,445.8 392.6,454.6 392.4,463.5 392.4,472.4 390.7,481.1 389.4,489.8 388.5,498.3 387.9,506.8 387.6,515.2 385.7,516.7 384.1,518.3 382.7,519.9 381.7,521.5 380.6,520.7 379.7,519.9 379.2,519.2 367.9,520.3 367.7,519.2 367.0,514.5 366.4,509.8 365.9,505.2 365.5,500.6 365.1,496.1 364.8,491.5 364.5,483.8 364.4,476.1 364.4,468.3 364.7,460.6 365.2,452.9 365.9,445.2Z" fill="url(#fo3)"/><path d="M582.0,202.4 588.0,200.8 594.0,199.3 600.1,197.9 606.2,196.7 612.3,195.6 618.4,194.7 623.9,194.0 629.3,193.4 634.8,192.9 640.3,192.5 645.8,192.2 651.4,192.0 656.9,191.9 662.5,191.9 668.0,192.0 673.5,192.2 679.0,192.5 684.4,192.9 689.8,193.4 695.1,194.0 700.4,194.8 705.6,195.6 712.8,185.3 718.0,186.3 723.2,187.5 728.3,188.6 732.7,189.7 736.8,190.8 740.7,191.9 744.3,193.0 747.7,194.0 750.9,195.1 747.5,194.0 744.2,192.9 740.8,192.0 737.5,191.0 734.1,190.1 729.4,188.9 724.8,187.8 720.1,186.8 715.5,185.8 710.9,185.0 706.4,184.2 702.8,183.6 699.2,183.1 695.5,182.6 691.8,182.2 688.0,181.8 684.1,181.4 680.2,181.1 676.2,180.9 672.2,180.7 668.2,180.5 664.1,180.4 659.9,180.4 655.7,180.4 652.1,180.4 648.2,180.6 643.9,180.8 639.4,181.0 633.8,181.5 627.9,182.0 622.0,182.7 615.9,183.5 609.7,184.5 603.3,185.7 595.5,187.3 587.4,189.2Z" fill="url(#fo3)"/><path d="M902.7,309.4 904.3,311.8 905.8,314.0 907.2,316.2 908.5,318.3 909.7,320.3 910.9,322.2 912.0,324.0 913.0,325.7 914.0,327.3 914.8,328.9 916.4,331.6 917.8,334.2 919.2,336.8 920.6,339.4 921.8,341.9 923.1,344.4 924.3,346.8 925.4,349.2 925.7,349.7 925.4,349.2 924.9,348.1 924.3,346.8 923.6,345.3 922.8,343.7 921.9,341.9 920.9,340.0 919.8,337.9 918.5,335.5 923.1,344.4 927.3,353.3 931.2,362.2 934.8,371.2 938.0,380.2 940.9,389.2 941.7,391.9 942.4,394.3 943.0,396.6 943.6,398.7 944.1,400.7 944.6,402.4 945.0,404.1 945.3,405.6 943.7,399.1 941.9,392.9 940.1,386.6 938.0,380.4 935.9,374.3 933.6,368.2 931.1,362.1 928.6,356.0 930.0,359.5 931.4,362.8 932.8,366.1 934.1,369.4 935.3,372.6 936.5,375.9 934.4,370.4 921.6,369.1 918.7,361.9 915.6,354.9 912.3,348.0 918.8,335.9 915.0,329.1 911.0,322.4 906.9,315.8Z" fill="url(#fo3)"/><path d="M760.6,390.4 769.4,392.0 778.2,393.8 786.7,395.7 795.1,397.7 803.3,399.9 814.1,391.5 824.4,383.5 824.0,392.7 823.3,402.0 822.5,411.5 816.7,419.2 810.8,427.0 804.8,435.1 798.6,443.3 792.2,451.8 787.1,460.0 782.0,468.3 776.7,476.7 771.5,485.2 760.1,492.6 748.7,500.4 738.8,499.0 728.7,497.8 733.9,487.3 739.1,476.8 744.3,466.4 749.5,456.1 751.4,446.5 753.1,436.9 754.8,427.4 756.4,418.0 757.8,408.7 759.3,399.5Z" fill="url(#fo3)"/></g>
<g clip-path="url(#lc3)"><rect x="375" y="190" width="570" height="570" filter="url(#tx3)" opacity=".55"/><g mask="url(#lm3)"><rect x="375" y="190" width="570" height="570" filter="url(#tx4)" opacity=".3"/></g></g>
<path d="M781.1,317.0 787.7,314.5 794.3,319.5 793.6,325.0 790.2,329.4 783.2,327.2 781.9,322.0ZM768.1,328.7 771.6,334.5 774.5,345.5 778.4,357.1 775.6,357.0 770.6,346.3 768.3,336.4ZM794.4,366.9 797.4,372.7 798.0,384.1 799.5,394.8 796.5,392.3 795.0,380.5 793.8,371.7Z" fill="#0a1420"/>
<path d="M671.7,757.3 670.1,757.4 668.5,757.4 666.9,757.5 665.3,757.5 663.7,757.6 662.1,757.6 660.5,757.6 658.9,757.6 657.2,757.6 655.6,757.6 654.0,757.6 652.3,757.6 650.6,757.6 648.9,757.5 647.1,757.5 645.4,757.4 643.6,757.3 641.8,757.2 640.0,757.1 638.2,757.0 636.1,756.9 634.0,756.7 631.8,756.5 629.6,756.4 627.4,756.1 625.1,755.9 622.8,755.6 620.5,755.3 618.1,755.0 615.7,754.6 613.8,754.3 612.0,753.9 610.2,753.6 608.3,753.2 606.5,752.8 604.7,752.4 603.0,751.9 601.3,751.5 599.6,751.0 597.9,750.5 596.0,750.0 594.2,749.5 592.4,748.9 590.7,748.4 588.9,747.8 587.2,747.2 585.5,746.5 583.9,745.9 582.3,745.2 580.7,744.5 578.0,743.6 575.3,742.5 572.6,741.5 571.9,740.8 571.3,740.1 570.7,739.5 570.2,738.8 569.8,738.1 569.5,737.5 569.2,736.8 569.1,736.1 569.0,735.4 569.1,734.1 569.3,733.4 567.4,732.1 565.5,730.7 563.8,729.3 558.7,726.6 553.7,723.8 548.9,720.7 542.5,716.7 536.3,712.4 530.3,707.8 528.5,705.2 526.8,702.6 525.3,699.9 525.8,698.4 526.3,697.0 531.3,701.3 534.0,704.5 536.8,707.6 543.9,711.9 551.2,715.9 558.9,719.1 566.7,722.2 574.1,725.6 581.7,728.7 586.4,731.1 591.2,733.3 591.9,732.9 592.6,732.4 593.3,732.0 594.1,731.5 594.9,731.1 595.8,730.7 596.7,730.2 597.6,729.8 598.6,729.4 599.7,729.0 601.0,728.7 602.4,728.3 603.8,728.0 605.2,727.7 606.7,727.4 608.2,727.1 608.7,726.2 609.3,725.4 609.9,724.5 610.0,723.3 610.2,722.0 610.5,720.7 610.9,719.4 611.5,718.0 612.2,716.7 611.9,714.3 611.9,711.9 612.0,709.4 613.1,707.8 614.4,706.0 615.8,704.3 617.3,702.6 619.0,700.8 621.4,699.6 624.0,698.3 626.7,697.0 629.5,695.8 632.2,694.3 635.0,692.8 637.9,691.3 641.4,691.4 644.8,691.5 648.3,691.7 651.7,691.9 655.1,692.1 658.5,692.4 661.8,692.4 665.2,692.4 668.6,692.5 671.9,692.6 675.2,692.7 678.6,692.8 682.0,692.4 685.6,692.0 689.1,691.6 692.7,691.2 696.2,690.9 699.9,690.7 703.1,691.0 706.3,691.5 709.5,691.9 713.0,691.8 716.6,691.7 720.1,691.6 723.8,691.3 727.6,691.0 731.3,690.8 735.1,690.6 738.8,690.4 742.5,690.3 746.4,689.9 750.4,689.5 754.3,689.2 755.2,691.7 755.8,694.0 756.3,696.4 758.0,697.7 759.5,699.0 761.0,700.3 762.3,701.6 763.5,702.9 764.6,704.3 763.7,706.7 762.7,709.0 761.6,711.3 766.0,710.5 770.3,709.7 774.6,709.0 776.3,709.6 777.9,710.2 779.5,710.9 780.9,711.6 782.2,712.3 783.4,713.0 784.1,713.9 784.7,714.9 785.2,715.8 785.6,716.7 785.8,717.7 786.0,718.7 785.6,719.8 785.2,720.9 784.6,722.1 783.9,723.2 783.2,724.3 782.3,725.4 780.8,726.7 779.1,728.0 777.4,729.3 775.6,730.5 773.7,731.8 771.7,733.0 770.7,733.8 769.6,734.6 768.4,735.4 767.0,736.2 765.6,737.0 764.1,737.8 761.8,738.8 759.4,739.8 756.9,740.8 754.4,741.7 751.9,742.6 752.9,754.3 749.5,755.4 746.1,756.5 742.7,757.5 739.3,758.5 735.9,759.4 732.5,760.3 729.3,761.1 726.0,761.9 722.7,762.7 719.5,763.4 716.2,764.0 713.0,764.6 709.6,765.3 706.2,765.8 702.9,766.3 700.0,766.8 697.1,767.2 694.2,767.5 690.2,756.6 688.9,756.4 687.2,756.0 685.4,756.2 683.6,756.3 681.9,756.5 680.1,756.6 678.5,756.8 676.8,756.9 675.1,757.0 673.4,757.2 671.7,757.3Z" fill="url(#an3)" filter="url(#b3c)"/>
<circle cx="659.0" cy="475.0" r="281.1" fill="none" stroke="url(#rimb)" stroke-width="4.5" filter="url(#b3d)"/><circle cx="659.0" cy="475.0" r="282.5" fill="none" stroke="url(#rim3)" stroke-width="1.9" filter="url(#b3c)"/>
</g>
<g fill="none" stroke-width="1.1"><path d="M434.3,303.3C435.2,301.3 438.0,295.3 440.0,291.4C442.1,287.6 444.2,283.8 446.4,280.1C448.6,276.5 450.9,272.9 453.3,269.4C455.7,265.9 458.1,262.5 460.7,259.2C463.2,255.9 465.9,252.7 468.6,249.5C471.3,246.4 474.1,243.4 477.0,240.5C479.8,237.5 482.7,234.7 485.7,231.9C488.7,229.2 491.8,226.5 494.9,223.9C498.1,221.4 501.3,218.9 504.5,216.5C507.8,214.1 511.1,211.8 514.4,209.6C517.8,207.4 521.2,205.3 524.7,203.3C528.1,201.3 531.6,199.3 535.2,197.5C538.7,195.7 542.3,193.9 546.0,192.3C549.6,190.6 553.3,189.1 557.0,187.6C560.7,186.1 564.5,184.8 568.3,183.5C572.0,182.2 575.8,181.0 579.7,179.9C583.5,178.8 587.4,177.8 591.3,176.8C595.2,175.9 599.1,175.1 603.0,174.3C606.9,173.6 610.8,173.0 614.8,172.4C618.8,171.8 622.7,171.4 626.7,171.0C630.7,170.6 634.7,170.3 638.6,170.1C642.6,169.9 646.6,169.8 650.6,169.7C654.6,169.7 658.6,169.8 662.6,169.9C666.6,170.1 670.5,170.3 674.5,170.6C678.5,170.9 682.5,171.3 686.4,171.8C690.4,172.3 694.3,172.9 698.3,173.5C702.2,174.2 706.2,174.9 710.1,175.8C714.0,176.6 717.9,177.5 721.8,178.5C725.7,179.4 729.5,180.5 733.4,181.6C737.2,182.8 741.1,184.0 744.9,185.3C748.7,186.6 752.5,187.9 756.2,189.4C760.0,190.8 763.7,192.3 767.4,193.9C771.2,195.5 774.8,197.1 778.5,198.9C782.1,200.6 785.8,202.4 789.4,204.2C792.9,206.1 796.5,208.0 800.0,210.1C803.5,212.1 807.0,214.1 810.5,216.3C813.9,218.4 817.3,220.6 820.7,222.9C824.1,225.1 827.4,227.5 830.7,229.9C834.0,232.3 837.2,234.7 840.4,237.2C843.6,239.7 846.8,242.3 849.9,245.0C853.0,247.6 856.0,250.3 859.0,253.1C862.0,255.8 865.0,258.6 867.9,261.5C870.8,264.4 873.6,267.3 876.4,270.3C879.2,273.2 881.9,276.3 884.6,279.4C887.2,282.4 889.8,285.6 892.4,288.8C894.9,292.0 897.4,295.2 899.8,298.5C902.2,301.8 904.6,305.1 906.9,308.5C909.2,311.9 911.4,315.3 913.6,318.8C915.7,322.3 917.8,325.8 919.9,329.3C921.9,332.9 923.9,336.5 925.7,340.1C927.6,343.7 929.5,347.4 931.2,351.1C933.0,354.7 934.7,358.5 936.3,362.2C937.9,366.0 939.5,369.8 941.0,373.6C942.4,377.4 943.8,381.2 945.2,385.1C946.5,388.9 947.8,392.8 949.0,396.7C950.2,400.6 951.3,404.5 952.3,408.5C953.4,412.4 954.4,416.4 955.3,420.3C956.2,424.3 957.0,428.3 957.7,432.3C958.5,436.2 959.2,440.3 959.8,444.3C960.4,448.3 960.9,452.3 961.3,456.3C961.8,460.3 962.1,464.3 962.4,468.4C962.7,472.4 962.9,476.4 963.0,480.4C963.1,484.4 963.2,488.5 963.2,492.5C963.1,496.5 963.0,500.5 962.8,504.5C962.6,508.5 962.3,512.5 962.0,516.5C961.6,520.4 961.2,524.4 960.6,528.4C960.1,532.3 959.5,536.2 958.8,540.2C958.1,544.1 957.3,548.0 956.4,551.9C955.6,555.7 954.6,559.6 953.6,563.4C952.5,567.3 951.4,571.1 950.2,574.8C948.9,578.6 947.6,582.4 946.2,586.1C944.8,589.8 943.4,593.5 941.8,597.1C940.2,600.8 938.6,604.4 936.8,607.9C935.1,611.5 933.3,615.0 931.4,618.5C929.4,621.9 927.4,625.4 925.4,628.7C923.3,632.1 921.1,635.4 918.8,638.7C916.6,641.9 914.2,645.1 911.8,648.2C909.4,651.4 906.9,654.4 904.3,657.4C901.7,660.4 899.0,663.4 896.2,666.2C893.4,669.1 890.6,671.9 887.6,674.6C884.7,677.3 881.7,679.9 878.6,682.5C875.4,685.0 872.3,687.5 869.0,689.8C865.7,692.2 862.3,694.5 858.9,696.7C855.4,698.9 851.9,701.0 848.3,703.0C844.7,705.0 841.0,706.9 837.2,708.7C833.4,710.5 829.5,712.2 825.6,713.8C821.6,715.4 817.6,716.8 813.5,718.2C809.4,719.6 805.1,720.8 800.9,722.0C796.6,723.1 789.9,724.5 787.8,725.0" stroke="#10e010"/><path d="M510.2,235.2C511.4,233.6 515.0,228.5 517.4,225.5C519.9,222.4 522.4,219.5 525.0,216.7C527.6,214.0 530.2,211.4 532.9,209.0C535.5,206.5 538.3,204.3 541.1,202.2C543.8,200.0 546.7,198.1 549.5,196.3C552.4,194.5 555.3,192.8 558.2,191.3C561.2,189.8 564.2,188.4 567.2,187.2C570.2,185.9 573.3,184.8 576.3,183.9C579.4,182.9 582.5,182.1 585.7,181.3C588.8,180.6 592.0,180.1 595.1,179.6C598.3,179.1 601.5,178.8 604.7,178.5C607.9,178.3 611.2,178.2 614.4,178.2C617.6,178.2 620.9,178.3 624.2,178.5C627.4,178.7 630.7,179.0 633.9,179.4C637.2,179.8 640.5,180.3 643.8,180.9C647.0,181.5 650.3,182.2 653.5,182.9C656.8,183.7 660.1,184.5 663.3,185.5C666.5,186.4 669.8,187.4 673.0,188.5C676.2,189.6 679.4,190.8 682.6,192.0C685.8,193.2 688.9,194.5 692.1,195.9C695.2,197.3 698.3,198.7 701.4,200.2C704.5,201.7 707.6,203.2 710.6,204.8C713.6,206.4 716.6,208.1 719.6,209.8C722.5,211.5 725.4,213.2 728.3,215.0C731.2,216.8 734.0,218.6 736.9,220.5C739.7,222.3 742.4,224.3 745.2,226.2C747.9,228.2 750.6,230.2 753.3,232.2C755.9,234.2 758.5,236.3 761.1,238.5C763.7,240.6 766.3,242.7 768.8,244.9C771.3,247.1 773.8,249.4 776.3,251.6C778.7,253.9 781.1,256.2 783.5,258.6C785.9,260.9 788.2,263.3 790.6,265.7C792.9,268.1 795.2,270.5 797.4,273.0C799.7,275.5 801.9,278.0 804.0,280.6C806.2,283.1 808.4,285.7 810.5,288.3C812.6,290.9 814.7,293.5 816.8,296.2C818.8,298.8 820.8,301.5 822.8,304.3C824.8,307.0 826.8,309.7 828.7,312.5C830.6,315.3 832.5,318.1 834.4,320.9C836.3,323.7 838.1,326.6 839.9,329.4C841.7,332.3 843.5,335.2 845.2,338.1C847.0,341.0 848.7,344.0 850.4,346.9C852.1,349.9 853.7,352.9 855.4,355.9C857.0,358.9 858.6,361.9 860.2,364.9C861.8,368.0 863.3,371.0 864.8,374.1C866.3,377.1 867.8,380.2 869.3,383.3C870.8,386.4 872.2,389.6 873.6,392.7C875.0,395.8 876.4,399.0 877.8,402.1C879.1,405.3 880.5,408.5 881.8,411.7C883.1,414.8 884.3,418.0 885.6,421.2C886.8,424.4 888.0,427.7 889.2,430.9C890.4,434.1 891.5,437.4 892.6,440.6C893.7,443.9 894.8,447.1 895.8,450.4C896.8,453.6 897.8,456.9 898.8,460.2C899.7,463.5 900.6,466.8 901.5,470.0C902.4,473.3 903.2,476.6 904.0,479.9C904.8,483.2 905.5,486.5 906.2,489.9C906.9,493.2 907.5,496.5 908.1,499.8C908.7,503.1 909.3,506.4 909.8,509.8C910.3,513.1 910.7,516.4 911.1,519.7C911.5,523.1 911.8,526.4 912.1,529.7C912.4,533.0 912.6,536.4 912.8,539.7C912.9,543.0 913.1,546.4 913.1,549.7C913.2,553.0 913.2,556.3 913.1,559.6C913.0,563.0 912.9,566.3 912.7,569.6C912.5,572.9 912.2,576.2 911.9,579.5C911.6,582.8 911.2,586.1 910.7,589.4C910.3,592.7 909.7,596.0 909.1,599.3C908.5,602.6 907.9,605.8 907.1,609.1C906.4,612.4 905.6,615.6 904.7,618.9C903.8,622.1 902.8,625.4 901.8,628.6C900.7,631.8 899.6,635.0 898.4,638.1C897.2,641.3 896.0,644.5 894.6,647.6C893.3,650.7 891.9,653.7 890.4,656.8C888.9,659.8 887.3,662.8 885.7,665.7C884.0,668.6 882.3,671.5 880.5,674.3C878.7,677.1 876.8,679.9 874.8,682.5C872.9,685.2 870.8,687.9 868.7,690.4C866.6,692.9 864.4,695.4 862.1,697.8C859.8,700.1 857.4,702.4 855.0,704.6C852.6,706.8 850.0,708.9 847.4,710.9C844.8,712.9 842.1,714.8 839.4,716.6C836.6,718.4 833.7,720.1 830.8,721.6C827.9,723.2 824.8,724.6 821.7,726.0C818.6,727.3 815.5,728.5 812.2,729.5C808.9,730.6 805.6,731.5 802.1,732.3C798.7,733.1 795.2,733.7 791.5,734.2C787.9,734.7 784.2,735.0 780.5,735.2C776.7,735.4 770.8,735.2 768.8,735.2" stroke="#10e8f0"/><path d="M378.4,438.1C377.4,440.2 374.3,446.5 372.5,450.7C370.7,454.9 369.1,459.1 367.6,463.3C366.1,467.4 364.8,471.6 363.7,475.8C362.5,479.9 361.5,484.0 360.7,488.2C359.8,492.3 359.1,496.4 358.6,500.5C358.1,504.6 357.7,508.6 357.4,512.7C357.2,516.7 357.1,520.8 357.1,524.8C357.1,528.8 357.3,532.8 357.6,536.7C357.9,540.7 358.3,544.6 358.9,548.5C359.5,552.4 360.2,556.3 361.0,560.2C361.8,564.0 362.7,567.8 363.8,571.6C364.8,575.4 366.0,579.1 367.3,582.9C368.6,586.6 370.0,590.3 371.5,593.9C373.0,597.6 374.6,601.2 376.3,604.7C378.1,608.3 379.9,611.8 381.8,615.3C383.7,618.8 385.7,622.3 387.8,625.7C390.0,629.1 392.2,632.4 394.5,635.7C396.7,639.1 399.1,642.3 401.6,645.5C404.0,648.8 406.6,651.9 409.2,655.0C411.8,658.2 414.5,661.2 417.3,664.2C420.1,667.2 422.9,670.2 425.9,673.1C428.8,676.0 431.8,678.8 434.8,681.6C437.9,684.4 441.0,687.1 444.1,689.8C447.3,692.5 450.5,695.1 453.8,697.6C457.1,700.2 460.4,702.7 463.8,705.1C467.2,707.5 470.6,709.8 474.1,712.1C477.6,714.4 481.1,716.6 484.7,718.8C488.2,720.9 491.8,723.0 495.4,725.0C499.1,727.0 502.7,728.9 506.4,730.8C510.1,732.6 513.8,734.4 517.6,736.1C521.3,737.8 525.1,739.4 528.9,741.0C532.7,742.6 536.5,744.0 540.4,745.5C544.2,746.9 548.1,748.2 552.0,749.5C555.9,750.8 559.8,752.0 563.7,753.1C567.7,754.2 571.6,755.3 575.6,756.2C579.5,757.2 583.5,758.1 587.5,759.0C591.5,759.8 595.5,760.6 599.5,761.3C603.6,762.0 607.6,762.6 611.6,763.2C615.7,763.7 619.7,764.2 623.8,764.6C627.9,765.0 631.9,765.4 636.0,765.6C640.1,765.9 644.1,766.1 648.2,766.3C652.3,766.4 656.4,766.5 660.4,766.4C664.5,766.4 668.6,766.4 672.7,766.2C676.8,766.1 680.8,765.9 684.9,765.6C689.0,765.3 693.0,765.0 697.1,764.5C701.2,764.1 705.2,763.6 709.3,763.1C713.3,762.5 717.3,761.9 721.4,761.2C725.4,760.5 729.4,759.8 733.4,758.9C737.4,758.1 741.4,757.2 745.3,756.3C749.3,755.3 753.3,754.3 757.2,753.2C761.1,752.1 765.0,750.9 768.9,749.7C772.8,748.5 776.7,747.2 780.6,745.8C784.4,744.5 788.2,743.0 792.0,741.5C795.9,740.1 799.6,738.5 803.4,736.9C807.1,735.3 810.9,733.6 814.6,731.8C818.3,730.1 821.9,728.2 825.6,726.4C829.2,724.5 832.8,722.5 836.4,720.5C839.9,718.5 843.5,716.4 846.9,714.3C850.4,712.2 853.9,709.9 857.3,707.7C860.7,705.4 864.1,703.1 867.4,700.7C870.7,698.3 874.0,695.8 877.2,693.3C880.4,690.8 883.6,688.2 886.7,685.5C889.7,682.9 892.8,680.1 895.7,677.4C898.7,674.6 901.6,671.7 904.4,668.8C907.3,665.9 910.0,662.9 912.7,659.9C915.4,656.9 918.0,653.8 920.5,650.6C923.0,647.4 925.4,644.2 927.8,640.9C930.1,637.6 932.4,634.2 934.5,630.8C936.7,627.4 938.8,623.9 940.7,620.4C942.7,616.9 944.6,613.3 946.4,609.6C948.1,606.0 949.8,602.3 951.4,598.6C953.0,594.8 954.5,591.1 955.8,587.3C957.2,583.4 958.5,579.6 959.6,575.7C960.8,571.8 961.9,567.9 962.8,563.9C963.7,560.0 964.6,556.0 965.3,552.0C966.0,548.0 966.6,544.0 967.1,540.0C967.6,535.9 968.0,531.9 968.3,527.8C968.5,523.7 968.7,519.6 968.7,515.6C968.8,511.5 968.7,507.4 968.5,503.3C968.3,499.2 967.9,495.2 967.5,491.1C967.1,487.0 966.5,483.0 965.8,478.9C965.2,474.9 964.4,470.9 963.4,466.9C962.5,462.9 961.5,458.9 960.3,455.0C959.2,451.1 957.9,447.2 956.5,443.3C955.1,439.5 953.5,435.7 951.9,431.9C950.2,428.1 948.4,424.4 946.5,420.7C944.6,417.1 942.6,413.5 940.5,409.9C938.3,406.4 936.0,402.9 933.6,399.5C931.2,396.0 927.3,391.1 926.1,389.4" stroke="#ff1010"/><path d="M790.2,666.9C791.2,666.1 794.3,663.9 796.3,662.3C798.3,660.8 800.4,659.3 802.4,657.7C804.4,656.1 806.3,654.6 808.3,653.0C810.3,651.4 812.3,649.7 814.2,648.1C816.2,646.5 818.1,644.8 820.0,643.1C821.9,641.4 823.8,639.8 825.7,638.0C827.6,636.3 829.5,634.6 831.4,632.8C833.2,631.1 835.1,629.3 836.9,627.5C838.7,625.8 840.5,624.0 842.3,622.1C844.1,620.3 845.9,618.5 847.7,616.6C849.4,614.8 851.2,612.9 852.9,611.0C854.6,609.1 856.3,607.2 858.0,605.3C859.7,603.4 861.4,601.5 863.0,599.5C864.7,597.5 866.3,595.6 867.9,593.6C869.6,591.6 871.1,589.6 872.7,587.6C874.3,585.6 875.8,583.5 877.4,581.5C878.9,579.4 880.4,577.4 881.9,575.3C883.4,573.2 884.8,571.1 886.2,569.0C887.7,566.9 889.1,564.8 890.5,562.6C891.9,560.5 893.2,558.3 894.6,556.2C895.9,554.0 897.2,551.8 898.5,549.6C899.8,547.4 901.1,545.2 902.3,543.0C903.6,540.8 904.8,538.5 906.0,536.3C907.2,534.0 908.3,531.8 909.5,529.5C910.6,527.2 911.7,524.9 912.8,522.6C913.9,520.3 914.9,518.0 915.9,515.7C917.0,513.3 918.0,511.0 918.9,508.6C919.9,506.3 920.8,503.9 921.7,501.5C922.6,499.2 923.9,495.6 924.4,494.4" stroke="#ff1010"/><path d="M924.0,494.2C925.1,490.2 929.5,477.8 930.8,470.0C932.1,462.2 931.4,455.8 931.8,447.4C932.2,439.0 933.0,424.2 933.2,419.6" stroke="#ff1010" stroke-dasharray="7 4"/><path d="M485.5,692.8C487.2,693.8 492.4,696.8 496.0,698.7C499.5,700.5 503.1,702.3 506.7,704.0C510.3,705.7 513.9,707.4 517.6,708.9C521.2,710.5 524.9,711.9 528.6,713.3C532.3,714.7 536.0,716.0 539.8,717.2C543.5,718.4 547.3,719.6 551.1,720.7C554.9,721.7 558.7,722.7 562.5,723.6C566.3,724.6 570.1,725.4 574.0,726.2C577.8,726.9 581.7,727.6 585.6,728.3C589.5,728.9 593.4,729.4 597.3,729.9C601.2,730.4 605.1,730.8 609.0,731.1C612.9,731.5 616.8,731.7 620.8,731.9C624.7,732.1 628.6,732.3 632.6,732.3C636.5,732.4 640.4,732.4 644.4,732.3C648.3,732.2 652.3,732.1 656.2,731.9C660.2,731.7 664.1,731.4 668.0,731.1C672.0,730.7 675.9,730.3 679.8,729.9C683.8,729.4 687.7,728.9 691.6,728.3C695.5,727.7 699.4,727.1 703.3,726.4C707.2,725.7 711.1,724.9 715.0,724.1C718.9,723.3 722.7,722.4 726.6,721.5C730.4,720.5 734.3,719.5 738.1,718.5C741.9,717.4 745.7,716.3 749.5,715.2C753.2,714.0 757.0,712.8 760.7,711.5C764.5,710.3 768.2,708.9 771.9,707.6C775.6,706.2 779.2,704.8 782.9,703.3C786.5,701.8 790.2,700.3 793.7,698.7C797.3,697.1 800.9,695.5 804.4,693.8C808.0,692.2 813.2,689.5 814.9,688.7" stroke="#ff1010"/><path d="M423.6,634.1C427.2,638.2 438.6,651.9 445.3,658.9C452.0,665.9 457.2,670.3 463.9,676.0C470.6,681.7 482.0,690.2 485.6,693.0" stroke="#ff1010" stroke-dasharray="1.2 2.2"/><path d="M588.1,302.1C587.3,301.4 585.0,299.1 583.4,297.7C581.7,296.2 580.1,294.7 578.4,293.2C576.8,291.7 575.1,290.2 573.4,288.8C571.7,287.3 570.0,285.8 568.2,284.4C566.4,282.9 564.7,281.5 562.9,280.0C561.1,278.6 559.3,277.2 557.4,275.8C555.6,274.4 553.7,273.1 551.8,271.7C549.9,270.4 548.0,269.1 546.1,267.8C544.1,266.5 542.2,265.3 540.2,264.0C538.2,262.8 536.2,261.7 534.2,260.5C532.2,259.4 530.1,258.3 528.0,257.2C526.0,256.2 523.9,255.1 521.8,254.2C519.6,253.2 517.5,252.3 515.4,251.5C513.2,250.6 511.0,249.8 508.8,249.0C506.6,248.3 504.4,247.6 502.1,247.0C499.9,246.4 497.6,245.8 495.3,245.3C493.1,244.8 490.7,244.4 488.4,244.0C486.1,243.7 483.7,243.4 481.4,243.2C479.0,243.0 476.6,242.8 474.2,242.8C471.8,242.7 469.4,242.8 467.0,242.9C464.7,243.0 462.3,243.1 459.9,243.4C457.5,243.7 455.2,244.0 452.9,244.4C450.6,244.8 448.3,245.3 446.0,245.9C443.8,246.5 441.5,247.1 439.4,247.9C437.2,248.6 435.1,249.4 433.0,250.3C431.0,251.2 429.0,252.2 427.1,253.3C425.2,254.4 423.3,255.5 421.5,256.8C419.8,258.0 418.1,259.3 416.5,260.8C414.9,262.2 413.4,263.7 412.0,265.3C410.6,266.9 409.3,268.6 408.1,270.3C407.0,272.1 405.9,274.0 404.9,275.9C404.0,277.8 403.1,279.8 402.4,281.9C401.6,284.0 401.0,286.1 400.5,288.3C399.9,290.4 399.5,292.7 399.2,294.9C398.8,297.2 398.6,299.5 398.5,301.8C398.4,304.1 398.3,306.4 398.4,308.8C398.4,311.1 398.6,313.4 398.8,315.8C399.1,318.1 399.4,320.5 399.9,322.8C400.3,325.2 400.8,327.5 401.4,329.8C401.9,332.1 402.6,334.4 403.3,336.7C404.0,339.0 404.8,341.2 405.6,343.4C406.4,345.7 407.3,347.9 408.3,350.0C409.2,352.2 410.2,354.3 411.2,356.5C412.2,358.6 413.3,360.6 414.4,362.7C415.5,364.8 416.7,366.8 417.9,368.8C419.1,370.8 420.3,372.7 421.6,374.7C422.9,376.6 424.2,378.5 425.6,380.4C426.9,382.3 428.3,384.2 429.7,386.0C431.1,387.9 432.6,389.7 434.0,391.5C435.5,393.2 437.0,395.0 438.5,396.7C440.1,398.5 441.6,400.2 443.2,401.9C444.8,403.6 446.4,405.2 448.0,406.9C449.6,408.5 451.2,410.1 452.9,411.7C454.5,413.3 456.2,414.9 457.8,416.4C459.5,418.0 461.2,419.5 462.9,421.0C464.6,422.5 466.3,424.0 468.0,425.5C469.7,427.0 471.4,428.4 473.2,429.8C474.9,431.3 476.6,432.7 478.3,434.0C480.1,435.4 482.7,437.5 483.5,438.2" stroke="#f4e040"/><path d="M484.0,438.1C485.8,434.1 489.9,423.2 494.8,414.0C499.7,404.8 506.2,393.3 513.4,383.0C520.6,372.7 529.9,361.3 538.2,352.0C546.5,342.7 554.7,335.4 563.0,327.2C571.3,318.9 583.7,306.6 587.8,302.5" stroke="#f4e040" stroke-width="1.5"/></g>
<g transform="translate(816.9,686.5) rotate(-42)"><ellipse rx="19.5" ry="8.5" fill="#8a8414" opacity=".75"/></g>
<path d="M837.6,716.9 L803.4,700.6 Q810,690 819,683 L834.8,676.6 Z" fill="#c8c218" opacity=".78"/>
<g transform="translate(816.9,686.5) rotate(-42)"><ellipse rx="19.5" ry="8.5" fill="none" stroke="#f4ec30" stroke-width="1.2" stroke-dasharray="1.6 6"/></g>
<path d="M837.6,716.9 L822,694 M837.6,716.9 L812,690" stroke="#e8e040" stroke-width=".6" opacity=".6"/>
<circle cx="587.8" cy="302.5" r="3.6" fill="#f8e848"/>
<circle cx="862.8" cy="698.8" r="3.2" fill="#18e8f0"/>
<circle cx="837" cy="716.8" r="2" fill="#ff1010"/>
<g font-family="'Liberation Mono',monospace">
<text x="594" y="306.6" font-size="13.4" fill="#f8f060" letter-spacing="0.21">Missile1</text>
<text x="869" y="703.6" font-size="13.4" fill="#18e8f0" letter-spacing="0.05">ZARYA_25544</text>
<text x="838" y="717.8" font-size="13.4" fill="#ff1818" letter-spacing="0.11">Geoeye1_33331</text>
<text x="258" y="758" font-size="11.6" fill="#18e818" letter-spacing="0.04">Earth Inertial Axes</text>
<text x="258" y="778" font-size="11.6" fill="#18e818" letter-spacing="-0.00">11 Nov 2022 04:00:00.000</text>
<text x="454" y="778" font-size="11.6" fill="#18e818" letter-spacing="0.04">Time Step: 0.10 sec</text>
</g>
<g fill="#fff"><path transform="translate(1012.2,175.9) scale(1.27)" d="M0,0 L3.2,1.1 V11.2 L7.8,8.6 L5.6,7.5 L4.2,4.1 L11.4,6.6 V10.3 L3.2,15 L0,13.2Z"/><text x="1033" y="191.3" font-family="'Liberation Sans',sans-serif" font-size="16.5" letter-spacing="-0.45">bing</text></g>
<g opacity=".9"><path d="M931 761 L960 721 L989 761 Z M947 761 L965.5 735 L975 749 L957 749 L965.5 735" fill="none" stroke="#3c3c3c" stroke-width="4.5" stroke-linejoin="miter"/><text x="994" y="762" font-family="'Liberation Sans',sans-serif" font-size="30" fill="#3a3a3a" letter-spacing="1">AGI</text></g>
</svg>
<svg class="b" style="left:1088px;top:166px;" width="822" height="617" viewBox="1088 166 822 617"><defs>
<clipPath id="mapc"><rect x="1088" y="280" width="822" height="389.3"/></clipPath>
<mask id="hazem" maskUnits="userSpaceOnUse" x="1088" y="270" width="822" height="411"><path d="M1424.6,680.7 1424.6,679.6 1424.6,678.4 1424.6,677.3 1424.6,676.1 1424.6,675.0 1424.6,673.8 1424.6,672.7 1424.6,671.5 1424.6,670.4 1424.6,669.2 1424.6,668.1 1424.6,667.0 1424.6,665.8 1424.6,664.7 1424.6,663.5 1424.6,662.4 1424.6,661.2 1424.6,660.1 1424.6,658.9 1424.6,657.8 1424.6,656.7 1424.6,655.5 1424.6,654.4 1424.6,653.2 1424.6,652.1 1424.6,650.9 1424.6,649.8 1424.6,648.6 1424.6,647.5 1424.6,646.4 1424.6,645.2 1424.6,644.1 1424.6,642.9 1424.6,641.8 1424.6,640.6 1456.6,639.5 1469.4,638.3 1478.8,637.2 1486.6,636.0 1493.2,634.9 1499.0,633.8 1504.2,632.6 1508.9,631.5 1513.2,630.3 1517.2,629.2 1520.8,628.0 1524.2,626.9 1527.4,625.7 1530.4,624.6 1533.3,623.5 1535.9,622.3 1538.5,621.2 1540.9,620.0 1543.1,618.9 1545.3,617.7 1547.4,616.6 1549.4,615.4 1551.3,614.3 1553.1,613.1 1554.9,612.0 1556.6,610.9 1558.2,609.7 1559.8,608.6 1561.3,607.4 1562.8,606.3 1564.2,605.1 1565.5,604.0 1566.9,602.8 1568.2,601.7 1569.4,600.6 1570.6,599.4 1571.8,598.3 1572.9,597.1 1574.0,596.0 1575.1,594.8 1576.2,593.7 1577.2,592.5 1578.2,591.4 1579.2,590.2 1580.1,589.1 1581.1,588.0 1582.0,586.8 1582.9,585.7 1583.7,584.5 1584.6,583.4 1585.4,582.2 1586.2,581.1 1587.0,579.9 1587.8,578.8 1588.6,577.6 1589.4,576.5 1590.1,575.4 1590.8,574.2 1591.5,573.1 1592.2,571.9 1592.9,570.8 1593.6,569.6 1594.3,568.5 1594.9,567.3 1595.6,566.2 1596.2,565.1 1596.8,563.9 1597.4,562.8 1598.0,561.6 1598.6,560.5 1599.2,559.3 1599.8,558.2 1600.4,557.0 1600.9,555.9 1601.5,554.8 1602.0,553.6 1602.6,552.5 1603.1,551.3 1603.6,550.2 1604.1,549.0 1604.7,547.9 1605.2,546.7 1605.7,545.6 1606.2,544.4 1606.7,543.3 1607.2,542.2 1607.6,541.0 1608.1,539.9 1608.6,538.7 1609.1,537.6 1609.5,536.4 1610.0,535.3 1610.4,534.1 1610.9,533.0 1611.3,531.9 1611.8,530.7 1612.2,529.6 1612.6,528.4 1613.1,527.3 1613.5,526.1 1613.9,525.0 1614.3,523.8 1614.8,522.7 1615.2,521.5 1615.6,520.4 1616.0,519.3 1616.4,518.1 1616.8,517.0 1617.2,515.8 1617.6,514.7 1618.0,513.5 1618.4,512.4 1618.8,511.2 1619.2,510.1 1619.6,509.0 1620.0,507.8 1620.4,506.7 1620.7,505.5 1621.1,504.4 1621.5,503.2 1621.9,502.1 1622.3,500.9 1622.6,499.8 1623.0,498.6 1623.4,497.5 1623.8,496.4 1624.1,495.2 1624.5,494.1 1624.9,492.9 1625.2,491.8 1625.6,490.6 1626.0,489.5 1626.3,488.3 1626.7,487.2 1627.1,486.1 1627.4,484.9 1627.8,483.8 1628.2,482.6 1628.5,481.5 1628.9,480.3 1629.2,479.2 1629.6,478.0 1630.0,476.9 1630.3,475.7 1630.7,474.6 1631.0,473.5 1631.4,472.3 1631.8,471.2 1632.1,470.0 1632.5,468.9 1632.9,467.7 1633.2,466.6 1633.6,465.4 1633.9,464.3 1634.3,463.2 1634.7,462.0 1635.0,460.9 1635.4,459.7 1635.8,458.6 1636.1,457.4 1636.5,456.3 1636.9,455.1 1637.2,454.0 1637.6,452.8 1638.0,451.7 1638.4,450.6 1638.7,449.4 1639.1,448.3 1639.5,447.1 1639.9,446.0 1640.2,444.8 1640.6,443.7 1641.0,442.5 1641.4,441.4 1641.8,440.2 1642.2,439.1 1642.6,438.0 1643.0,436.8 1643.4,435.7 1643.8,434.5 1644.2,433.4 1644.6,432.2 1645.0,431.1 1645.4,429.9 1645.8,428.8 1646.2,427.7 1646.6,426.5 1647.0,425.4 1647.4,424.2 1647.9,423.1 1648.3,421.9 1648.7,420.8 1649.2,419.6 1649.6,418.5 1650.0,417.4 1650.5,416.2 1650.9,415.1 1651.4,413.9 1651.9,412.8 1652.3,411.6 1652.8,410.5 1653.3,409.3 1653.7,408.2 1654.2,407.0 1654.7,405.9 1655.2,404.8 1655.7,403.6 1656.2,402.5 1656.7,401.3 1657.2,400.2 1657.7,399.0 1658.3,397.9 1658.8,396.7 1659.3,395.6 1659.9,394.5 1660.4,393.3 1661.0,392.2 1661.6,391.0 1662.2,389.9 1662.7,388.7 1663.3,387.6 1663.9,386.4 1664.6,385.3 1665.2,384.1 1665.8,383.0 1666.5,381.9 1667.1,380.7 1667.8,379.6 1668.5,378.4 1669.1,377.3 1669.8,376.1 1670.6,375.0 1671.3,373.8 1672.0,372.7 1672.8,371.6 1673.5,370.4 1674.3,369.3 1675.1,368.1 1675.9,367.0 1676.8,365.8 1677.6,364.7 1678.5,363.5 1679.4,362.4 1680.3,361.2 1681.2,360.1 1682.2,359.0 1683.2,357.8 1684.2,356.7 1685.2,355.5 1686.2,354.4 1687.3,353.2 1688.4,352.1 1689.6,350.9 1690.8,349.8 1692.0,348.7 1693.2,347.5 1694.5,346.4 1695.8,345.2 1697.2,344.1 1698.6,342.9 1700.1,341.8 1701.6,340.6 1703.2,339.5 1704.8,338.3 1706.5,337.2 1708.2,336.1 1710.1,334.9 1712.0,333.8 1714.0,332.6 1716.1,331.5 1718.2,330.3 1720.5,329.2 1722.9,328.0 1725.4,326.9 1728.1,325.8 1730.9,324.6 1733.9,323.5 1737.1,322.3 1740.5,321.2 1744.2,320.0 1748.2,318.9 1752.4,317.7 1757.1,316.6 1762.3,315.4 1768.2,314.3 1774.8,313.2 1782.5,312.0 1792.0,310.9 1804.8,309.7 1836.8,308.6 1836.8,308.6 1891.0,312.0 1916.4,316.6 1933.0,321.2 1945.5,325.8 1955.3,330.3 1963.5,334.9 1942.4,335.8 1944.6,339.4 1947.7,344.4 1951.3,350.3 1955.2,356.7 1959.0,363.3 1962.3,369.7 1965.2,375.8 1968.0,381.8 1970.7,388.0 1973.3,394.6 1975.8,401.7 1978.3,409.6 1980.8,418.2 1983.1,427.5 1985.4,437.3 1987.7,447.6 1990.0,458.3 1992.3,469.3 1994.5,481.0 1996.7,493.6 1998.9,506.5 2001.1,519.4 2003.5,531.8 2006.0,543.3 2008.7,554.0 2011.4,564.1 2014.2,573.9 2017.2,583.1 2020.6,591.8 2024.3,600.1 2028.3,607.9 2032.2,615.3 2036.4,622.2 2041.3,628.6 2047.2,634.3 2054.3,639.5 2062.4,643.7 2071.1,647.0 2080.8,649.7 2091.8,652.1 2104.6,654.7 2119.6,657.8 2139.0,661.6 2162.8,665.9 2188.4,670.4 2213.1,674.6 2234.2,678.2 2249.0,680.7ZM600.2,680.7 600.2,679.6 600.2,678.4 600.2,677.3 600.2,676.1 600.2,675.0 600.2,673.8 600.2,672.7 600.2,671.5 600.2,670.4 600.2,669.2 600.2,668.1 600.2,667.0 600.2,665.8 600.2,664.7 600.2,663.5 600.2,662.4 600.2,661.2 600.2,660.1 600.2,658.9 600.2,657.8 600.2,656.7 600.2,655.5 600.2,654.4 600.2,653.2 600.2,652.1 600.2,650.9 600.2,649.8 600.2,648.6 600.2,647.5 600.2,646.4 600.2,645.2 600.2,644.1 600.2,642.9 600.2,641.8 600.2,640.6 632.2,639.5 645.0,638.3 654.4,637.2 662.2,636.0 668.8,634.9 674.6,633.8 679.8,632.6 684.5,631.5 688.8,630.3 692.8,629.2 696.4,628.0 699.8,626.9 703.0,625.7 706.0,624.6 708.9,623.5 711.5,622.3 714.1,621.2 716.5,620.0 718.7,618.9 720.9,617.7 723.0,616.6 725.0,615.4 726.9,614.3 728.7,613.1 730.5,612.0 732.2,610.9 733.8,609.7 735.4,608.6 736.9,607.4 738.4,606.3 739.8,605.1 741.1,604.0 742.5,602.8 743.8,601.7 745.0,600.6 746.2,599.4 747.4,598.3 748.5,597.1 749.6,596.0 750.7,594.8 751.8,593.7 752.8,592.5 753.8,591.4 754.8,590.2 755.7,589.1 756.7,588.0 757.6,586.8 758.5,585.7 759.3,584.5 760.2,583.4 761.0,582.2 761.8,581.1 762.6,579.9 763.4,578.8 764.2,577.6 765.0,576.5 765.7,575.4 766.4,574.2 767.1,573.1 767.8,571.9 768.5,570.8 769.2,569.6 769.9,568.5 770.5,567.3 771.2,566.2 771.8,565.1 772.4,563.9 773.0,562.8 773.6,561.6 774.2,560.5 774.8,559.3 775.4,558.2 776.0,557.0 776.5,555.9 777.1,554.8 777.6,553.6 778.2,552.5 778.7,551.3 779.2,550.2 779.7,549.0 780.3,547.9 780.8,546.7 781.3,545.6 781.8,544.4 782.3,543.3 782.8,542.2 783.2,541.0 783.7,539.9 784.2,538.7 784.7,537.6 785.1,536.4 785.6,535.3 786.0,534.1 786.5,533.0 786.9,531.9 787.4,530.7 787.8,529.6 788.2,528.4 788.7,527.3 789.1,526.1 789.5,525.0 789.9,523.8 790.4,522.7 790.8,521.5 791.2,520.4 791.6,519.3 792.0,518.1 792.4,517.0 792.8,515.8 793.2,514.7 793.6,513.5 794.0,512.4 794.4,511.2 794.8,510.1 795.2,509.0 795.6,507.8 796.0,506.7 796.3,505.5 796.7,504.4 797.1,503.2 797.5,502.1 797.9,500.9 798.2,499.8 798.6,498.6 799.0,497.5 799.4,496.4 799.7,495.2 800.1,494.1 800.5,492.9 800.8,491.8 801.2,490.6 801.6,489.5 801.9,488.3 802.3,487.2 802.7,486.1 803.0,484.9 803.4,483.8 803.8,482.6 804.1,481.5 804.5,480.3 804.8,479.2 805.2,478.0 805.6,476.9 805.9,475.7 806.3,474.6 806.6,473.5 807.0,472.3 807.4,471.2 807.7,470.0 808.1,468.9 808.5,467.7 808.8,466.6 809.2,465.4 809.5,464.3 809.9,463.2 810.3,462.0 810.6,460.9 811.0,459.7 811.4,458.6 811.7,457.4 812.1,456.3 812.5,455.1 812.8,454.0 813.2,452.8 813.6,451.7 814.0,450.6 814.3,449.4 814.7,448.3 815.1,447.1 815.5,446.0 815.8,444.8 816.2,443.7 816.6,442.5 817.0,441.4 817.4,440.2 817.8,439.1 818.2,438.0 818.6,436.8 819.0,435.7 819.4,434.5 819.8,433.4 820.2,432.2 820.6,431.1 821.0,429.9 821.4,428.8 821.8,427.7 822.2,426.5 822.6,425.4 823.0,424.2 823.5,423.1 823.9,421.9 824.3,420.8 824.8,419.6 825.2,418.5 825.6,417.4 826.1,416.2 826.5,415.1 827.0,413.9 827.5,412.8 827.9,411.6 828.4,410.5 828.9,409.3 829.3,408.2 829.8,407.0 830.3,405.9 830.8,404.8 831.3,403.6 831.8,402.5 832.3,401.3 832.8,400.2 833.3,399.0 833.9,397.9 834.4,396.7 834.9,395.6 835.5,394.5 836.0,393.3 836.6,392.2 837.2,391.0 837.8,389.9 838.3,388.7 838.9,387.6 839.5,386.4 840.2,385.3 840.8,384.1 841.4,383.0 842.1,381.9 842.7,380.7 843.4,379.6 844.1,378.4 844.7,377.3 845.4,376.1 846.2,375.0 846.9,373.8 847.6,372.7 848.4,371.6 849.1,370.4 849.9,369.3 850.7,368.1 851.5,367.0 852.4,365.8 853.2,364.7 854.1,363.5 855.0,362.4 855.9,361.2 856.8,360.1 857.8,359.0 858.8,357.8 859.8,356.7 860.8,355.5 861.8,354.4 862.9,353.2 864.0,352.1 865.2,350.9 866.4,349.8 867.6,348.7 868.8,347.5 870.1,346.4 871.4,345.2 872.8,344.1 874.2,342.9 875.7,341.8 877.2,340.6 878.8,339.5 880.4,338.3 882.1,337.2 883.8,336.1 885.7,334.9 887.6,333.8 889.6,332.6 891.7,331.5 893.8,330.3 896.1,329.2 898.5,328.0 901.0,326.9 903.7,325.8 906.5,324.6 909.5,323.5 912.7,322.3 916.1,321.2 919.8,320.0 923.8,318.9 928.0,317.7 932.7,316.6 937.9,315.4 943.8,314.3 950.4,313.2 958.1,312.0 967.6,310.9 980.4,309.7 1012.4,308.6 1012.4,308.6 1066.6,312.0 1092.0,316.6 1108.6,321.2 1121.1,325.8 1130.9,330.3 1139.1,334.9 1118.0,335.8 1120.2,339.4 1123.3,344.4 1126.9,350.3 1130.8,356.7 1134.6,363.3 1137.9,369.7 1140.8,375.8 1143.6,381.8 1146.3,388.0 1148.9,394.6 1151.4,401.7 1153.9,409.6 1156.4,418.2 1158.7,427.5 1161.0,437.3 1163.3,447.6 1165.6,458.3 1167.9,469.3 1170.1,481.0 1172.3,493.6 1174.5,506.5 1176.7,519.4 1179.1,531.8 1181.6,543.3 1184.3,554.0 1187.0,564.1 1189.8,573.9 1192.8,583.1 1196.2,591.8 1199.9,600.1 1203.9,607.9 1207.8,615.3 1212.0,622.2 1216.9,628.6 1222.8,634.3 1229.9,639.5 1238.0,643.7 1246.7,647.0 1256.4,649.7 1267.4,652.1 1280.2,654.7 1295.2,657.8 1314.6,661.6 1338.4,665.9 1364.0,670.4 1388.7,674.6 1409.8,678.2 1424.6,680.7Z" fill="#fff" filter="url(#bl1)"/></mask>
<path id="land2" d="M1185.3,324.4 1196.7,321.2 1189.9,317.7 1199.0,313.8 1211.6,311.3 1231.1,313.6 1247.1,315.2 1263.1,315.9 1276.9,313.6 1286.0,315.4 1304.4,316.6 1311.2,319.3 1322.7,318.9 1338.7,319.3 1350.2,318.2 1353.6,310.2 1361.6,315.4 1368.5,318.2 1374.2,315.2 1382.2,315.9 1383.4,320.0 1371.9,320.5 1370.8,325.1 1368.5,328.0 1361.6,330.3 1354.7,334.9 1353.1,339.9 1358.2,344.1 1366.2,344.5 1375.3,347.5 1381.5,348.4 1381.8,353.2 1385.7,357.1 1389.5,355.5 1389.1,349.8 1394.4,344.5 1390.2,340.2 1392.1,335.6 1391.4,331.7 1401.0,331.9 1407.4,334.9 1410.8,335.4 1410.8,339.9 1415.4,341.1 1420.0,337.7 1422.3,336.3 1426.9,341.1 1429.2,345.2 1433.7,348.7 1438.3,350.3 1442.2,354.4 1439.5,356.7 1432.6,359.4 1423.4,359.4 1416.6,361.2 1410.8,365.1 1417.7,362.4 1422.8,362.6 1420.0,365.6 1422.3,368.6 1429.2,369.7 1432.6,367.4 1432.1,369.7 1424.6,372.7 1418.9,375.0 1419.3,372.0 1416.6,371.6 1412.0,373.8 1408.6,375.4 1408.1,378.4 1409.7,379.1 1406.3,380.0 1400.5,381.6 1400.1,384.1 1397.1,386.9 1396.0,389.9 1396.9,393.8 1393.7,395.6 1389.1,398.3 1384.5,402.5 1383.4,405.9 1386.6,413.2 1386.1,416.9 1384.1,416.7 1380.4,410.9 1380.4,407.7 1377.6,405.9 1374.2,406.6 1369.6,405.2 1365.0,405.4 1365.5,407.7 1361.6,407.7 1355.2,406.6 1352.5,408.2 1347.9,410.9 1347.2,415.5 1346.0,423.1 1347.9,427.7 1350.2,431.1 1353.6,432.9 1359.3,431.8 1362.3,429.9 1363.2,426.5 1370.8,425.4 1369.6,429.9 1368.0,432.9 1367.3,438.0 1373.1,438.2 1379.2,440.2 1378.3,448.3 1378.8,450.6 1381.5,454.0 1384.5,454.4 1387.9,452.8 1392.5,454.7 1393.7,456.3 1397.1,450.6 1399.9,449.0 1405.1,447.1 1406.3,449.4 1409.7,447.1 1413.6,449.9 1418.9,450.6 1423.4,450.6 1428.0,450.1 1430.3,452.8 1432.6,455.1 1436.0,458.6 1439.5,460.9 1446.3,461.3 1450.9,463.6 1453.2,465.4 1455.5,470.5 1455.5,474.6 1458.9,476.4 1461.2,476.0 1468.1,480.3 1475.0,481.2 1480.7,483.3 1485.3,485.6 1489.4,487.2 1490.3,491.8 1489.4,496.4 1485.3,500.9 1481.8,504.4 1480.7,510.1 1480.7,514.7 1478.9,519.3 1476.1,525.0 1471.5,527.3 1467.0,528.9 1462.4,530.7 1458.9,534.1 1458.5,539.9 1454.4,545.6 1449.8,550.2 1447.5,553.1 1444.0,554.5 1439.5,553.6 1436.3,552.5 1439.0,557.5 1437.9,561.6 1433.7,563.5 1428.0,563.9 1427.3,568.0 1421.2,568.5 1423.4,571.9 1420.5,576.5 1415.4,579.9 1418.9,583.4 1415.4,588.0 1412.0,591.4 1413.4,594.6 1413.1,596.4 1420.0,600.1 1413.1,601.7 1406.3,598.3 1399.4,594.8 1397.1,589.1 1399.4,583.4 1397.1,581.1 1401.7,575.4 1400.5,570.3 1401.7,565.1 1401.7,559.3 1404.0,554.8 1406.3,549.0 1406.3,543.3 1407.4,536.4 1408.6,528.4 1409.2,520.4 1409.0,516.5 1405.1,513.5 1398.2,510.1 1395.3,506.2 1393.2,502.1 1390.2,496.4 1387.5,490.6 1384.1,488.3 1383.8,484.9 1386.8,482.2 1385.0,479.9 1386.8,474.6 1386.8,472.3 1389.5,471.2 1392.5,465.9 1392.5,459.7 1390.7,457.4 1391.4,455.6 1387.9,454.4 1386.1,457.9 1383.4,457.2 1379.9,455.6 1378.3,454.4 1375.3,451.7 1373.5,449.9 1369.6,444.8 1367.3,444.4 1361.6,442.8 1358.6,441.2 1354.7,437.7 1350.2,438.6 1345.6,437.5 1341.0,435.7 1336.4,433.4 1331.8,431.1 1328.4,428.1 1328.9,424.7 1326.1,420.8 1322.7,416.7 1319.2,413.5 1317.0,410.9 1313.5,408.2 1311.2,403.2 1307.1,402.0 1307.3,405.4 1311.2,410.5 1314.7,415.1 1317.4,419.2 1319.2,421.5 1318.1,422.2 1313.5,417.8 1312.8,414.6 1308.5,412.1 1308.5,409.3 1304.8,405.2 1302.1,400.2 1299.1,397.2 1294.1,395.6 1291.1,391.0 1289.5,388.0 1286.5,384.1 1285.4,382.1 1285.6,377.3 1286.0,372.7 1286.0,368.6 1284.4,363.8 1288.3,362.8 1283.8,360.1 1278.0,357.8 1276.9,354.4 1272.3,350.3 1268.9,347.5 1264.3,342.9 1259.7,340.2 1255.1,339.9 1249.4,337.9 1241.4,337.2 1235.7,335.4 1229.9,337.2 1223.1,338.8 1225.4,334.9 1220.8,337.2 1218.5,340.6 1211.6,344.1 1207.0,346.4 1200.2,348.2 1192.6,349.6 1199.0,346.8 1202.5,346.4 1208.2,342.9 1209.3,340.2 1205.9,340.6 1199.0,340.2 1199.0,337.2 1192.2,335.8 1189.9,333.3 1192.2,331.0 1193.3,329.9 1201.3,329.2 1201.3,326.9 1195.6,326.9 1188.7,326.4ZM1386.8,305.8 1396.0,308.1 1405.1,310.9 1414.3,314.3 1416.6,318.2 1428.0,321.6 1423.4,325.8 1421.2,330.3 1418.9,332.6 1414.3,331.5 1405.1,328.5 1399.4,326.9 1391.4,326.9 1392.5,323.5 1402.8,320.0 1401.7,317.7 1389.1,314.3 1375.3,314.3 1366.2,312.0 1363.9,307.4 1375.3,305.6ZM1299.8,310.9 1306.7,306.7 1322.7,307.0 1329.5,308.6 1338.7,314.3 1329.5,317.0 1318.1,317.3 1304.4,316.1ZM1363.9,299.4 1386.8,299.9 1396.0,296.0 1409.7,290.3 1428.0,285.7 1409.7,284.5 1386.8,284.5 1363.9,288.0 1359.3,291.4 1370.8,294.8ZM1283.8,309.7 1288.3,304.5 1302.1,304.7 1305.5,307.0 1297.5,310.4 1288.3,311.3ZM1302.1,301.7 1318.1,299.9 1327.3,300.6 1327.3,302.9 1313.5,304.0ZM1359.3,299.4 1386.8,301.7 1386.8,303.5 1359.3,303.5ZM1341.0,305.4 1352.5,305.1 1357.0,308.6 1350.2,310.9 1343.3,309.3 1336.4,307.4ZM1434.2,365.4 1441.8,356.7 1442.9,360.1 1448.6,363.5 1449.3,367.0 1446.3,367.7 1441.8,367.0ZM1375.3,424.4 1382.2,421.5 1391.4,423.3 1398.2,427.2 1400.1,428.3 1392.5,429.0 1389.1,425.4 1381.1,423.5ZM1399.6,432.2 1404.0,429.0 1410.8,429.7 1413.4,432.0 1407.4,433.4ZM1515.0,324.6 1519.6,322.5 1528.8,323.0 1536.8,323.0 1539.1,325.8 1535.7,327.4 1526.5,329.4 1518.5,328.3ZM1556.5,392.6 1565.4,394.0 1572.3,391.0 1581.5,390.3 1592.4,389.2 1595.2,389.9 1593.4,396.1 1595.2,397.9 1604.3,400.4 1613.5,405.2 1615.8,403.6 1615.8,399.7 1622.7,399.7 1627.2,402.0 1636.4,403.6 1641.0,402.5 1644.0,403.2 1644.7,406.1 1646.7,410.5 1651.3,419.6 1654.7,426.5 1655.4,431.5 1659.3,438.0 1663.9,441.4 1668.9,445.5 1669.2,448.3 1673.0,450.6 1679.9,449.0 1687.2,447.3 1686.8,450.8 1682.2,459.7 1679.9,464.3 1675.3,469.3 1669.6,474.6 1665.0,478.7 1661.6,483.8 1659.3,488.3 1660.5,492.9 1662.7,498.6 1662.7,507.8 1659.3,513.1 1654.3,515.8 1650.2,521.5 1651.3,528.4 1645.6,532.5 1645.1,539.9 1641.0,543.3 1636.4,549.0 1631.8,552.0 1625.0,552.7 1615.8,554.3 1612.1,552.9 1611.7,547.9 1608.9,542.2 1605.5,536.4 1603.2,526.1 1598.6,515.8 1597.0,511.2 1600.9,502.1 1601.4,497.5 1599.8,494.1 1597.9,488.3 1596.3,483.8 1591.8,480.3 1590.2,476.4 1591.8,472.3 1592.2,466.6 1589.5,464.3 1584.9,464.8 1582.6,462.0 1579.8,460.2 1574.6,460.2 1567.7,462.7 1563.1,463.2 1559.2,462.7 1552.8,464.5 1548.2,461.3 1543.7,458.8 1539.5,454.7 1539.1,452.4 1535.7,449.4 1531.5,446.0 1531.5,442.5 1529.9,440.9 1532.2,438.0 1532.7,431.1 1531.1,426.5 1533.4,420.8 1536.1,416.2 1540.2,411.2 1543.7,409.8 1547.1,407.0 1547.6,402.5 1550.5,398.3 1554.4,396.5ZM1682.9,502.1 1685.6,510.1 1683.4,514.7 1681.1,522.7 1678.1,531.4 1673.5,533.0 1670.1,528.4 1669.2,524.5 1671.4,520.4 1670.8,514.7 1672.6,511.7 1676.5,510.8 1679.5,507.8ZM1557.2,392.2 1555.1,389.9 1549.4,389.9 1548.2,386.0 1549.8,379.6 1548.7,376.1 1551.7,374.5 1559.7,375.2 1565.9,375.2 1567.3,370.4 1564.3,366.3 1559.2,364.7 1559.7,363.3 1566.3,363.1 1566.1,360.8 1570.5,361.0 1573.7,358.3 1578.0,356.9 1580.3,354.4 1581.5,352.5 1586.0,351.9 1590.2,351.2 1589.7,347.5 1588.8,344.1 1594.3,342.5 1594.0,346.4 1592.9,348.7 1595.2,350.9 1598.6,350.0 1602.5,351.2 1607.8,349.8 1612.4,349.3 1615.3,350.0 1618.1,347.5 1618.5,344.1 1621.5,342.5 1625.6,343.4 1623.8,340.6 1623.8,338.8 1629.5,338.3 1634.1,337.9 1638.7,337.2 1635.3,335.8 1627.2,336.7 1622.4,337.4 1618.8,335.4 1619.2,330.3 1627.7,325.8 1625.0,323.9 1620.4,324.4 1618.8,326.9 1612.4,330.3 1609.6,333.8 1609.4,336.1 1613.1,337.7 1608.9,340.2 1607.8,344.1 1606.6,345.9 1602.7,347.5 1599.8,347.7 1599.1,345.9 1597.0,342.2 1595.2,339.5 1594.0,338.3 1588.3,341.6 1583.1,340.2 1581.5,336.1 1581.5,332.6 1586.0,330.3 1592.9,328.0 1597.5,324.6 1599.8,321.2 1604.3,318.2 1610.1,316.1 1615.8,314.3 1622.7,312.7 1629.1,311.8 1635.3,312.5 1641.0,313.6 1638.7,315.0 1645.6,315.7 1652.4,316.1 1662.7,319.3 1663.9,321.9 1658.2,323.2 1650.2,321.9 1645.6,321.9 1649.7,325.8 1650.2,327.4 1655.9,328.5 1657.0,326.9 1662.7,326.7 1661.6,323.5 1667.3,322.3 1670.8,323.0 1671.9,318.2 1675.3,318.9 1676.5,321.6 1679.9,319.6 1691.4,317.3 1694.8,318.4 1702.8,317.0 1708.5,315.0 1716.6,315.7 1723.4,316.6 1725.7,310.9 1730.3,307.0 1737.2,308.6 1738.3,316.6 1741.8,308.6 1753.2,309.3 1755.5,306.3 1769.2,305.1 1769.2,302.2 1787.5,300.1 1799.0,299.4 1808.8,296.7 1815.0,298.3 1826.5,299.0 1829.9,301.7 1821.9,304.5 1828.8,305.8 1842.5,307.4 1854.0,305.8 1860.8,308.6 1865.4,311.3 1870.0,312.5 1875.7,310.9 1888.3,310.9 1890.6,308.6 1904.3,309.0 1913.5,310.9 1918.1,312.2 1934.1,312.7 1937.5,315.2 1947.8,315.4 1959.3,315.4 1961.6,314.3 1973.0,314.8 1982.2,316.8 1991.4,321.2 2000.5,322.8 2005.8,323.5 1998.2,326.2 1986.8,324.6 1984.5,322.8 1982.2,325.8 1977.6,326.4 1976.5,331.5 1979.9,331.9 1968.5,333.3 1960.4,337.2 1950.1,337.2 1943.3,338.3 1941.0,341.8 1944.0,345.9 1941.0,348.7 1936.4,352.8 1933.0,353.7 1928.8,357.8 1927.2,353.2 1926.3,346.4 1928.4,342.9 1934.1,340.6 1939.8,336.5 1944.4,333.8 1936.4,333.1 1929.5,333.8 1925.0,338.3 1918.1,339.5 1911.2,338.3 1897.5,338.8 1891.7,342.9 1886.0,347.5 1879.8,349.3 1884.9,350.9 1890.6,350.9 1893.6,352.8 1892.9,356.2 1891.7,360.1 1890.6,364.0 1887.2,368.1 1881.4,372.7 1874.6,376.6 1870.0,377.3 1867.7,376.8 1867.0,379.6 1862.0,383.5 1866.1,387.6 1866.6,392.2 1865.4,394.0 1859.7,395.8 1859.2,391.0 1860.4,388.7 1856.2,387.6 1857.4,384.1 1854.6,383.2 1847.8,385.5 1848.9,381.2 1842.5,384.8 1839.8,385.7 1842.1,388.5 1846.6,388.0 1850.5,389.2 1847.1,391.0 1843.7,394.0 1845.5,396.3 1848.9,401.8 1848.9,404.1 1849.4,406.4 1848.2,409.8 1844.8,413.9 1842.5,416.9 1839.1,420.1 1835.6,422.4 1831.1,423.5 1826.5,424.9 1822.6,425.8 1821.9,428.1 1818.5,425.1 1814.3,427.0 1812.3,431.1 1815.0,436.1 1819.4,439.6 1820.5,445.3 1819.6,448.3 1815.0,450.8 1811.6,454.0 1810.0,454.7 1810.5,451.7 1807.0,450.3 1804.7,447.1 1801.1,443.9 1799.0,443.9 1797.4,449.4 1797.4,453.3 1800.1,458.1 1803.6,460.4 1806.8,464.3 1807.0,468.4 1808.6,471.4 1806.8,471.6 1802.0,468.0 1799.9,462.0 1799.5,459.7 1795.1,455.1 1796.0,450.6 1795.8,446.0 1794.4,442.5 1793.7,436.8 1791.7,435.7 1788.5,438.4 1785.9,437.5 1786.4,433.4 1784.1,429.3 1781.4,427.0 1780.2,423.5 1777.2,423.1 1773.8,424.7 1769.2,425.8 1768.1,428.8 1764.7,430.2 1758.5,436.1 1753.9,439.1 1753.7,443.7 1752.7,448.3 1752.7,451.0 1750.9,453.3 1749.1,454.2 1747.5,456.1 1745.2,454.0 1744.0,449.4 1741.8,444.8 1740.6,440.7 1738.3,436.8 1737.2,432.2 1736.7,427.7 1732.6,427.0 1728.0,423.5 1730.3,422.4 1726.9,420.8 1724.1,418.0 1722.3,416.4 1716.6,416.7 1710.8,417.1 1705.1,416.4 1701.2,415.7 1700.1,412.8 1694.8,413.7 1691.4,412.8 1687.9,410.7 1685.6,407.5 1683.4,405.4 1681.1,405.9 1679.9,407.0 1681.1,409.8 1683.4,412.1 1685.0,413.9 1686.1,417.4 1687.2,414.8 1688.2,417.4 1687.9,419.0 1693.7,419.2 1698.7,414.6 1699.4,418.5 1704.0,420.6 1706.9,423.1 1704.0,427.7 1702.1,431.1 1698.9,433.6 1696.0,435.7 1689.1,438.9 1682.2,442.5 1673.0,445.3 1669.6,445.5 1668.0,440.7 1667.3,436.8 1663.9,431.1 1659.8,425.8 1658.2,420.8 1655.2,416.9 1651.3,410.9 1649.9,407.0 1648.5,410.9 1644.7,406.1 1644.0,403.2 1648.5,402.9 1650.2,399.5 1652.0,395.6 1652.4,392.2 1652.9,390.3 1649.0,390.6 1644.4,391.9 1639.8,391.5 1636.4,391.7 1633.0,390.3 1631.8,386.4 1630.2,384.6 1630.7,382.5 1636.4,381.9 1636.9,380.3 1642.1,380.3 1646.7,378.4 1650.6,378.4 1653.6,380.0 1658.2,380.7 1665.0,379.6 1665.0,377.0 1661.1,375.0 1657.0,372.7 1654.7,370.9 1657.7,368.8 1660.0,366.5 1655.9,367.0 1650.6,368.6 1653.6,370.9 1651.3,371.3 1646.7,372.7 1644.4,370.4 1646.7,369.3 1642.1,367.9 1638.7,369.7 1638.0,371.1 1635.5,374.3 1633.4,376.8 1634.6,379.6 1636.4,380.3 1631.8,381.6 1630.2,381.4 1625.0,381.2 1622.7,382.3 1622.2,384.6 1625.0,387.1 1622.7,391.0 1619.7,390.3 1618.1,386.9 1614.7,382.5 1614.7,378.9 1610.1,376.1 1604.8,373.2 1602.1,371.1 1601.4,369.9 1598.2,370.9 1598.6,373.4 1601.4,375.0 1606.4,378.6 1612.4,382.5 1608.9,381.9 1607.8,384.1 1609.2,385.3 1606.6,387.6 1606.2,384.1 1603.2,381.6 1598.6,379.6 1594.0,376.4 1592.9,373.8 1590.2,372.9 1587.2,374.3 1584.2,375.9 1580.3,375.2 1577.1,377.3 1577.3,378.9 1571.8,381.2 1569.3,384.1 1570.0,386.0 1568.4,388.0 1565.4,390.3 1559.7,390.6ZM732.8,392.2 730.7,389.9 725.0,389.9 723.8,386.0 725.4,379.6 724.3,376.1 727.3,374.5 735.3,375.2 741.5,375.2 742.9,370.4 739.9,366.3 734.8,364.7 735.3,363.3 741.9,363.1 741.7,360.8 746.1,361.0 749.3,358.3 753.6,356.9 755.9,354.4 757.0,352.5 761.6,351.9 765.8,351.2 765.3,347.5 764.4,344.1 769.9,342.5 769.6,346.4 768.5,348.7 770.8,350.9 774.2,350.0 778.1,351.2 783.4,349.8 788.0,349.3 790.9,350.0 793.7,347.5 794.1,344.1 797.1,342.5 801.2,343.4 799.4,340.6 799.4,338.8 805.1,338.3 809.7,337.9 814.3,337.2 810.9,335.8 802.9,336.7 798.0,337.4 794.4,335.4 794.8,330.3 803.3,325.8 800.6,323.9 796.0,324.4 794.4,326.9 788.0,330.3 785.2,333.8 785.0,336.1 788.7,337.7 784.5,340.2 783.4,344.1 782.2,345.9 778.3,347.5 775.4,347.7 774.7,345.9 772.6,342.2 770.8,339.5 769.6,338.3 763.9,341.6 758.7,340.2 757.0,336.1 757.0,332.6 761.6,330.3 768.5,328.0 773.1,324.6 775.4,321.2 779.9,318.2 785.7,316.1 791.4,314.3 798.3,312.7 804.7,311.8 810.9,312.5 816.6,313.6 814.3,315.0 821.2,315.7 828.0,316.1 838.3,319.3 839.5,321.9 833.8,323.2 825.8,321.9 821.2,321.9 825.3,325.8 825.8,327.4 831.5,328.5 832.6,326.9 838.3,326.7 837.2,323.5 842.9,322.3 846.4,323.0 847.5,318.2 850.9,318.9 852.1,321.6 855.5,319.6 867.0,317.3 870.4,318.4 878.4,317.0 884.1,315.0 892.2,315.7 899.0,316.6 901.3,310.9 905.9,307.0 912.8,308.6 913.9,316.6 917.4,308.6 928.8,309.3 931.1,306.3 944.8,305.1 944.8,302.2 963.1,300.1 974.6,299.4 984.4,296.7 990.6,298.3 1002.1,299.0 1005.5,301.7 997.5,304.5 1004.4,305.8 1018.1,307.4 1029.6,305.8 1036.4,308.6 1041.0,311.3 1045.6,312.5 1051.3,310.9 1063.9,310.9 1066.2,308.6 1079.9,309.0 1089.1,310.9 1093.7,312.2 1109.7,312.7 1113.1,315.2 1123.5,315.4 1134.9,315.4 1137.2,314.3 1148.6,314.8 1157.8,316.8 1167.0,321.2 1176.1,322.8 1181.4,323.5 1173.8,326.2 1162.4,324.6 1160.1,322.8 1157.8,325.8 1153.2,326.4 1152.1,331.5 1155.5,331.9 1144.1,333.3 1136.0,337.2 1125.7,337.2 1118.9,338.3 1116.6,341.8 1119.6,345.9 1116.6,348.7 1112.0,352.8 1108.6,353.7 1104.4,357.8 1102.8,353.2 1101.9,346.4 1104.0,342.9 1109.7,340.6 1115.4,336.5 1120.0,333.8 1112.0,333.1 1105.1,333.8 1100.5,338.3 1093.7,339.5 1086.8,338.3 1073.1,338.8 1067.3,342.9 1061.6,347.5 1055.4,349.3 1060.5,350.9 1066.2,350.9 1069.2,352.8 1068.5,356.2 1067.3,360.1 1066.2,364.0 1062.8,368.1 1057.0,372.7 1050.2,376.6 1045.6,377.3 1043.3,376.8 1042.6,379.6 1037.6,383.5 1041.7,387.6 1042.2,392.2 1041.0,394.0 1035.3,395.8 1034.8,391.0 1036.0,388.7 1031.8,387.6 1033.0,384.1 1030.2,383.2 1023.4,385.5 1024.5,381.2 1018.1,384.8 1015.4,385.7 1017.7,388.5 1022.2,388.0 1026.1,389.2 1022.7,391.0 1019.3,394.0 1021.1,396.3 1024.5,401.8 1024.5,404.1 1025.0,406.4 1023.8,409.8 1020.4,413.9 1018.1,416.9 1014.7,420.1 1011.2,422.4 1006.7,423.5 1002.1,424.9 998.2,425.8 997.5,428.1 994.1,425.1 989.9,427.0 987.9,431.1 990.6,436.1 995.0,439.6 996.1,445.3 995.2,448.3 990.6,450.8 987.2,454.0 985.6,454.7 986.0,451.7 982.6,450.3 980.3,447.1 976.7,443.9 974.6,443.9 973.0,449.4 973.0,453.3 975.7,458.1 979.2,460.4 982.4,464.3 982.6,468.4 984.2,471.4 982.4,471.6 977.6,468.0 975.5,462.0 975.1,459.7 970.7,455.1 971.6,450.6 971.4,446.0 970.0,442.5 969.3,436.8 967.3,435.7 964.1,438.4 961.5,437.5 962.0,433.4 959.7,429.3 957.0,427.0 955.8,423.5 952.8,423.1 949.4,424.7 944.8,425.8 943.7,428.8 940.2,430.2 934.1,436.1 929.5,439.1 929.3,443.7 928.3,448.3 928.3,451.0 926.5,453.3 924.7,454.2 923.1,456.1 920.8,454.0 919.6,449.4 917.4,444.8 916.2,440.7 913.9,436.8 912.8,432.2 912.3,427.7 908.2,427.0 903.6,423.5 905.9,422.4 902.5,420.8 899.7,418.0 897.9,416.4 892.2,416.7 886.4,417.1 880.7,416.4 876.8,415.7 875.7,412.8 870.4,413.7 867.0,412.8 863.5,410.7 861.2,407.5 859.0,405.4 856.7,405.9 855.5,407.0 856.7,409.8 859.0,412.1 860.6,413.9 861.7,417.4 862.8,414.8 863.8,417.4 863.5,419.0 869.3,419.2 874.3,414.6 875.0,418.5 879.6,420.6 882.5,423.1 879.6,427.7 877.7,431.1 874.5,433.6 871.5,435.7 864.7,438.9 857.8,442.5 848.6,445.3 845.2,445.5 843.6,440.7 842.9,436.8 839.5,431.1 835.4,425.8 833.8,420.8 830.8,416.9 826.9,410.9 825.5,407.0 824.1,410.9 820.3,406.1 819.6,403.2 824.1,402.9 825.8,399.5 827.6,395.6 828.0,392.2 828.5,390.3 824.6,390.6 820.0,391.9 815.4,391.5 812.0,391.7 808.6,390.3 807.4,386.4 805.8,384.6 806.3,382.5 812.0,381.9 812.5,380.3 817.7,380.3 822.3,378.4 826.2,378.4 829.2,380.0 833.8,380.7 840.6,379.6 840.6,377.0 836.7,375.0 832.6,372.7 830.3,370.9 833.3,368.8 835.6,366.5 831.5,367.0 826.2,368.6 829.2,370.9 826.9,371.3 822.3,372.7 820.0,370.4 822.3,369.3 817.7,367.9 814.3,369.7 813.6,371.1 811.1,374.3 809.0,376.8 810.2,379.6 812.0,380.3 807.4,381.6 805.8,381.4 800.6,381.2 798.3,382.3 797.8,384.6 800.6,387.1 798.3,391.0 795.3,390.3 793.7,386.9 790.3,382.5 790.3,378.9 785.7,376.1 780.4,373.2 777.7,371.1 777.0,369.9 773.8,370.9 774.2,373.4 777.0,375.0 782.0,378.6 788.0,382.5 784.5,381.9 783.4,384.1 784.8,385.3 782.2,387.6 781.8,384.1 778.8,381.6 774.2,379.6 769.6,376.4 768.5,373.8 765.8,372.9 762.8,374.3 759.8,375.9 755.9,375.2 752.7,377.3 752.9,378.9 747.4,381.2 744.9,384.1 745.6,386.0 744.0,388.0 741.0,390.3 735.3,390.6ZM1557.4,359.9 1562.0,359.4 1573.0,357.4 1573.9,353.9 1570.5,352.5 1569.5,350.3 1566.3,348.0 1565.0,345.9 1565.9,342.9 1562.0,342.5 1562.7,340.4 1558.5,340.4 1555.8,344.1 1557.4,347.5 1559.0,349.1 1562.7,349.1 1563.1,352.1 1559.7,352.5 1560.2,354.8 1558.1,356.0 1562.4,356.9 1559.7,357.6ZM1547.1,356.2 1555.6,355.1 1556.3,352.1 1556.9,349.3 1553.3,348.0 1550.5,349.8 1547.1,350.5 1548.2,353.2ZM1868.2,402.9 1871.1,402.5 1872.3,397.9 1878.0,396.7 1880.3,397.9 1883.7,395.1 1888.3,394.5 1892.4,392.8 1892.9,386.9 1895.2,384.1 1893.6,379.8 1890.6,381.4 1889.9,386.4 1887.2,389.2 1883.7,389.9 1881.4,392.6 1874.6,393.3 1870.0,396.1 1867.0,398.6ZM1890.6,379.3 1894.0,376.8 1898.2,378.4 1903.2,375.4 1900.4,373.8 1894.7,370.6 1894.0,375.0 1890.6,376.8ZM1895.2,369.3 1898.6,367.7 1897.5,362.4 1900.9,361.9 1898.2,356.7 1897.5,350.5 1895.2,352.1 1895.2,360.1ZM1845.3,422.2 1847.1,424.2 1849.2,417.4 1847.1,417.1ZM1818.9,430.6 1821.9,432.7 1824.2,429.5 1821.9,428.6ZM1752.7,452.4 1755.9,455.1 1757.3,458.6 1754.8,461.1 1752.7,458.6ZM1788.2,461.8 1793.3,462.7 1800.1,468.9 1807.0,474.6 1809.3,479.2 1812.7,481.9 1812.3,487.9 1809.3,487.9 1803.6,483.8 1799.7,476.9 1796.0,470.7 1792.1,467.0ZM1810.9,490.2 1813.9,488.3 1818.5,489.7 1824.2,489.5 1828.3,490.6 1832.2,492.5 1832.0,494.5 1824.2,493.6 1817.3,492.5 1811.6,490.6ZM1819.6,470.5 1821.9,470.7 1824.9,468.9 1828.8,467.3 1832.2,463.8 1835.6,459.0 1838.4,458.6 1842.5,462.7 1840.2,464.8 1839.8,467.7 1840.2,472.3 1839.1,474.6 1836.8,478.0 1835.6,483.3 1832.2,483.8 1828.8,482.2 1825.3,482.2 1821.9,478.0 1819.6,473.9ZM1844.3,472.8 1847.1,471.6 1851.7,472.5 1856.2,470.9 1855.1,473.7 1847.1,473.7 1845.5,476.7 1848.2,476.7 1852.4,476.7 1849.4,478.7 1848.2,480.3 1850.5,482.6 1851.7,484.9 1849.4,485.6 1848.2,483.8 1847.1,480.8 1845.7,481.5 1845.7,487.2 1843.7,487.2 1843.7,482.6 1842.1,480.8ZM1870.0,476.4 1876.9,476.4 1879.2,482.2 1884.9,478.3 1892.9,480.6 1900.9,483.8 1904.3,487.2 1908.5,489.0 1906.6,490.6 1908.9,493.4 1914.6,498.2 1908.9,498.0 1904.3,493.6 1899.8,492.5 1897.5,495.7 1892.9,495.4 1888.3,492.9 1886.0,493.6 1887.2,489.5 1883.7,486.1 1880.3,484.7 1874.6,483.8 1873.4,481.0 1876.9,479.9 1872.3,479.6ZM1045.6,476.4 1052.5,476.4 1054.8,482.2 1060.5,478.3 1068.5,480.6 1076.5,483.8 1079.9,487.2 1084.1,489.0 1082.2,490.6 1084.5,493.4 1090.2,498.2 1084.5,498.0 1079.9,493.6 1075.4,492.5 1073.1,495.7 1068.5,495.4 1063.9,492.9 1061.6,493.6 1062.8,489.5 1059.3,486.1 1055.9,484.7 1050.2,483.8 1049.0,481.0 1052.5,479.9 1047.9,479.6ZM1845.9,432.2 1849.4,432.2 1850.1,436.8 1848.2,440.2 1854.0,444.8 1854.0,446.0 1849.4,443.0 1846.6,443.0 1844.8,440.2 1845.5,437.5ZM1849.4,458.6 1852.8,454.9 1857.4,452.2 1859.7,457.4 1858.5,460.2 1856.9,461.5 1854.0,459.7ZM1829.2,525.0 1831.1,524.5 1836.8,521.5 1842.5,520.4 1848.2,518.1 1850.5,513.5 1852.8,514.2 1856.2,510.1 1860.4,506.7 1864.3,508.5 1866.6,509.0 1868.8,503.7 1873.4,500.9 1880.3,502.1 1883.7,502.5 1881.4,505.5 1880.3,509.0 1884.9,511.2 1889.5,514.7 1892.9,512.4 1894.5,505.5 1896.3,499.3 1898.6,505.5 1902.7,509.0 1904.3,515.8 1910.1,520.9 1914.6,526.1 1920.4,533.0 1921.5,539.9 1919.9,546.7 1916.5,552.0 1914.0,558.2 1913.0,560.5 1907.8,561.6 1905.0,564.1 1900.9,562.3 1898.6,563.5 1892.4,561.6 1889.5,557.0 1886.7,554.1 1885.6,555.9 1883.7,553.6 1885.6,550.2 1881.4,554.3 1879.8,553.8 1876.9,549.7 1870.0,546.7 1864.3,547.4 1858.5,548.6 1854.0,550.2 1852.8,552.2 1844.8,552.2 1840.2,554.8 1835.6,554.3 1833.3,553.1 1835.0,547.9 1833.3,544.4 1831.5,538.7 1829.5,534.1 1830.6,529.6ZM1004.8,525.0 1006.7,524.5 1012.4,521.5 1018.1,520.4 1023.8,518.1 1026.1,513.5 1028.4,514.2 1031.8,510.1 1036.0,506.7 1039.9,508.5 1042.2,509.0 1044.4,503.7 1049.0,500.9 1055.9,502.1 1059.3,502.5 1057.0,505.5 1055.9,509.0 1060.5,511.2 1065.1,514.7 1068.5,512.4 1070.1,505.5 1071.9,499.3 1074.2,505.5 1078.3,509.0 1079.9,515.8 1085.7,520.9 1090.2,526.1 1096.0,533.0 1097.1,539.9 1095.5,546.7 1092.1,552.0 1089.6,558.2 1088.6,560.5 1083.4,561.6 1080.6,564.1 1076.5,562.3 1074.2,563.5 1068.0,561.6 1065.1,557.0 1062.3,554.1 1061.2,555.9 1059.3,553.6 1061.2,550.2 1057.0,554.3 1055.4,553.8 1052.5,549.7 1045.6,546.7 1039.9,547.4 1034.1,548.6 1029.6,550.2 1028.4,552.2 1020.4,552.2 1015.8,554.8 1011.2,554.3 1009.0,553.1 1010.6,547.9 1009.0,544.4 1007.1,538.7 1005.1,534.1 1006.2,529.6ZM1901.4,567.8 1909.4,568.0 1909.4,571.2 1906.6,574.2 1904.3,574.2 1902.5,571.2ZM1141.1,553.4 1144.7,555.4 1147.5,558.2 1148.6,560.7 1154.4,560.9 1151.4,564.4 1150.7,566.2 1147.0,569.9 1145.7,569.2 1146.3,566.2 1143.6,564.6 1145.4,561.6 1145.2,558.2ZM1141.1,567.3 1144.5,570.1 1141.3,574.2 1137.9,576.0 1136.7,579.7 1132.6,581.3 1126.9,579.9 1130.3,575.8 1136.0,573.1 1139.5,568.5ZM1595.2,292.5 1606.6,291.4 1620.4,290.7 1631.8,291.4 1620.4,295.3 1611.2,298.3 1602.1,297.6ZM1687.9,310.9 1696.0,306.7 1702.8,302.9 1721.1,298.3 1728.0,299.4 1712.0,302.9 1700.5,309.7 1696.0,312.7ZM1727.6,586.8 1731.4,586.8 1731.0,588.4 1728.0,588.2Z"/>
<clipPath id="lc2"><use href="#land2"/></clipPath>
<filter id="tx2" x="0" y="0" width="100%" height="100%"><feTurbulence type="fractalNoise" baseFrequency="0.07" numOctaves="3" seed="4"/><feColorMatrix type="matrix" values="0 0 0 0 0  0 0 0 0 0  0 0 0 0 0  1.5 0 0 0 -0.6"/></filter>
<filter id="bl2" x="-5%" y="-5%" width="110%" height="110%"><feGaussianBlur stdDeviation="2.2"/></filter>
<filter id="bl3" x="-5%" y="-5%" width="110%" height="110%"><feGaussianBlur stdDeviation="4"/></filter>
<filter id="bl1" x="-5%" y="-5%" width="110%" height="110%"><feGaussianBlur stdDeviation="1.1"/></filter>
<radialGradient id="ss2"><stop offset="0" stop-color="#27425a" stop-opacity=".85"/><stop offset=".45" stop-color="#203850" stop-opacity=".5"/><stop offset="1" stop-color="#1a3046" stop-opacity="0"/></radialGradient>
<linearGradient id="oc2" x1="0" y1="0" x2="0" y2="1"><stop offset="0" stop-color="#08121b"/><stop offset=".5" stop-color="#0b1723"/><stop offset="1" stop-color="#0b161f"/></linearGradient>
</defs>
<rect x="1088" y="166" width="822" height="617" fill="#000"/>
<rect x="1088" y="669.3" width="822" height="10.7" fill="#181818"/>
<g clip-path="url(#mapc)">
<rect x="1088" y="280" width="822" height="390" fill="url(#oc2)"/>
<g mask="url(#hazem)"><rect x="1088" y="280" width="822" height="390" fill="#101f2c"/><circle cx="1836.8" cy="514.7" r="340" fill="url(#ss2)"/><circle cx="1012.4" cy="514.7" r="340" fill="url(#ss2)"/></g>
<use href="#land2" fill="#52543c"/>
<g mask="url(#hazem)"><use href="#land2" fill="#8c8d74"/></g>
<g clip-path="url(#lc2)"><g filter="url(#bl3)"><path d="M1531.1,410.5 1547.1,401.3 1570.0,396.7 1592.9,399.0 1627.2,401.3 1647.9,405.9 1654.7,424.2 1661.6,440.2 1650.2,444.8 1615.8,444.8 1570.0,440.2 1531.1,435.7Z" fill="#b89868" opacity=".22"/><path d="M1647.9,405.9 1654.7,392.2 1673.0,387.6 1696.0,383.0 1689.1,369.3 1707.4,364.7 1741.8,369.3 1776.1,367.0 1810.5,373.8 1821.9,383.0 1799.0,389.9 1753.2,396.7 1730.3,410.5 1721.1,417.4 1702.8,424.2 1696.0,435.7 1673.0,447.1 1666.2,440.2 1657.0,424.2Z" fill="#b89868" opacity=".22"/><path d="M1666.2,447.1 1687.9,447.1 1682.2,463.2 1670.8,472.3 1663.9,465.4 1661.6,454.0Z" fill="#b89868" opacity=".22"/><path d="M1597.5,511.2 1615.8,515.8 1629.5,525.0 1629.5,543.3 1615.8,550.2 1608.9,545.6 1602.1,527.3Z" fill="#b89868" opacity=".22"/><path d="M1833.3,525.0 1856.2,515.8 1879.2,515.8 1895.2,525.0 1899.8,543.3 1879.2,547.9 1856.2,545.6 1835.6,543.3Z" fill="#b89868" opacity=".22"/><path d="M1299.8,392.2 1318.1,387.6 1334.1,401.3 1336.4,417.4 1327.3,421.9 1313.5,410.5 1304.4,403.6Z" fill="#b89868" opacity=".22"/><path d="M1407.4,509.0 1414.3,515.8 1416.6,538.7 1412.0,554.8 1406.3,550.2 1407.4,525.0Z" fill="#b89868" opacity=".22"/><path d="M1407.4,561.6 1421.2,566.2 1418.9,584.5 1412.0,593.7 1402.8,589.1 1405.1,570.8Z" fill="#b89868" opacity=".22"/><path d="M1542.5,454.0 1570.0,454.0 1604.3,458.6 1638.7,463.2 1647.9,470.0 1643.3,486.1 1657.0,495.2 1657.0,506.7 1634.1,506.7 1602.1,502.1 1597.5,486.1 1590.6,476.9 1590.6,465.4 1558.5,464.3 1542.5,460.9Z" fill="#1c3410" opacity=".3"/><path d="M1391.4,456.3 1432.6,454.0 1455.5,467.7 1467.0,481.5 1455.5,509.0 1437.2,520.4 1421.2,515.8 1398.2,502.1 1386.8,481.5Z" fill="#1c3410" opacity=".3"/><path d="M1780.7,412.8 1810.5,419.6 1821.9,428.8 1817.3,451.7 1844.8,463.2 1913.5,481.5 1913.5,499.8 1840.2,497.5 1787.5,488.3 1787.5,460.9 1794.4,435.7Z" fill="#1c3410" opacity=".3"/><path d="M956.3,412.8 986.0,419.6 997.5,428.8 992.9,451.7 1020.4,463.2 1089.1,481.5 1089.1,499.8 1015.8,497.5 963.1,488.3 963.1,460.9 970.0,435.7Z" fill="#1c3410" opacity=".3"/><path d="M1352.5,364.7 1386.8,373.8 1398.2,392.2 1375.3,405.9 1352.5,405.9 1347.9,383.0Z" fill="#1c3410" opacity=".3"/><path d="M1192.2,318.9 1341.0,321.2 1432.6,341.8 1444.0,360.1 1386.8,369.3 1341.0,360.1 1283.8,360.1 1226.5,337.2Z" fill="#1c3410" opacity=".3"/><path d="M1638.7,318.9 1707.4,318.9 1799.0,309.7 1890.6,314.3 1959.3,323.5 1936.4,341.8 1890.6,360.1 1844.8,360.1 1776.1,355.5 1707.4,348.7 1661.6,348.7 1638.7,341.8Z" fill="#1c3410" opacity=".3"/><path d="M814.3,318.9 883.0,318.9 974.6,309.7 1066.2,314.3 1134.9,323.5 1112.0,341.8 1066.2,360.1 1020.4,360.1 951.7,355.5 883.0,348.7 837.2,348.7 814.3,341.8Z" fill="#1c3410" opacity=".3"/><path d="M1547.1,376.1 1570.0,373.8 1604.3,373.8 1638.7,371.6 1661.6,360.1 1661.6,341.8 1638.7,337.2 1592.9,341.8 1581.5,355.5 1558.5,364.7Z" fill="#1c3410" opacity=".3"/><path d="M1734.9,424.2 1771.5,412.8 1799.0,410.5 1821.9,401.3 1849.4,387.6 1849.4,410.5 1821.9,428.8 1799.0,440.2 1771.5,428.8 1753.2,451.7 1744.0,451.7Z" fill="#1c3410" opacity=".3"/><path d="M1634.1,509.0 1652.4,509.0 1661.6,499.8 1661.6,511.2 1650.2,529.6 1643.3,543.3 1634.1,550.2 1625.0,550.2 1631.8,534.1Z" fill="#1c3410" opacity=".3"/></g><rect x="1088" y="280" width="822" height="390" filter="url(#tx2)" opacity=".36"/></g>
<path d="M1683.4,388.7 1693.7,388.7 1693.2,384.1 1690.9,379.6 1694.8,378.0 1690.2,376.8 1687.5,372.7 1691.4,368.1 1686.8,367.0 1679.9,369.3 1677.6,372.7 1679.2,376.1 1683.4,381.9 1682.2,386.4Z" fill="#0c1a28"/>
<path d="M1157.8,653.2 1192.2,653.2 1226.5,650.9 1260.8,645.2 1295.2,644.1 1329.5,641.8 1341.0,639.5 1363.9,640.6 1386.8,641.8 1398.2,639.5 1409.7,632.6 1421.2,623.5 1432.6,620.0 1439.5,619.6 1437.2,622.3 1430.3,625.7 1428.0,632.6 1430.3,639.5 1428.0,646.4 1421.2,650.9 1455.5,652.1 1478.4,653.2 1489.8,652.1 1512.8,647.5 1524.2,642.9 1542.5,638.3 1558.5,636.0 1570.0,633.8 1592.9,634.9 1615.8,634.9 1638.7,632.6 1650.2,632.6 1661.6,631.5 1684.5,628.0 1696.0,625.7 1707.4,628.7 1730.3,630.3 1741.8,633.8 1753.2,629.2 1776.1,626.9 1799.0,625.7 1821.9,625.7 1844.8,627.6 1867.7,626.2 1890.6,627.6 1913.5,631.5 1936.4,634.9 1947.8,637.2 1959.3,638.3 1957.0,644.1 1950.1,652.1 1963.9,653.2 1982.2,653.2 1982.2,680.7 1157.8,680.7ZM333.4,653.2 367.8,653.2 402.1,650.9 436.5,645.2 470.8,644.1 505.2,641.8 516.6,639.5 539.5,640.6 562.4,641.8 573.9,639.5 585.3,632.6 596.8,623.5 608.2,620.0 615.1,619.6 612.8,622.3 605.9,625.7 603.6,632.6 605.9,639.5 603.6,646.4 596.8,650.9 631.1,652.1 654.0,653.2 665.4,652.1 688.4,647.5 699.8,642.9 718.1,638.3 734.1,636.0 745.6,633.8 768.5,634.9 791.4,634.9 814.3,632.6 825.8,632.6 837.2,631.5 860.1,628.0 871.5,625.7 883.0,628.7 905.9,630.3 917.4,633.8 928.8,629.2 951.7,626.9 974.6,625.7 997.5,625.7 1020.4,627.6 1043.3,626.2 1066.2,627.6 1089.1,631.5 1112.0,634.9 1123.5,637.2 1134.9,638.3 1132.6,644.1 1125.7,652.1 1139.5,653.2 1157.8,653.2 1157.8,680.7 333.4,680.7Z" fill="#f2f2f5"/>
<path d="M1424.6,640.6 1392.6,639.5 1379.8,638.3 1370.3,637.2 1362.6,636.0 1356.0,634.9 1350.1,633.8 1344.9,632.6 1340.2,631.5 1336.0,630.3 1332.0,629.2 1328.3,628.0 1324.9,626.9 1321.7,625.7 1318.7,624.6 1315.9,623.5 1313.2,622.3 1310.7,621.2 1308.3,620.0 1306.0,618.9 1303.9,617.7 1301.8,616.6 1299.8,615.4 1297.9,614.3 1296.0,613.1 1294.3,612.0 1292.6,610.9 1291.0,609.7 1289.4,608.6 1287.9,607.4 1286.4,606.3 1285.0,605.1 1283.6,604.0 1282.3,602.8 1281.0,601.7 1279.8,600.6 1278.6,599.4 1277.4,598.3 1276.2,597.1 1275.1,596.0 1274.0,594.8 1273.0,593.7 1272.0,592.5 1271.0,591.4 1270.0,590.2 1269.0,589.1 1268.1,588.0 1267.2,586.8 1266.3,585.7 1265.4,584.5 1264.6,583.4 1263.7,582.2 1262.9,581.1 1262.1,579.9 1261.3,578.8 1260.6,577.6 1259.8,576.5 1259.1,575.4 1258.4,574.2 1257.6,573.1 1256.9,571.9 1256.3,570.8 1255.6,569.6 1254.9,568.5 1254.3,567.3 1253.6,566.2 1253.0,565.1 1252.4,563.9 1251.7,562.8 1251.1,561.6 1250.5,560.5 1250.0,559.3 1249.4,558.2 1248.8,557.0 1248.2,555.9 1247.7,554.8 1247.1,553.6 1246.6,552.5 1246.1,551.3 1245.5,550.2 1245.0,549.0 1244.5,547.9 1244.0,546.7 1243.5,545.6 1243.0,544.4 1242.5,543.3 1242.0,542.2 1241.5,541.0 1241.1,539.9 1240.6,538.7 1240.1,537.6 1239.7,536.4 1239.2,535.3 1238.7,534.1 1238.3,533.0 1237.8,531.9 1237.4,530.7 1237.0,529.6 1236.5,528.4 1236.1,527.3 1235.7,526.1 1235.2,525.0 1234.8,523.8 1234.4,522.7 1234.0,521.5 1233.6,520.4 1233.2,519.3 1232.8,518.1 1232.4,517.0 1232.0,515.8 1231.6,514.7 1231.2,513.5 1230.8,512.4 1230.4,511.2 1230.0,510.1 1229.6,509.0 1229.2,507.8 1228.8,506.7 1228.4,505.5 1228.0,504.4 1227.7,503.2 1227.3,502.1 1226.9,500.9 1226.5,499.8 1226.2,498.6 1225.8,497.5 1225.4,496.4 1225.0,495.2 1224.7,494.1 1224.3,492.9 1223.9,491.8 1223.6,490.6 1223.2,489.5 1222.8,488.3 1222.5,487.2 1222.1,486.1 1221.7,484.9 1221.4,483.8 1221.0,482.6 1220.7,481.5 1220.3,480.3 1219.9,479.2 1219.6,478.0 1219.2,476.9 1218.8,475.7 1218.5,474.6 1218.1,473.5 1217.8,472.3 1217.4,471.2 1217.0,470.0 1216.7,468.9 1216.3,467.7 1216.0,466.6 1215.6,465.4 1215.2,464.3 1214.9,463.2 1214.5,462.0 1214.1,460.9 1213.8,459.7 1213.4,458.6 1213.0,457.4 1212.7,456.3 1212.3,455.1 1211.9,454.0 1211.6,452.8 1211.2,451.7 1210.8,450.6 1210.4,449.4 1210.1,448.3 1209.7,447.1 1209.3,446.0 1208.9,444.8 1208.5,443.7 1208.2,442.5 1207.8,441.4 1207.4,440.2 1207.0,439.1 1206.6,438.0 1206.2,436.8 1205.8,435.7 1205.4,434.5 1205.0,433.4 1204.6,432.2 1204.2,431.1 1203.8,429.9 1203.4,428.8 1203.0,427.7 1202.6,426.5 1202.1,425.4 1201.7,424.2 1201.3,423.1 1200.9,421.9 1200.4,420.8 1200.0,419.6 1199.6,418.5 1199.1,417.4 1198.7,416.2 1198.2,415.1 1197.8,413.9 1197.3,412.8 1196.9,411.6 1196.4,410.5 1195.9,409.3 1195.4,408.2 1195.0,407.0 1194.5,405.9 1194.0,404.8 1193.5,403.6 1193.0,402.5 1192.5,401.3 1191.9,400.2 1191.4,399.0 1190.9,397.9 1190.4,396.7 1189.8,395.6 1189.3,394.5 1188.7,393.3 1188.2,392.2 1187.6,391.0 1187.0,389.9 1186.4,388.7 1185.8,387.6 1185.2,386.4 1184.6,385.3 1184.0,384.1 1183.4,383.0 1182.7,381.9 1182.1,380.7 1181.4,379.6 1180.7,378.4 1180.0,377.3 1179.3,376.1 1178.6,375.0 1177.9,373.8 1177.2,372.7 1176.4,371.6 1175.6,370.4 1174.8,369.3 1174.0,368.1 1173.2,367.0 1172.4,365.8 1171.5,364.7 1170.7,363.5 1169.8,362.4 1168.9,361.2 1167.9,360.1 1167.0,359.0 1166.0,357.8 1165.0,356.7 1164.0,355.5 1162.9,354.4 1161.8,353.2 1160.7,352.1 1159.6,350.9 1158.4,349.8 1157.2,348.7 1156.0,347.5 1154.7,346.4 1153.3,345.2 1152.0,344.1 1150.6,342.9 1149.1,341.8 1147.6,340.6 1146.0,339.5 1144.4,338.3 1142.7,337.2 1140.9,336.1 1139.1,334.9 1137.2,333.8 1135.2,332.6 1133.1,331.5 1130.9,330.3 1128.7,329.2 1126.3,328.0 1123.7,326.9 1121.1,325.8 1118.2,324.6 1115.2,323.5 1733.9,323.5 1730.9,324.6 1728.1,325.8 1725.4,326.9 1722.9,328.0 1720.5,329.2 1718.2,330.3 1716.1,331.5 1714.0,332.6 1712.0,333.8 1710.1,334.9 1708.2,336.1 1706.5,337.2 1704.8,338.3 1703.2,339.5 1701.6,340.6 1700.1,341.8 1698.6,342.9 1697.2,344.1 1695.8,345.2 1694.5,346.4 1693.2,347.5 1692.0,348.7 1690.8,349.8 1689.6,350.9 1688.4,352.1 1687.3,353.2 1686.2,354.4 1685.2,355.5 1684.2,356.7 1683.2,357.8 1682.2,359.0 1681.2,360.1 1680.3,361.2 1679.4,362.4 1678.5,363.5 1677.6,364.7 1676.8,365.8 1675.9,367.0 1675.1,368.1 1674.3,369.3 1673.5,370.4 1672.8,371.6 1672.0,372.7 1671.3,373.8 1670.6,375.0 1669.8,376.1 1669.1,377.3 1668.5,378.4 1667.8,379.6 1667.1,380.7 1666.5,381.9 1665.8,383.0 1665.2,384.1 1664.6,385.3 1663.9,386.4 1663.3,387.6 1662.7,388.7 1662.2,389.9 1661.6,391.0 1661.0,392.2 1660.4,393.3 1659.9,394.5 1659.3,395.6 1658.8,396.7 1658.3,397.9 1657.7,399.0 1657.2,400.2 1656.7,401.3 1656.2,402.5 1655.7,403.6 1655.2,404.8 1654.7,405.9 1654.2,407.0 1653.7,408.2 1653.3,409.3 1652.8,410.5 1652.3,411.6 1651.9,412.8 1651.4,413.9 1650.9,415.1 1650.5,416.2 1650.0,417.4 1649.6,418.5 1649.2,419.6 1648.7,420.8 1648.3,421.9 1647.9,423.1 1647.4,424.2 1647.0,425.4 1646.6,426.5 1646.2,427.7 1645.8,428.8 1645.4,429.9 1645.0,431.1 1644.6,432.2 1644.2,433.4 1643.8,434.5 1643.4,435.7 1643.0,436.8 1642.6,438.0 1642.2,439.1 1641.8,440.2 1641.4,441.4 1641.0,442.5 1640.6,443.7 1640.2,444.8 1639.9,446.0 1639.5,447.1 1639.1,448.3 1638.7,449.4 1638.4,450.6 1638.0,451.7 1637.6,452.8 1637.2,454.0 1636.9,455.1 1636.5,456.3 1636.1,457.4 1635.8,458.6 1635.4,459.7 1635.0,460.9 1634.7,462.0 1634.3,463.2 1633.9,464.3 1633.6,465.4 1633.2,466.6 1632.9,467.7 1632.5,468.9 1632.1,470.0 1631.8,471.2 1631.4,472.3 1631.0,473.5 1630.7,474.6 1630.3,475.7 1630.0,476.9 1629.6,478.0 1629.2,479.2 1628.9,480.3 1628.5,481.5 1628.2,482.6 1627.8,483.8 1627.4,484.9 1627.1,486.1 1626.7,487.2 1626.3,488.3 1626.0,489.5 1625.6,490.6 1625.2,491.8 1624.9,492.9 1624.5,494.1 1624.1,495.2 1623.8,496.4 1623.4,497.5 1623.0,498.6 1622.6,499.8 1622.3,500.9 1621.9,502.1 1621.5,503.2 1621.1,504.4 1620.7,505.5 1620.4,506.7 1620.0,507.8 1619.6,509.0 1619.2,510.1 1618.8,511.2 1618.4,512.4 1618.0,513.5 1617.6,514.7 1617.2,515.8 1616.8,517.0 1616.4,518.1 1616.0,519.3 1615.6,520.4 1615.2,521.5 1614.8,522.7 1614.3,523.8 1613.9,525.0 1613.5,526.1 1613.1,527.3 1612.6,528.4 1612.2,529.6 1611.8,530.7 1611.3,531.9 1610.9,533.0 1610.4,534.1 1610.0,535.3 1609.5,536.4 1609.1,537.6 1608.6,538.7 1608.1,539.9 1607.6,541.0 1607.2,542.2 1606.7,543.3 1606.2,544.4 1605.7,545.6 1605.2,546.7 1604.7,547.9 1604.1,549.0 1603.6,550.2 1603.1,551.3 1602.6,552.5 1602.0,553.6 1601.5,554.8 1600.9,555.9 1600.4,557.0 1599.8,558.2 1599.2,559.3 1598.6,560.5 1598.0,561.6 1597.4,562.8 1596.8,563.9 1596.2,565.1 1595.6,566.2 1594.9,567.3 1594.3,568.5 1593.6,569.6 1592.9,570.8 1592.2,571.9 1591.5,573.1 1590.8,574.2 1590.1,575.4 1589.4,576.5 1588.6,577.6 1587.8,578.8 1587.0,579.9 1586.2,581.1 1585.4,582.2 1584.6,583.4 1583.7,584.5 1582.9,585.7 1582.0,586.8 1581.1,588.0 1580.1,589.1 1579.2,590.2 1578.2,591.4 1577.2,592.5 1576.2,593.7 1575.1,594.8 1574.0,596.0 1572.9,597.1 1571.8,598.3 1570.6,599.4 1569.4,600.6 1568.2,601.7 1566.9,602.8 1565.5,604.0 1564.2,605.1 1562.8,606.3 1561.3,607.4 1559.8,608.6 1558.2,609.7 1556.6,610.9 1554.9,612.0 1553.1,613.1 1551.3,614.3 1549.4,615.4 1547.4,616.6 1545.3,617.7 1543.1,618.9 1540.9,620.0 1538.5,621.2 1535.9,622.3 1533.3,623.5 1530.4,624.6 1527.4,625.7 1524.2,626.9 1520.8,628.0 1517.2,629.2 1513.2,630.3 1508.9,631.5 1504.2,632.6 1499.0,633.8 1493.2,634.9 1486.6,636.0 1478.8,637.2 1469.4,638.3 1456.6,639.5 1424.6,640.6ZM2249.0,640.6 2217.0,639.5 2204.2,638.3 2194.7,637.2 2187.0,636.0 2180.4,634.9 2174.5,633.8 2169.3,632.6 2164.6,631.5 2160.4,630.3 2156.4,629.2 2152.7,628.0 2149.3,626.9 2146.1,625.7 2143.1,624.6 2140.3,623.5 2137.6,622.3 2135.1,621.2 2132.7,620.0 2130.4,618.9 2128.3,617.7 2126.2,616.6 2124.2,615.4 2122.3,614.3 2120.4,613.1 2118.7,612.0 2117.0,610.9 2115.4,609.7 2113.8,608.6 2112.3,607.4 2110.8,606.3 2109.4,605.1 2108.0,604.0 2106.7,602.8 2105.4,601.7 2104.2,600.6 2103.0,599.4 2101.8,598.3 2100.6,597.1 2099.5,596.0 2098.4,594.8 2097.4,593.7 2096.4,592.5 2095.4,591.4 2094.4,590.2 2093.4,589.1 2092.5,588.0 2091.6,586.8 2090.7,585.7 2089.8,584.5 2089.0,583.4 2088.1,582.2 2087.3,581.1 2086.5,579.9 2085.7,578.8 2085.0,577.6 2084.2,576.5 2083.5,575.4 2082.8,574.2 2082.0,573.1 2081.3,571.9 2080.7,570.8 2080.0,569.6 2079.3,568.5 2078.7,567.3 2078.0,566.2 2077.4,565.1 2076.8,563.9 2076.1,562.8 2075.5,561.6 2074.9,560.5 2074.4,559.3 2073.8,558.2 2073.2,557.0 2072.6,555.9 2072.1,554.8 2071.5,553.6 2071.0,552.5 2070.5,551.3 2069.9,550.2 2069.4,549.0 2068.9,547.9 2068.4,546.7 2067.9,545.6 2067.4,544.4 2066.9,543.3 2066.4,542.2 2065.9,541.0 2065.5,539.9 2065.0,538.7 2064.5,537.6 2064.1,536.4 2063.6,535.3 2063.1,534.1 2062.7,533.0 2062.2,531.9 2061.8,530.7 2061.4,529.6 2060.9,528.4 2060.5,527.3 2060.1,526.1 2059.6,525.0 2059.2,523.8 2058.8,522.7 2058.4,521.5 2058.0,520.4 2057.6,519.3 2057.2,518.1 2056.8,517.0 2056.4,515.8 2056.0,514.7 2055.6,513.5 2055.2,512.4 2054.8,511.2 2054.4,510.1 2054.0,509.0 2053.6,507.8 2053.2,506.7 2052.8,505.5 2052.4,504.4 2052.1,503.2 2051.7,502.1 2051.3,500.9 2050.9,499.8 2050.6,498.6 2050.2,497.5 2049.8,496.4 2049.4,495.2 2049.1,494.1 2048.7,492.9 2048.3,491.8 2048.0,490.6 2047.6,489.5 2047.2,488.3 2046.9,487.2 2046.5,486.1 2046.1,484.9 2045.8,483.8 2045.4,482.6 2045.1,481.5 2044.7,480.3 2044.3,479.2 2044.0,478.0 2043.6,476.9 2043.2,475.7 2042.9,474.6 2042.5,473.5 2042.2,472.3 2041.8,471.2 2041.4,470.0 2041.1,468.9 2040.7,467.7 2040.4,466.6 2040.0,465.4 2039.6,464.3 2039.3,463.2 2038.9,462.0 2038.5,460.9 2038.2,459.7 2037.8,458.6 2037.4,457.4 2037.1,456.3 2036.7,455.1 2036.3,454.0 2036.0,452.8 2035.6,451.7 2035.2,450.6 2034.8,449.4 2034.5,448.3 2034.1,447.1 2033.7,446.0 2033.3,444.8 2032.9,443.7 2032.6,442.5 2032.2,441.4 2031.8,440.2 2031.4,439.1 2031.0,438.0 2030.6,436.8 2030.2,435.7 2029.8,434.5 2029.4,433.4 2029.0,432.2 2028.6,431.1 2028.2,429.9 2027.8,428.8 2027.4,427.7 2027.0,426.5 2026.5,425.4 2026.1,424.2 2025.7,423.1 2025.3,421.9 2024.8,420.8 2024.4,419.6 2024.0,418.5 2023.5,417.4 2023.1,416.2 2022.6,415.1 2022.2,413.9 2021.7,412.8 2021.3,411.6 2020.8,410.5 2020.3,409.3 2019.8,408.2 2019.4,407.0 2018.9,405.9 2018.4,404.8 2017.9,403.6 2017.4,402.5 2016.9,401.3 2016.3,400.2 2015.8,399.0 2015.3,397.9 2014.8,396.7 2014.2,395.6 2013.7,394.5 2013.1,393.3 2012.6,392.2 2012.0,391.0 2011.4,389.9 2010.8,388.7 2010.2,387.6 2009.6,386.4 2009.0,385.3 2008.4,384.1 2007.8,383.0 2007.1,381.9 2006.5,380.7 2005.8,379.6 2005.1,378.4 2004.4,377.3 2003.7,376.1 2003.0,375.0 2002.3,373.8 2001.6,372.7 2000.8,371.6 2000.0,370.4 1999.2,369.3 1998.4,368.1 1997.6,367.0 1996.8,365.8 1995.9,364.7 1995.1,363.5 1994.2,362.4 1993.3,361.2 1992.3,360.1 1991.4,359.0 1990.4,357.8 1989.4,356.7 1988.4,355.5 1987.3,354.4 1986.2,353.2 1985.1,352.1 1984.0,350.9 1982.8,349.8 1981.6,348.7 1980.4,347.5 1979.1,346.4 1977.7,345.2 1976.4,344.1 1975.0,342.9 1973.5,341.8 1972.0,340.6 1970.4,339.5 1968.8,338.3 1967.1,337.2 1965.3,336.1 1963.5,334.9 1961.6,333.8 1959.6,332.6 1957.5,331.5 1955.3,330.3 1953.1,329.2 1950.7,328.0 1948.1,326.9 1945.5,325.8 1942.6,324.6 1939.6,323.5 2558.3,323.5 2555.3,324.6 2552.5,325.8 2549.8,326.9 2547.3,328.0 2544.9,329.2 2542.6,330.3 2540.5,331.5 2538.4,332.6 2536.4,333.8 2534.5,334.9 2532.6,336.1 2530.9,337.2 2529.2,338.3 2527.6,339.5 2526.0,340.6 2524.5,341.8 2523.0,342.9 2521.6,344.1 2520.2,345.2 2518.9,346.4 2517.6,347.5 2516.4,348.7 2515.2,349.8 2514.0,350.9 2512.8,352.1 2511.7,353.2 2510.6,354.4 2509.6,355.5 2508.6,356.7 2507.6,357.8 2506.6,359.0 2505.6,360.1 2504.7,361.2 2503.8,362.4 2502.9,363.5 2502.0,364.7 2501.2,365.8 2500.3,367.0 2499.5,368.1 2498.7,369.3 2497.9,370.4 2497.2,371.6 2496.4,372.7 2495.7,373.8 2495.0,375.0 2494.2,376.1 2493.5,377.3 2492.9,378.4 2492.2,379.6 2491.5,380.7 2490.9,381.9 2490.2,383.0 2489.6,384.1 2489.0,385.3 2488.3,386.4 2487.7,387.6 2487.1,388.7 2486.6,389.9 2486.0,391.0 2485.4,392.2 2484.8,393.3 2484.3,394.5 2483.7,395.6 2483.2,396.7 2482.7,397.9 2482.1,399.0 2481.6,400.2 2481.1,401.3 2480.6,402.5 2480.1,403.6 2479.6,404.8 2479.1,405.9 2478.6,407.0 2478.1,408.2 2477.7,409.3 2477.2,410.5 2476.7,411.6 2476.3,412.8 2475.8,413.9 2475.3,415.1 2474.9,416.2 2474.4,417.4 2474.0,418.5 2473.6,419.6 2473.1,420.8 2472.7,421.9 2472.3,423.1 2471.8,424.2 2471.4,425.4 2471.0,426.5 2470.6,427.7 2470.2,428.8 2469.8,429.9 2469.4,431.1 2469.0,432.2 2468.6,433.4 2468.2,434.5 2467.8,435.7 2467.4,436.8 2467.0,438.0 2466.6,439.1 2466.2,440.2 2465.8,441.4 2465.4,442.5 2465.0,443.7 2464.6,444.8 2464.3,446.0 2463.9,447.1 2463.5,448.3 2463.1,449.4 2462.8,450.6 2462.4,451.7 2462.0,452.8 2461.6,454.0 2461.3,455.1 2460.9,456.3 2460.5,457.4 2460.2,458.6 2459.8,459.7 2459.4,460.9 2459.1,462.0 2458.7,463.2 2458.3,464.3 2458.0,465.4 2457.6,466.6 2457.3,467.7 2456.9,468.9 2456.5,470.0 2456.2,471.2 2455.8,472.3 2455.4,473.5 2455.1,474.6 2454.7,475.7 2454.4,476.9 2454.0,478.0 2453.6,479.2 2453.3,480.3 2452.9,481.5 2452.6,482.6 2452.2,483.8 2451.8,484.9 2451.5,486.1 2451.1,487.2 2450.7,488.3 2450.4,489.5 2450.0,490.6 2449.6,491.8 2449.3,492.9 2448.9,494.1 2448.5,495.2 2448.2,496.4 2447.8,497.5 2447.4,498.6 2447.0,499.8 2446.7,500.9 2446.3,502.1 2445.9,503.2 2445.5,504.4 2445.1,505.5 2444.8,506.7 2444.4,507.8 2444.0,509.0 2443.6,510.1 2443.2,511.2 2442.8,512.4 2442.4,513.5 2442.0,514.7 2441.6,515.8 2441.2,517.0 2440.8,518.1 2440.4,519.3 2440.0,520.4 2439.6,521.5 2439.2,522.7 2438.7,523.8 2438.3,525.0 2437.9,526.1 2437.5,527.3 2437.0,528.4 2436.6,529.6 2436.2,530.7 2435.7,531.9 2435.3,533.0 2434.8,534.1 2434.4,535.3 2433.9,536.4 2433.5,537.6 2433.0,538.7 2432.5,539.9 2432.0,541.0 2431.6,542.2 2431.1,543.3 2430.6,544.4 2430.1,545.6 2429.6,546.7 2429.1,547.9 2428.5,549.0 2428.0,550.2 2427.5,551.3 2427.0,552.5 2426.4,553.6 2425.9,554.8 2425.3,555.9 2424.8,557.0 2424.2,558.2 2423.6,559.3 2423.0,560.5 2422.4,561.6 2421.8,562.8 2421.2,563.9 2420.6,565.1 2420.0,566.2 2419.3,567.3 2418.7,568.5 2418.0,569.6 2417.3,570.8 2416.6,571.9 2415.9,573.1 2415.2,574.2 2414.5,575.4 2413.8,576.5 2413.0,577.6 2412.2,578.8 2411.4,579.9 2410.6,581.1 2409.8,582.2 2409.0,583.4 2408.1,584.5 2407.3,585.7 2406.4,586.8 2405.5,588.0 2404.5,589.1 2403.6,590.2 2402.6,591.4 2401.6,592.5 2400.6,593.7 2399.5,594.8 2398.4,596.0 2397.3,597.1 2396.2,598.3 2395.0,599.4 2393.8,600.6 2392.6,601.7 2391.3,602.8 2389.9,604.0 2388.6,605.1 2387.2,606.3 2385.7,607.4 2384.2,608.6 2382.6,609.7 2381.0,610.9 2379.3,612.0 2377.5,613.1 2375.7,614.3 2373.8,615.4 2371.8,616.6 2369.7,617.7 2367.5,618.9 2365.3,620.0 2362.9,621.2 2360.3,622.3 2357.7,623.5 2354.8,624.6 2351.8,625.7 2348.6,626.9 2345.2,628.0 2341.6,629.2 2337.6,630.3 2333.3,631.5 2328.6,632.6 2323.4,633.8 2317.6,634.9 2311.0,636.0 2303.2,637.2 2293.8,638.3 2281.0,639.5 2249.0,640.6Z" fill="#000" opacity=".42" filter="url(#bl3)"/>
<path d="M1402.8,295.5 1414.3,291.4 1428.0,288.0 1455.5,285.7 1489.8,283.4 1512.8,284.5 1524.2,286.8 1542.5,288.0 1528.8,291.4 1531.1,296.0 1526.5,299.4 1525.3,304.0 1519.6,307.4 1519.6,310.9 1519.6,313.8 1510.5,317.7 1496.7,318.9 1487.6,323.9 1478.4,325.8 1473.8,330.3 1471.5,336.7 1467.0,337.2 1460.1,334.9 1455.5,331.5 1452.1,326.9 1447.5,322.3 1447.5,317.7 1453.2,315.4 1445.2,313.2 1444.0,308.6 1439.5,304.0 1434.9,301.0 1423.4,300.1 1413.1,300.6 1407.4,298.3Z" fill="#8a8a8a"/>
<path d="M1185.3,324.4 1196.7,321.2 1189.9,317.7 1199.0,313.8 1211.6,311.3 1231.1,313.6 1247.1,315.2 1263.1,315.9 1276.9,313.6 1286.0,315.4 1304.4,316.6 1311.2,319.3 1322.7,318.9 1338.7,319.3 1350.2,318.2 1353.6,310.2 1361.6,315.4 1368.5,318.2 1374.2,315.2 1382.2,315.9 1383.4,320.0 1371.9,320.5 1370.8,325.1 1368.5,328.0 1361.6,330.3 1354.7,334.9 1353.1,339.9 1358.2,344.1 1366.2,344.5 1375.3,347.5 1381.5,348.4 1381.8,353.2 1385.7,357.1 1389.5,355.5 1389.1,349.8 1394.4,344.5 1390.2,340.2 1392.1,335.6 1391.4,331.7 1401.0,331.9 1407.4,334.9 1410.8,335.4 1410.8,339.9 1415.4,341.1 1420.0,337.7 1422.3,336.3 1426.9,341.1 1429.2,345.2 1433.7,348.7 1438.3,350.3 1442.2,354.4 1439.5,356.7 1432.6,359.4 1423.4,359.4 1416.6,361.2 1410.8,365.1 1417.7,362.4 1422.8,362.6 1420.0,365.6 1422.3,368.6 1429.2,369.7 1432.6,367.4 1432.1,369.7 1424.6,372.7 1418.9,375.0 1419.3,372.0 1416.6,371.6 1412.0,373.8 1408.6,375.4 1408.1,378.4 1409.7,379.1 1406.3,380.0 1400.5,381.6 1400.1,384.1 1397.1,386.9 1396.0,389.9 1396.9,393.8 1393.7,395.6 1389.1,398.3 1384.5,402.5 1383.4,405.9 1386.6,413.2 1386.1,416.9 1384.1,416.7 1380.4,410.9 1380.4,407.7 1377.6,405.9 1374.2,406.6 1369.6,405.2 1365.0,405.4 1365.5,407.7 1361.6,407.7 1355.2,406.6 1352.5,408.2 1347.9,410.9 1347.2,415.5 1346.0,423.1 1347.9,427.7 1350.2,431.1 1353.6,432.9 1359.3,431.8 1362.3,429.9 1363.2,426.5 1370.8,425.4 1369.6,429.9 1368.0,432.9 1367.3,438.0 1373.1,438.2 1379.2,440.2 1378.3,448.3 1378.8,450.6 1381.5,454.0 1384.5,454.4 1387.9,452.8 1392.5,454.7 1393.7,456.3 1397.1,450.6 1399.9,449.0 1405.1,447.1 1406.3,449.4 1409.7,447.1 1413.6,449.9 1418.9,450.6 1423.4,450.6 1428.0,450.1 1430.3,452.8 1432.6,455.1 1436.0,458.6 1439.5,460.9 1446.3,461.3 1450.9,463.6 1453.2,465.4 1455.5,470.5 1455.5,474.6 1458.9,476.4 1461.2,476.0 1468.1,480.3 1475.0,481.2 1480.7,483.3 1485.3,485.6 1489.4,487.2 1490.3,491.8 1489.4,496.4 1485.3,500.9 1481.8,504.4 1480.7,510.1 1480.7,514.7 1478.9,519.3 1476.1,525.0 1471.5,527.3 1467.0,528.9 1462.4,530.7 1458.9,534.1 1458.5,539.9 1454.4,545.6 1449.8,550.2 1447.5,553.1 1444.0,554.5 1439.5,553.6 1436.3,552.5 1439.0,557.5 1437.9,561.6 1433.7,563.5 1428.0,563.9 1427.3,568.0 1421.2,568.5 1423.4,571.9 1420.5,576.5 1415.4,579.9 1418.9,583.4 1415.4,588.0 1412.0,591.4 1413.4,594.6 1413.1,596.4 1420.0,600.1 1413.1,601.7 1406.3,598.3 1399.4,594.8 1397.1,589.1 1399.4,583.4 1397.1,581.1 1401.7,575.4 1400.5,570.3 1401.7,565.1 1401.7,559.3 1404.0,554.8 1406.3,549.0 1406.3,543.3 1407.4,536.4 1408.6,528.4 1409.2,520.4 1409.0,516.5 1405.1,513.5 1398.2,510.1 1395.3,506.2 1393.2,502.1 1390.2,496.4 1387.5,490.6 1384.1,488.3 1383.8,484.9 1386.8,482.2 1385.0,479.9 1386.8,474.6 1386.8,472.3 1389.5,471.2 1392.5,465.9 1392.5,459.7 1390.7,457.4 1391.4,455.6 1387.9,454.4 1386.1,457.9 1383.4,457.2 1379.9,455.6 1378.3,454.4 1375.3,451.7 1373.5,449.9 1369.6,444.8 1367.3,444.4 1361.6,442.8 1358.6,441.2 1354.7,437.7 1350.2,438.6 1345.6,437.5 1341.0,435.7 1336.4,433.4 1331.8,431.1 1328.4,428.1 1328.9,424.7 1326.1,420.8 1322.7,416.7 1319.2,413.5 1317.0,410.9 1313.5,408.2 1311.2,403.2 1307.1,402.0 1307.3,405.4 1311.2,410.5 1314.7,415.1 1317.4,419.2 1319.2,421.5 1318.1,422.2 1313.5,417.8 1312.8,414.6 1308.5,412.1 1308.5,409.3 1304.8,405.2 1302.1,400.2 1299.1,397.2 1294.1,395.6 1291.1,391.0 1289.5,388.0 1286.5,384.1 1285.4,382.1 1285.6,377.3 1286.0,372.7 1286.0,368.6 1284.4,363.8 1288.3,362.8 1283.8,360.1 1278.0,357.8 1276.9,354.4 1272.3,350.3 1268.9,347.5 1264.3,342.9 1259.7,340.2 1255.1,339.9 1249.4,337.9 1241.4,337.2 1235.7,335.4 1229.9,337.2 1223.1,338.8 1225.4,334.9 1220.8,337.2 1218.5,340.6 1211.6,344.1 1207.0,346.4 1200.2,348.2 1192.6,349.6 1199.0,346.8 1202.5,346.4 1208.2,342.9 1209.3,340.2 1205.9,340.6 1199.0,340.2 1199.0,337.2 1192.2,335.8 1189.9,333.3 1192.2,331.0 1193.3,329.9 1201.3,329.2 1201.3,326.9 1195.6,326.9 1188.7,326.4ZM1402.8,295.5 1414.3,291.4 1428.0,288.0 1455.5,285.7 1489.8,283.4 1512.8,284.5 1524.2,286.8 1542.5,288.0 1528.8,291.4 1531.1,296.0 1526.5,299.4 1525.3,304.0 1519.6,307.4 1519.6,310.9 1519.6,313.8 1510.5,317.7 1496.7,318.9 1487.6,323.9 1478.4,325.8 1473.8,330.3 1471.5,336.7 1467.0,337.2 1460.1,334.9 1455.5,331.5 1452.1,326.9 1447.5,322.3 1447.5,317.7 1453.2,315.4 1445.2,313.2 1444.0,308.6 1439.5,304.0 1434.9,301.0 1423.4,300.1 1413.1,300.6 1407.4,298.3ZM1556.5,392.6 1565.4,394.0 1572.3,391.0 1581.5,390.3 1592.4,389.2 1595.2,389.9 1593.4,396.1 1595.2,397.9 1604.3,400.4 1613.5,405.2 1615.8,403.6 1615.8,399.7 1622.7,399.7 1627.2,402.0 1636.4,403.6 1641.0,402.5 1644.0,403.2 1644.7,406.1 1646.7,410.5 1651.3,419.6 1654.7,426.5 1655.4,431.5 1659.3,438.0 1663.9,441.4 1668.9,445.5 1669.2,448.3 1673.0,450.6 1679.9,449.0 1687.2,447.3 1686.8,450.8 1682.2,459.7 1679.9,464.3 1675.3,469.3 1669.6,474.6 1665.0,478.7 1661.6,483.8 1659.3,488.3 1660.5,492.9 1662.7,498.6 1662.7,507.8 1659.3,513.1 1654.3,515.8 1650.2,521.5 1651.3,528.4 1645.6,532.5 1645.1,539.9 1641.0,543.3 1636.4,549.0 1631.8,552.0 1625.0,552.7 1615.8,554.3 1612.1,552.9 1611.7,547.9 1608.9,542.2 1605.5,536.4 1603.2,526.1 1598.6,515.8 1597.0,511.2 1600.9,502.1 1601.4,497.5 1599.8,494.1 1597.9,488.3 1596.3,483.8 1591.8,480.3 1590.2,476.4 1591.8,472.3 1592.2,466.6 1589.5,464.3 1584.9,464.8 1582.6,462.0 1579.8,460.2 1574.6,460.2 1567.7,462.7 1563.1,463.2 1559.2,462.7 1552.8,464.5 1548.2,461.3 1543.7,458.8 1539.5,454.7 1539.1,452.4 1535.7,449.4 1531.5,446.0 1531.5,442.5 1529.9,440.9 1532.2,438.0 1532.7,431.1 1531.1,426.5 1533.4,420.8 1536.1,416.2 1540.2,411.2 1543.7,409.8 1547.1,407.0 1547.6,402.5 1550.5,398.3 1554.4,396.5ZM1557.2,392.2 1555.1,389.9 1549.4,389.9 1548.2,386.0 1549.8,379.6 1548.7,376.1 1551.7,374.5 1559.7,375.2 1565.9,375.2 1567.3,370.4 1564.3,366.3 1559.2,364.7 1559.7,363.3 1566.3,363.1 1566.1,360.8 1570.5,361.0 1573.7,358.3 1578.0,356.9 1580.3,354.4 1581.5,352.5 1586.0,351.9 1590.2,351.2 1589.7,347.5 1588.8,344.1 1594.3,342.5 1594.0,346.4 1592.9,348.7 1595.2,350.9 1598.6,350.0 1602.5,351.2 1607.8,349.8 1612.4,349.3 1615.3,350.0 1618.1,347.5 1618.5,344.1 1621.5,342.5 1625.6,343.4 1623.8,340.6 1623.8,338.8 1629.5,338.3 1634.1,337.9 1638.7,337.2 1635.3,335.8 1627.2,336.7 1622.4,337.4 1618.8,335.4 1619.2,330.3 1627.7,325.8 1625.0,323.9 1620.4,324.4 1618.8,326.9 1612.4,330.3 1609.6,333.8 1609.4,336.1 1613.1,337.7 1608.9,340.2 1607.8,344.1 1606.6,345.9 1602.7,347.5 1599.8,347.7 1599.1,345.9 1597.0,342.2 1595.2,339.5 1594.0,338.3 1588.3,341.6 1583.1,340.2 1581.5,336.1 1581.5,332.6 1586.0,330.3 1592.9,328.0 1597.5,324.6 1599.8,321.2 1604.3,318.2 1610.1,316.1 1615.8,314.3 1622.7,312.7 1629.1,311.8 1635.3,312.5 1641.0,313.6 1638.7,315.0 1645.6,315.7 1652.4,316.1 1662.7,319.3 1663.9,321.9 1658.2,323.2 1650.2,321.9 1645.6,321.9 1649.7,325.8 1650.2,327.4 1655.9,328.5 1657.0,326.9 1662.7,326.7 1661.6,323.5 1667.3,322.3 1670.8,323.0 1671.9,318.2 1675.3,318.9 1676.5,321.6 1679.9,319.6 1691.4,317.3 1694.8,318.4 1702.8,317.0 1708.5,315.0 1716.6,315.7 1723.4,316.6 1725.7,310.9 1730.3,307.0 1737.2,308.6 1738.3,316.6 1741.8,308.6 1753.2,309.3 1755.5,306.3 1769.2,305.1 1769.2,302.2 1787.5,300.1 1799.0,299.4 1808.8,296.7 1815.0,298.3 1826.5,299.0 1829.9,301.7 1821.9,304.5 1828.8,305.8 1842.5,307.4 1854.0,305.8 1860.8,308.6 1865.4,311.3 1870.0,312.5 1875.7,310.9 1888.3,310.9 1890.6,308.6 1904.3,309.0 1913.5,310.9 1918.1,312.2 1934.1,312.7 1937.5,315.2 1947.8,315.4 1959.3,315.4 1961.6,314.3 1973.0,314.8 1982.2,316.8 1991.4,321.2 2000.5,322.8 2005.8,323.5 1998.2,326.2 1986.8,324.6 1984.5,322.8 1982.2,325.8 1977.6,326.4 1976.5,331.5 1979.9,331.9 1968.5,333.3 1960.4,337.2 1950.1,337.2 1943.3,338.3 1941.0,341.8 1944.0,345.9 1941.0,348.7 1936.4,352.8 1933.0,353.7 1928.8,357.8 1927.2,353.2 1926.3,346.4 1928.4,342.9 1934.1,340.6 1939.8,336.5 1944.4,333.8 1936.4,333.1 1929.5,333.8 1925.0,338.3 1918.1,339.5 1911.2,338.3 1897.5,338.8 1891.7,342.9 1886.0,347.5 1879.8,349.3 1884.9,350.9 1890.6,350.9 1893.6,352.8 1892.9,356.2 1891.7,360.1 1890.6,364.0 1887.2,368.1 1881.4,372.7 1874.6,376.6 1870.0,377.3 1867.7,376.8 1867.0,379.6 1862.0,383.5 1866.1,387.6 1866.6,392.2 1865.4,394.0 1859.7,395.8 1859.2,391.0 1860.4,388.7 1856.2,387.6 1857.4,384.1 1854.6,383.2 1847.8,385.5 1848.9,381.2 1842.5,384.8 1839.8,385.7 1842.1,388.5 1846.6,388.0 1850.5,389.2 1847.1,391.0 1843.7,394.0 1845.5,396.3 1848.9,401.8 1848.9,404.1 1849.4,406.4 1848.2,409.8 1844.8,413.9 1842.5,416.9 1839.1,420.1 1835.6,422.4 1831.1,423.5 1826.5,424.9 1822.6,425.8 1821.9,428.1 1818.5,425.1 1814.3,427.0 1812.3,431.1 1815.0,436.1 1819.4,439.6 1820.5,445.3 1819.6,448.3 1815.0,450.8 1811.6,454.0 1810.0,454.7 1810.5,451.7 1807.0,450.3 1804.7,447.1 1801.1,443.9 1799.0,443.9 1797.4,449.4 1797.4,453.3 1800.1,458.1 1803.6,460.4 1806.8,464.3 1807.0,468.4 1808.6,471.4 1806.8,471.6 1802.0,468.0 1799.9,462.0 1799.5,459.7 1795.1,455.1 1796.0,450.6 1795.8,446.0 1794.4,442.5 1793.7,436.8 1791.7,435.7 1788.5,438.4 1785.9,437.5 1786.4,433.4 1784.1,429.3 1781.4,427.0 1780.2,423.5 1777.2,423.1 1773.8,424.7 1769.2,425.8 1768.1,428.8 1764.7,430.2 1758.5,436.1 1753.9,439.1 1753.7,443.7 1752.7,448.3 1752.7,451.0 1750.9,453.3 1749.1,454.2 1747.5,456.1 1745.2,454.0 1744.0,449.4 1741.8,444.8 1740.6,440.7 1738.3,436.8 1737.2,432.2 1736.7,427.7 1732.6,427.0 1728.0,423.5 1730.3,422.4 1726.9,420.8 1724.1,418.0 1722.3,416.4 1716.6,416.7 1710.8,417.1 1705.1,416.4 1701.2,415.7 1700.1,412.8 1694.8,413.7 1691.4,412.8 1687.9,410.7 1685.6,407.5 1683.4,405.4 1681.1,405.9 1679.9,407.0 1681.1,409.8 1683.4,412.1 1685.0,413.9 1686.1,417.4 1687.2,414.8 1688.2,417.4 1687.9,419.0 1693.7,419.2 1698.7,414.6 1699.4,418.5 1704.0,420.6 1706.9,423.1 1704.0,427.7 1702.1,431.1 1698.9,433.6 1696.0,435.7 1689.1,438.9 1682.2,442.5 1673.0,445.3 1669.6,445.5 1668.0,440.7 1667.3,436.8 1663.9,431.1 1659.8,425.8 1658.2,420.8 1655.2,416.9 1651.3,410.9 1649.9,407.0 1648.5,410.9 1644.7,406.1 1644.0,403.2 1648.5,402.9 1650.2,399.5 1652.0,395.6 1652.4,392.2 1652.9,390.3 1649.0,390.6 1644.4,391.9 1639.8,391.5 1636.4,391.7 1633.0,390.3 1631.8,386.4 1630.2,384.6 1630.7,382.5 1636.4,381.9 1636.9,380.3 1642.1,380.3 1646.7,378.4 1650.6,378.4 1653.6,380.0 1658.2,380.7 1665.0,379.6 1665.0,377.0 1661.1,375.0 1657.0,372.7 1654.7,370.9 1657.7,368.8 1660.0,366.5 1655.9,367.0 1650.6,368.6 1653.6,370.9 1651.3,371.3 1646.7,372.7 1644.4,370.4 1646.7,369.3 1642.1,367.9 1638.7,369.7 1638.0,371.1 1635.5,374.3 1633.4,376.8 1634.6,379.6 1636.4,380.3 1631.8,381.6 1630.2,381.4 1625.0,381.2 1622.7,382.3 1622.2,384.6 1625.0,387.1 1622.7,391.0 1619.7,390.3 1618.1,386.9 1614.7,382.5 1614.7,378.9 1610.1,376.1 1604.8,373.2 1602.1,371.1 1601.4,369.9 1598.2,370.9 1598.6,373.4 1601.4,375.0 1606.4,378.6 1612.4,382.5 1608.9,381.9 1607.8,384.1 1609.2,385.3 1606.6,387.6 1606.2,384.1 1603.2,381.6 1598.6,379.6 1594.0,376.4 1592.9,373.8 1590.2,372.9 1587.2,374.3 1584.2,375.9 1580.3,375.2 1577.1,377.3 1577.3,378.9 1571.8,381.2 1569.3,384.1 1570.0,386.0 1568.4,388.0 1565.4,390.3 1559.7,390.6ZM732.8,392.2 730.7,389.9 725.0,389.9 723.8,386.0 725.4,379.6 724.3,376.1 727.3,374.5 735.3,375.2 741.5,375.2 742.9,370.4 739.9,366.3 734.8,364.7 735.3,363.3 741.9,363.1 741.7,360.8 746.1,361.0 749.3,358.3 753.6,356.9 755.9,354.4 757.0,352.5 761.6,351.9 765.8,351.2 765.3,347.5 764.4,344.1 769.9,342.5 769.6,346.4 768.5,348.7 770.8,350.9 774.2,350.0 778.1,351.2 783.4,349.8 788.0,349.3 790.9,350.0 793.7,347.5 794.1,344.1 797.1,342.5 801.2,343.4 799.4,340.6 799.4,338.8 805.1,338.3 809.7,337.9 814.3,337.2 810.9,335.8 802.9,336.7 798.0,337.4 794.4,335.4 794.8,330.3 803.3,325.8 800.6,323.9 796.0,324.4 794.4,326.9 788.0,330.3 785.2,333.8 785.0,336.1 788.7,337.7 784.5,340.2 783.4,344.1 782.2,345.9 778.3,347.5 775.4,347.7 774.7,345.9 772.6,342.2 770.8,339.5 769.6,338.3 763.9,341.6 758.7,340.2 757.0,336.1 757.0,332.6 761.6,330.3 768.5,328.0 773.1,324.6 775.4,321.2 779.9,318.2 785.7,316.1 791.4,314.3 798.3,312.7 804.7,311.8 810.9,312.5 816.6,313.6 814.3,315.0 821.2,315.7 828.0,316.1 838.3,319.3 839.5,321.9 833.8,323.2 825.8,321.9 821.2,321.9 825.3,325.8 825.8,327.4 831.5,328.5 832.6,326.9 838.3,326.7 837.2,323.5 842.9,322.3 846.4,323.0 847.5,318.2 850.9,318.9 852.1,321.6 855.5,319.6 867.0,317.3 870.4,318.4 878.4,317.0 884.1,315.0 892.2,315.7 899.0,316.6 901.3,310.9 905.9,307.0 912.8,308.6 913.9,316.6 917.4,308.6 928.8,309.3 931.1,306.3 944.8,305.1 944.8,302.2 963.1,300.1 974.6,299.4 984.4,296.7 990.6,298.3 1002.1,299.0 1005.5,301.7 997.5,304.5 1004.4,305.8 1018.1,307.4 1029.6,305.8 1036.4,308.6 1041.0,311.3 1045.6,312.5 1051.3,310.9 1063.9,310.9 1066.2,308.6 1079.9,309.0 1089.1,310.9 1093.7,312.2 1109.7,312.7 1113.1,315.2 1123.5,315.4 1134.9,315.4 1137.2,314.3 1148.6,314.8 1157.8,316.8 1167.0,321.2 1176.1,322.8 1181.4,323.5 1173.8,326.2 1162.4,324.6 1160.1,322.8 1157.8,325.8 1153.2,326.4 1152.1,331.5 1155.5,331.9 1144.1,333.3 1136.0,337.2 1125.7,337.2 1118.9,338.3 1116.6,341.8 1119.6,345.9 1116.6,348.7 1112.0,352.8 1108.6,353.7 1104.4,357.8 1102.8,353.2 1101.9,346.4 1104.0,342.9 1109.7,340.6 1115.4,336.5 1120.0,333.8 1112.0,333.1 1105.1,333.8 1100.5,338.3 1093.7,339.5 1086.8,338.3 1073.1,338.8 1067.3,342.9 1061.6,347.5 1055.4,349.3 1060.5,350.9 1066.2,350.9 1069.2,352.8 1068.5,356.2 1067.3,360.1 1066.2,364.0 1062.8,368.1 1057.0,372.7 1050.2,376.6 1045.6,377.3 1043.3,376.8 1042.6,379.6 1037.6,383.5 1041.7,387.6 1042.2,392.2 1041.0,394.0 1035.3,395.8 1034.8,391.0 1036.0,388.7 1031.8,387.6 1033.0,384.1 1030.2,383.2 1023.4,385.5 1024.5,381.2 1018.1,384.8 1015.4,385.7 1017.7,388.5 1022.2,388.0 1026.1,389.2 1022.7,391.0 1019.3,394.0 1021.1,396.3 1024.5,401.8 1024.5,404.1 1025.0,406.4 1023.8,409.8 1020.4,413.9 1018.1,416.9 1014.7,420.1 1011.2,422.4 1006.7,423.5 1002.1,424.9 998.2,425.8 997.5,428.1 994.1,425.1 989.9,427.0 987.9,431.1 990.6,436.1 995.0,439.6 996.1,445.3 995.2,448.3 990.6,450.8 987.2,454.0 985.6,454.7 986.0,451.7 982.6,450.3 980.3,447.1 976.7,443.9 974.6,443.9 973.0,449.4 973.0,453.3 975.7,458.1 979.2,460.4 982.4,464.3 982.6,468.4 984.2,471.4 982.4,471.6 977.6,468.0 975.5,462.0 975.1,459.7 970.7,455.1 971.6,450.6 971.4,446.0 970.0,442.5 969.3,436.8 967.3,435.7 964.1,438.4 961.5,437.5 962.0,433.4 959.7,429.3 957.0,427.0 955.8,423.5 952.8,423.1 949.4,424.7 944.8,425.8 943.7,428.8 940.2,430.2 934.1,436.1 929.5,439.1 929.3,443.7 928.3,448.3 928.3,451.0 926.5,453.3 924.7,454.2 923.1,456.1 920.8,454.0 919.6,449.4 917.4,444.8 916.2,440.7 913.9,436.8 912.8,432.2 912.3,427.7 908.2,427.0 903.6,423.5 905.9,422.4 902.5,420.8 899.7,418.0 897.9,416.4 892.2,416.7 886.4,417.1 880.7,416.4 876.8,415.7 875.7,412.8 870.4,413.7 867.0,412.8 863.5,410.7 861.2,407.5 859.0,405.4 856.7,405.9 855.5,407.0 856.7,409.8 859.0,412.1 860.6,413.9 861.7,417.4 862.8,414.8 863.8,417.4 863.5,419.0 869.3,419.2 874.3,414.6 875.0,418.5 879.6,420.6 882.5,423.1 879.6,427.7 877.7,431.1 874.5,433.6 871.5,435.7 864.7,438.9 857.8,442.5 848.6,445.3 845.2,445.5 843.6,440.7 842.9,436.8 839.5,431.1 835.4,425.8 833.8,420.8 830.8,416.9 826.9,410.9 825.5,407.0 824.1,410.9 820.3,406.1 819.6,403.2 824.1,402.9 825.8,399.5 827.6,395.6 828.0,392.2 828.5,390.3 824.6,390.6 820.0,391.9 815.4,391.5 812.0,391.7 808.6,390.3 807.4,386.4 805.8,384.6 806.3,382.5 812.0,381.9 812.5,380.3 817.7,380.3 822.3,378.4 826.2,378.4 829.2,380.0 833.8,380.7 840.6,379.6 840.6,377.0 836.7,375.0 832.6,372.7 830.3,370.9 833.3,368.8 835.6,366.5 831.5,367.0 826.2,368.6 829.2,370.9 826.9,371.3 822.3,372.7 820.0,370.4 822.3,369.3 817.7,367.9 814.3,369.7 813.6,371.1 811.1,374.3 809.0,376.8 810.2,379.6 812.0,380.3 807.4,381.6 805.8,381.4 800.6,381.2 798.3,382.3 797.8,384.6 800.6,387.1 798.3,391.0 795.3,390.3 793.7,386.9 790.3,382.5 790.3,378.9 785.7,376.1 780.4,373.2 777.7,371.1 777.0,369.9 773.8,370.9 774.2,373.4 777.0,375.0 782.0,378.6 788.0,382.5 784.5,381.9 783.4,384.1 784.8,385.3 782.2,387.6 781.8,384.1 778.8,381.6 774.2,379.6 769.6,376.4 768.5,373.8 765.8,372.9 762.8,374.3 759.8,375.9 755.9,375.2 752.7,377.3 752.9,378.9 747.4,381.2 744.9,384.1 745.6,386.0 744.0,388.0 741.0,390.3 735.3,390.6ZM1829.2,525.0 1831.1,524.5 1836.8,521.5 1842.5,520.4 1848.2,518.1 1850.5,513.5 1852.8,514.2 1856.2,510.1 1860.4,506.7 1864.3,508.5 1866.6,509.0 1868.8,503.7 1873.4,500.9 1880.3,502.1 1883.7,502.5 1881.4,505.5 1880.3,509.0 1884.9,511.2 1889.5,514.7 1892.9,512.4 1894.5,505.5 1896.3,499.3 1898.6,505.5 1902.7,509.0 1904.3,515.8 1910.1,520.9 1914.6,526.1 1920.4,533.0 1921.5,539.9 1919.9,546.7 1916.5,552.0 1914.0,558.2 1913.0,560.5 1907.8,561.6 1905.0,564.1 1900.9,562.3 1898.6,563.5 1892.4,561.6 1889.5,557.0 1886.7,554.1 1885.6,555.9 1883.7,553.6 1885.6,550.2 1881.4,554.3 1879.8,553.8 1876.9,549.7 1870.0,546.7 1864.3,547.4 1858.5,548.6 1854.0,550.2 1852.8,552.2 1844.8,552.2 1840.2,554.8 1835.6,554.3 1833.3,553.1 1835.0,547.9 1833.3,544.4 1831.5,538.7 1829.5,534.1 1830.6,529.6ZM1004.8,525.0 1006.7,524.5 1012.4,521.5 1018.1,520.4 1023.8,518.1 1026.1,513.5 1028.4,514.2 1031.8,510.1 1036.0,506.7 1039.9,508.5 1042.2,509.0 1044.4,503.7 1049.0,500.9 1055.9,502.1 1059.3,502.5 1057.0,505.5 1055.9,509.0 1060.5,511.2 1065.1,514.7 1068.5,512.4 1070.1,505.5 1071.9,499.3 1074.2,505.5 1078.3,509.0 1079.9,515.8 1085.7,520.9 1090.2,526.1 1096.0,533.0 1097.1,539.9 1095.5,546.7 1092.1,552.0 1089.6,558.2 1088.6,560.5 1083.4,561.6 1080.6,564.1 1076.5,562.3 1074.2,563.5 1068.0,561.6 1065.1,557.0 1062.3,554.1 1061.2,555.9 1059.3,553.6 1061.2,550.2 1057.0,554.3 1055.4,553.8 1052.5,549.7 1045.6,546.7 1039.9,547.4 1034.1,548.6 1029.6,550.2 1028.4,552.2 1020.4,552.2 1015.8,554.8 1011.2,554.3 1009.0,553.1 1010.6,547.9 1009.0,544.4 1007.1,538.7 1005.1,534.1 1006.2,529.6ZM1870.0,476.4 1876.9,476.4 1879.2,482.2 1884.9,478.3 1892.9,480.6 1900.9,483.8 1904.3,487.2 1908.5,489.0 1906.6,490.6 1908.9,493.4 1914.6,498.2 1908.9,498.0 1904.3,493.6 1899.8,492.5 1897.5,495.7 1892.9,495.4 1888.3,492.9 1886.0,493.6 1887.2,489.5 1883.7,486.1 1880.3,484.7 1874.6,483.8 1873.4,481.0 1876.9,479.9 1872.3,479.6ZM1045.6,476.4 1052.5,476.4 1054.8,482.2 1060.5,478.3 1068.5,480.6 1076.5,483.8 1079.9,487.2 1084.1,489.0 1082.2,490.6 1084.5,493.4 1090.2,498.2 1084.5,498.0 1079.9,493.6 1075.4,492.5 1073.1,495.7 1068.5,495.4 1063.9,492.9 1061.6,493.6 1062.8,489.5 1059.3,486.1 1055.9,484.7 1050.2,483.8 1049.0,481.0 1052.5,479.9 1047.9,479.6ZM1819.6,470.5 1821.9,470.7 1824.9,468.9 1828.8,467.3 1832.2,463.8 1835.6,459.0 1838.4,458.6 1842.5,462.7 1840.2,464.8 1839.8,467.7 1840.2,472.3 1839.1,474.6 1836.8,478.0 1835.6,483.3 1832.2,483.8 1828.8,482.2 1825.3,482.2 1821.9,478.0 1819.6,473.9ZM1788.2,461.8 1793.3,462.7 1800.1,468.9 1807.0,474.6 1809.3,479.2 1812.7,481.9 1812.3,487.9 1809.3,487.9 1803.6,483.8 1799.7,476.9 1796.0,470.7 1792.1,467.0ZM1683.4,388.7 1693.7,388.7 1693.2,384.1 1690.9,379.6 1694.8,378.0 1690.2,376.8 1687.5,372.7 1691.4,368.1 1686.8,367.0 1679.9,369.3 1677.6,372.7 1679.2,376.1 1683.4,381.9 1682.2,386.4ZM1402.8,295.5 1414.3,291.4 1428.0,288.0 1455.5,285.7 1489.8,283.4 1512.8,284.5 1524.2,286.8 1542.5,288.0 1528.8,291.4 1531.1,296.0 1526.5,299.4 1525.3,304.0 1519.6,307.4 1519.6,310.9 1519.6,313.8 1510.5,317.7 1496.7,318.9 1487.6,323.9 1478.4,325.8 1473.8,330.3 1471.5,336.7 1467.0,337.2 1460.1,334.9 1455.5,331.5 1452.1,326.9 1447.5,322.3 1447.5,317.7 1453.2,315.4 1445.2,313.2 1444.0,308.6 1439.5,304.0 1434.9,301.0 1423.4,300.1 1413.1,300.6 1407.4,298.3Z" fill="none" stroke="#88cc88" stroke-width="1" stroke-linejoin="round"/>
<path d="M1157.8,656.7 1192.2,656.7 1226.5,654.4 1260.8,648.6 1295.2,647.5 1329.5,645.2 1341.0,642.9 1363.9,644.1 1386.8,645.2 1398.2,642.9 1409.7,636.0 1421.2,626.9 1432.6,623.5 1439.5,623.0 1437.2,625.7 1430.3,629.2 1428.0,636.0 1430.3,642.9 1428.0,649.8 1421.2,654.4 1455.5,655.5 1478.4,656.7 1489.8,655.5 1512.8,650.9 1524.2,646.4 1542.5,641.8 1558.5,639.5 1570.0,637.2 1592.9,638.3 1615.8,638.3 1638.7,636.0 1650.2,636.0 1661.6,634.9 1684.5,631.5 1696.0,629.2 1707.4,632.2 1730.3,633.8 1741.8,637.2 1753.2,632.6 1776.1,630.3 1799.0,629.2 1821.9,629.2 1844.8,631.0 1867.7,629.6 1890.6,631.0 1913.5,634.9 1936.4,638.3 1947.8,640.6 1959.3,641.8 1957.0,647.5 1950.1,655.5 1963.9,656.7 1982.2,656.7M333.4,656.7 367.8,656.7 402.1,654.4 436.5,648.6 470.8,647.5 505.2,645.2 516.6,642.9 539.5,644.1 562.4,645.2 573.9,642.9 585.3,636.0 596.8,626.9 608.2,623.5 615.1,623.0 612.8,625.7 605.9,629.2 603.6,636.0 605.9,642.9 603.6,649.8 596.8,654.4 631.1,655.5 654.0,656.7 665.4,655.5 688.4,650.9 699.8,646.4 718.1,641.8 734.1,639.5 745.6,637.2 768.5,638.3 791.4,638.3 814.3,636.0 825.8,636.0 837.2,634.9 860.1,631.5 871.5,629.2 883.0,632.2 905.9,633.8 917.4,637.2 928.8,632.6 951.7,630.3 974.6,629.2 997.5,629.2 1020.4,631.0 1043.3,629.6 1066.2,631.0 1089.1,634.9 1112.0,638.3 1123.5,640.6 1134.9,641.8 1132.6,647.5 1125.7,655.5 1139.5,656.7 1157.8,656.7" fill="none" stroke="#8ad88a" stroke-width=".9" opacity=".75"/>
</g>
<rect x="1088" y="269" width="822" height="1.6" fill="#f4f4f4"/><rect x="1088" y="679.6" width="822" height="1.4" fill="#f4f4f4"/>
<path d="M1089.1,270V680M1157.8,270V680M1226.5,270V680M1295.2,270V680M1363.9,270V680M1432.6,270V680M1501.3,270V680M1570.0,270V680M1638.7,270V680M1707.4,270V680M1776.1,270V680M1844.8,270V680M1088,337.2H1910M1088,405.9H1910M1088,474.6H1910M1088,543.3H1910M1088,612.0H1910" stroke="#d8d8d8" stroke-width="1" stroke-dasharray="1.2 4.2" fill="none" opacity=".9"/>
<g fill="none" stroke="#f01818" stroke-width=".9"><circle cx="1900.2" cy="443.5" r="3"/><circle cx="1900.2" cy="443.5" r="5"/><circle cx="1900.2" cy="443.5" r="7"/><circle cx="1900.2" cy="443.5" r="9"/><circle cx="1900.2" cy="443.5" r="11"/><circle cx="1900.2" cy="443.5" r="13"/><circle cx="1900.2" cy="443.5" r="15"/><circle cx="1900.2" cy="443.5" r="17"/><circle cx="1900.2" cy="443.5" r="19"/><circle cx="1900.2" cy="443.5" r="21"/><circle cx="1900.2" cy="443.5" r="23"/><circle cx="1075.8" cy="443.5" r="3"/><circle cx="1075.8" cy="443.5" r="5"/><circle cx="1075.8" cy="443.5" r="7"/><circle cx="1075.8" cy="443.5" r="9"/><circle cx="1075.8" cy="443.5" r="11"/><circle cx="1075.8" cy="443.5" r="13"/><circle cx="1075.8" cy="443.5" r="15"/><circle cx="1075.8" cy="443.5" r="17"/><circle cx="1075.8" cy="443.5" r="19"/><circle cx="1075.8" cy="443.5" r="21"/><circle cx="1075.8" cy="443.5" r="23"/></g>
<path d="M1813.5,589.2C1818.8,589.6 1835.1,591.1 1845.4,591.4C1855.7,591.7 1864.5,591.6 1875.3,591.0C1886.1,590.4 1904.2,588.2 1910.0,587.6M1088.0,587.6C1093.0,585.6 1107.9,580.0 1117.9,575.7C1127.9,571.4 1139.5,566.5 1147.8,561.7C1156.1,556.9 1161.1,552.4 1167.8,546.8C1174.5,541.1 1181.1,534.9 1187.7,527.8C1194.3,520.6 1200.6,513.0 1207.6,503.9C1214.6,494.8 1220.3,485.4 1229.6,473.0C1238.9,460.6 1252.5,442.4 1263.5,429.5C1274.5,416.6 1284.8,404.6 1295.4,395.6C1306.0,386.6 1317.7,380.6 1327.3,375.7C1336.9,370.8 1344.4,369.1 1353.2,366.3C1362.0,363.6 1371.9,360.9 1380.0,359.2C1388.1,357.5 1395.2,356.9 1401.9,356.3C1408.6,355.7 1414.0,355.6 1420.0,355.6C1426.0,355.6 1428.8,355.1 1437.8,356.3C1446.8,357.5 1461.9,359.9 1473.7,362.7C1485.5,365.5 1497.3,368.8 1508.6,373.3C1519.9,377.8 1532.7,383.6 1541.5,389.6C1550.3,395.7 1554.8,402.0 1561.4,409.6C1568.0,417.2 1574.7,426.9 1581.3,435.5C1587.9,444.1 1596.3,454.6 1601.3,461.4C1606.3,468.1 1605.5,468.8 1611.3,476.0C1617.1,483.2 1629.7,497.4 1636.0,504.9C1642.3,512.4 1644.0,515.3 1649.0,520.8C1654.0,526.3 1659.8,532.1 1665.9,537.8C1672.1,543.4 1679.2,549.7 1685.9,554.7C1692.6,559.7 1700.2,564.4 1705.8,567.7C1711.4,571.0 1714.0,572.2 1719.7,574.7C1725.4,577.2 1732.9,580.5 1739.7,582.7C1746.5,585.0 1757.1,587.3 1760.6,588.2" stroke="#00e8f0" fill="none" stroke-width="1.15"/><path d="M1319.3,469.4C1322.8,466.2 1332.9,456.6 1340.0,450.0C1347.1,443.4 1354.0,436.6 1362.0,429.5C1370.0,422.4 1379.6,413.6 1387.9,407.6C1396.2,401.6 1402.9,397.9 1411.9,393.6C1420.9,389.3 1430.2,385.0 1441.8,381.7C1453.4,378.4 1468.3,375.4 1481.6,373.7C1494.9,372.0 1508.2,370.8 1521.5,371.3C1534.8,371.8 1548.1,373.3 1561.4,376.7C1574.7,380.1 1588.9,385.6 1601.3,391.6C1613.7,397.6 1626.9,406.3 1636.0,412.6C1645.1,418.9 1649.2,423.7 1655.9,429.5C1662.6,435.3 1668.9,440.8 1675.9,447.5C1682.9,454.2 1691.2,462.9 1697.8,470.0C1704.4,477.1 1709.5,482.9 1715.8,489.9C1722.1,496.9 1729.1,505.2 1735.7,511.9C1742.3,518.5 1748.9,524.3 1755.6,529.8C1762.2,535.3 1768.9,540.5 1775.6,544.8C1782.2,549.1 1788.8,552.6 1795.5,555.7C1802.2,558.9 1808.8,561.4 1815.5,563.7C1822.2,566.0 1828.8,568.0 1835.4,569.7C1842.0,571.4 1848.7,572.5 1855.3,573.7C1861.9,574.9 1866.2,576.0 1875.3,576.7C1884.4,577.4 1904.2,577.7 1910.0,577.9M1088.0,576.9C1093.0,576.0 1107.9,573.9 1117.9,571.7C1127.9,569.5 1136.2,568.4 1147.8,563.7C1159.4,559.1 1174.4,552.8 1187.7,543.8C1201.0,534.8 1215.3,521.4 1227.6,509.9C1239.9,498.4 1255.8,480.8 1261.5,475.0" stroke="#10e010" fill="none" stroke-width="1.15"/><path d="M1760.6,610.6C1758.4,613.1 1752.8,621.0 1747.7,625.5C1742.6,630.0 1736.7,634.0 1729.7,637.5C1722.7,641.0 1714.8,643.8 1705.8,646.5C1696.8,649.2 1687.5,651.5 1675.9,653.5C1664.3,655.5 1646.8,657.4 1636.0,658.6C1625.2,659.8 1622.1,660.3 1611.3,660.8C1600.5,661.3 1584.7,661.9 1571.4,661.8C1558.1,661.7 1544.8,661.3 1531.5,660.4C1518.2,659.5 1503.9,658.2 1491.6,656.4C1479.3,654.6 1467.7,652.5 1457.7,649.5C1447.7,646.5 1439.1,643.2 1431.8,638.5C1424.5,633.8 1419.1,628.0 1413.8,621.5C1408.5,615.0 1404.2,607.6 1399.9,599.6C1395.6,591.6 1391.6,583.3 1387.9,573.7C1384.2,564.1 1381.0,552.4 1378.0,541.8C1375.0,531.2 1372.5,520.9 1370.0,509.9C1367.5,498.9 1364.6,482.8 1363.0,476.0C1361.4,469.2 1361.8,476.5 1360.2,469.4C1358.6,462.3 1356.0,446.8 1353.2,433.5C1350.4,420.2 1346.9,402.9 1343.2,389.6C1339.5,376.3 1336.3,364.3 1331.3,353.7C1326.3,343.1 1320.6,333.4 1313.3,325.8C1306.0,318.2 1298.4,312.9 1287.4,307.9C1276.4,302.9 1260.8,298.9 1247.5,295.9C1234.2,292.9 1222.5,291.3 1207.6,289.9C1192.6,288.5 1177.7,287.7 1157.8,287.5C1137.9,287.3 1099.6,288.7 1088.0,288.9M1910.0,289.3C1904.2,289.9 1886.1,291.1 1875.3,292.9C1864.5,294.7 1854.4,297.1 1845.4,299.9C1836.4,302.7 1828.7,305.6 1821.4,309.9C1814.1,314.2 1807.2,320.1 1801.5,325.8C1795.8,331.5 1791.8,337.2 1787.5,343.8C1783.2,350.4 1779.2,357.4 1775.6,365.7C1771.9,374.0 1768.6,384.3 1765.6,393.6C1762.6,402.9 1760.1,412.2 1757.6,421.5C1755.1,430.8 1752.8,440.9 1750.7,449.5C1748.6,458.1 1747.5,461.9 1745.0,473.0C1742.5,484.1 1738.9,502.4 1735.7,515.9C1732.5,529.4 1729.0,542.2 1725.7,553.8C1722.4,565.4 1719.2,576.6 1715.8,585.7C1712.4,594.8 1707.1,604.5 1705.4,608.2" stroke="#ff1010" fill="none" stroke-width="1.15"/><path d="M1562.4,482 L1523.1,519.5" stroke="#f0d020" stroke-width="1.1"/><path d="M1838.2,392 L1844.8,419.5" stroke="#f020f0" stroke-width="1.2"/>
<g stroke="#f0e020" stroke-width="1.1" fill="none" stroke-dasharray="2.5 6"><circle cx="1760.6" cy="610.6" r="15.5"/></g>
<path d="M1756,606l9,9m0-9l-9,9" stroke="#ff2020" stroke-width="1"/>
<path d="M1354,378 l-3.4,-6 a5.2,5.2 0 1 1 6.8,0Z" fill="#f0b428" stroke="#f8f0d8" stroke-width="1"/><circle cx="1354" cy="368.4" r="1.7" fill="#fff"/><path d="M1392,391 l-3.4,-6 a5.2,5.2 0 1 1 6.8,0Z" fill="#f0b428" stroke="#f8f0d8" stroke-width="1"/><circle cx="1392" cy="381.4" r="1.7" fill="#fff"/>
<g transform="translate(1316,474.5) rotate(-48)"><rect x="-10.5" y="-2.6" width="7" height="5.2" fill="#5868c8" stroke="#e8ecff" stroke-width=".8"/><rect x="3.5" y="-2.6" width="7" height="5.2" fill="#5868c8" stroke="#e8ecff" stroke-width=".8"/><path d="M-8.2,-2.6v5.2M-5.9,-2.6v5.2M5.8,-2.6v5.2M8.1,-2.6v5.2" stroke="#c0c8ff" stroke-width=".5"/><rect x="-3.2" y="-3.2" width="6.4" height="6.4" fill="#e8c020" stroke="#fff" stroke-width=".8"/><path d="M0,-6.5V-3.2M0,3.2V6.5" stroke="#e8e8e8" stroke-width="1"/></g><g transform="translate(1812.5,590.5) rotate(-48)"><rect x="-10.5" y="-2.6" width="7" height="5.2" fill="#5868c8" stroke="#e8ecff" stroke-width=".8"/><rect x="3.5" y="-2.6" width="7" height="5.2" fill="#5868c8" stroke="#e8ecff" stroke-width=".8"/><path d="M-8.2,-2.6v5.2M-5.9,-2.6v5.2M5.8,-2.6v5.2M8.1,-2.6v5.2" stroke="#c0c8ff" stroke-width=".5"/><rect x="-3.2" y="-3.2" width="6.4" height="6.4" fill="#e8c020" stroke="#fff" stroke-width=".8"/><path d="M0,-6.5V-3.2M0,3.2V6.5" stroke="#e8e8e8" stroke-width="1"/></g>
<g transform="translate(1566.5,478) rotate(40)"><path d="M0,-9 C3,-6 3,2 2.4,6 L-2.4,6 C-3,2 -3,-6 0,-9Z" fill="#f4f4f4" stroke="#333" stroke-width=".8"/><path d="M0,-9 C1.6,-7.6 2.2,-6 2.5,-4.4 L-2.5,-4.4 C-2.2,-6 -1.6,-7.6 0,-9Z" fill="#d82020"/><path d="M-2.4,6l-2.6,2.4 0,-4Z M2.4,6l2.6,2.4 0,-4Z" fill="#333"/><path d="M0,6v4" stroke="#f0a020" stroke-width="2"/></g>
<g transform="translate(1836.4,387.6) rotate(35)"><path d="M0,-9 L1.6,-2 L9,2.5 L9,4.2 L1.6,2.4 L1.2,7 L3.4,8.8 L3.4,9.8 L0,9 L-3.4,9.8 L-3.4,8.8 L-1.2,7 L-1.6,2.4 L-9,4.2 L-9,2.5 L-1.6,-2Z" fill="#a8a8b0" stroke="#2a2a30" stroke-width=".8"/></g>
<rect x="1829" y="392" width="4" height="4" fill="#f0a020"/>
<g font-family="'Liberation Sans',sans-serif" font-weight="700"><text x="1357.5" y="367.8" font-size="14.2" letter-spacing="-0.59" fill="#00f0f0" stroke="#101010" stroke-width="2.2" paint-order="stroke" stroke-linejoin="round">Bloomington</text><text x="1395.0" y="381.0" font-size="14.2" letter-spacing="-0.24" fill="#ff1010" stroke="#101010" stroke-width="2.2" paint-order="stroke" stroke-linejoin="round">White_House_DC</text><text x="1839.4" y="381.7" font-size="14.2" letter-spacing="-0.82" fill="#ff20ff" stroke="#101010" stroke-width="2.2" paint-order="stroke" stroke-linejoin="round">Aircraft1</text><text x="1319.6" y="469.5" font-size="14.2" letter-spacing="-0.39" fill="#20f020" stroke="#101010" stroke-width="2.2" paint-order="stroke" stroke-linejoin="round">CircularSat</text><text x="1570.3" y="469.4" font-size="14.2" letter-spacing="-0.16" fill="#ffff40" stroke="#101010" stroke-width="2.2" paint-order="stroke" stroke-linejoin="round">Missile1</text><text x="1817.2" y="583.7" font-size="14.2" letter-spacing="-0.04" fill="#20f0f0" stroke="#101010" stroke-width="2.2" paint-order="stroke" stroke-linejoin="round">ZARYA_25544</text><text x="1762.6" y="604.6" font-size="14.2" letter-spacing="-0.28" fill="#ff1010" stroke="#101010" stroke-width="2.2" paint-order="stroke" stroke-linejoin="round">Geoeye1_33331</text></g>
<g font-family="'Liberation Sans',sans-serif" font-weight="700" font-size="14" fill="#c4c4c4" stroke="#101010" stroke-width="2" paint-order="stroke" letter-spacing="-0.2"><text x="1089.5" y="333.0">60</text><text x="1089.5" y="401.7">30</text><text x="1089.5" y="470.4">0</text><text x="1089.5" y="539.1">-30</text><text x="1089.5" y="607.8">-60</text><text x="1090.6" y="675">150</text><text x="1159.3" y="675">180</text><text x="1228.0" y="675">-150</text><text x="1296.7" y="675">-120</text><text x="1365.4" y="675">-90</text><text x="1434.1" y="675">-60</text><text x="1502.8" y="675">-30</text><text x="1571.5" y="675">0</text><text x="1640.2" y="675">30</text><text x="1708.9" y="675">60</text><text x="1777.6" y="675">90</text><text x="1846.3" y="675">120</text></g>
<g fill="#fff"><path transform="translate(1853.9,746.9) scale(1.27)" d="M0,0 L3.2,1.1 V11.2 L7.8,8.6 L5.6,7.5 L4.2,4.1 L11.4,6.6 V10.3 L3.2,15 L0,13.2Z"/><text x="1874.8" y="762" font-family="'Liberation Sans',sans-serif" font-size="16.5" letter-spacing="-0.45">bing</text></g>
</svg>
<div class="b" style="left:8px;top:824px;width:1920px;height:188px;background:#f7f7f2"></div>
<span class="t" style="left:10.00px;top:831.63px;font:400 13.2px/18px 'Liberation Sans',sans-serif;color:#000;letter-spacing:-0.228px;">Timeline View 1</span>
<svg class="b" style="left:1869px;top:834px;" width="56" height="14"><path d="M4 5h8L8 9.5Z" fill="#222"/><path d="M24.5 2.5h5v4.5h-5zM23 7.5h8M27 7.5v4" fill="none" stroke="#222" stroke-width="1.1"/><path d="M28.5 2.5v4.5" stroke="#222" stroke-width="1.4"/><path d="M44 3.5l8 8m0-8l-8 8" stroke="#222" stroke-width="1"/></svg>
<div class="b" style="left:9px;top:853.6px;width:1914px;height:3.4px;background:linear-gradient(180deg,#b4b4b4 0,#b4b4b4 40%,#686868 60%,#686868 100%)"></div>
<div class="b" style="left:9px;top:853.6px;width:3.4px;height:156.5px;background:linear-gradient(90deg,#b4b4b4 0,#b4b4b4 40%,#686868 60%,#686868 100%)"></div>
<div class="b" style="left:12px;top:856px;width:1911px;height:24px;background:linear-gradient(180deg,#fefefe,#f8f8f8)"></div>
<div class="b" style="left:12px;top:880px;width:1911px;height:14px;background:#efede0"></div>
<div class="b" style="left:1921px;top:856px;width:2px;height:154px;background:#e4e4e4"></div>
<div class="b" style="left:9px;top:1009px;width:1914px;height:2px;background:#e4e4e4"></div>
<svg class="b" style="left:14.5px;top:860px" width="16" height="16" viewBox="0 0 16 16"><rect x="1.5" y="2.5" width="13" height="12.5" fill="#d4d088" stroke="#5a5420" stroke-width="1.1"/><rect x="5.5" y="2.5" width="5" height="2.6" fill="#f0eeb8" stroke="#5a5420" stroke-width=".8"/><path d="M4 8h8M4 10.2h8M4 12.4h8" stroke="#7a7430" stroke-width=".9"/></svg>
<div class="b" style="left:39px;top:860px;width:1px;height:17px;background:#b8b8a8"></div>
<svg class="b" style="left:49px;top:860px" width="16" height="16" viewBox="0 0 16 16"><rect x="1" y="2" width="14" height="13" rx="1.5" fill="#fff" stroke="#1838a0" stroke-width="1.3"/><path d="M1 6h14M1 10h14M5.5 6v9M10.5 6v9" stroke="#1838a0" stroke-width="1"/><path d="M4.5 0.5v3M11.5 0.5v3" stroke="#1838a0" stroke-width="1.4"/><rect x="6" y="6.5" width="4" height="3" fill="#1838a0"/></svg>
<svg class="b" style="left:68px;top:860px" width="16" height="16" viewBox="0 0 16 16"><rect x="0.5" y="2" width="15" height="12" fill="#e4e4e8"/><path d="M2 9l3-3v2h2.5M14 8l-3 3V9H8.5" fill="none" stroke="#222" stroke-width="1.2"/><path d="M11 4.5l2 2.2h-4Z" fill="#222"/></svg>
<div class="b" style="left:94px;top:860px;width:1px;height:17px;background:#b8b8a8"></div>
<svg class="b" style="left:104px;top:860px" width="16" height="16" viewBox="0 0 16 16"><rect x="2" y="1.5" width="12" height="10" rx="1.5" fill="#fff" stroke="#1838a0" stroke-width="1.2"/><path d="M2 5h12M2 8h12M6 5v6M10 5v6" stroke="#1838a0" stroke-width=".9"/><path d="M5 0.3v2.4M11 0.3v2.4" stroke="#1838a0" stroke-width="1.3"/><path d="M2 12 C5 8.5 11 8.5 14 12 C11 15.5 5 15.5 2 12Z" fill="#f0e0b0" stroke="#805010" stroke-width="1"/><circle cx="8" cy="12" r="2" fill="#489020" stroke="#203000" stroke-width=".6"/></svg>
<div class="b" style="left:122px;top:858px;width:135px;height:21px;background:#fff;border:1px solid #e4e4e4"></div>
<span class="t" style="left:128.00px;top:859.63px;font:400 12.6px/18px 'Liberation Sans',sans-serif;color:#000;letter-spacing:-0.278px;">Scenario Availability</span>
<svg class="b" style="left:242px;top:866px;" width="7" height="4"><path d="M0 0h7L3.5 4Z" fill="#000"/></svg>
<svg class="b" style="left:257px;top:860px" width="16" height="16" viewBox="0 0 16 16"><path d="M3.5 10.5 L11.5 2.5 L13.5 4.5 L5.5 12.5Z" fill="#f0c020" stroke="#806000" stroke-width=".7"/><path d="M3.5 10.5 L5.5 12.5 L2 14Z" fill="#f8e0b8" stroke="#806000" stroke-width=".5"/><path d="M11.5 2.5l1-1 2 2-1 1" fill="#e08080" stroke="#806000" stroke-width=".5"/></svg>
<svg class="b" style="left:270.5px;top:860px" width="16" height="16" viewBox="0 0 16 16"><rect x="1.5" y="1.5" width="13" height="13" fill="#50505a" stroke="#111"/><rect x="4" y="2" width="8" height="5.5" fill="#f2f2f2" stroke="#333" stroke-width=".6"/><rect x="4" y="9.5" width="8" height="5" fill="#c8c8cc"/><rect x="9" y="10.5" width="2" height="3.2" fill="#222"/></svg>
<svg class="b" style="left:286.5px;top:860px" width="16" height="16" viewBox="0 0 16 16"><rect x="0.5" y="2" width="15" height="12" fill="#e4e4e8"/><path d="M2 9l3-3v2h2.5M14 7l-3 3V8H8.5" fill="none" stroke="#333" stroke-width="1.2"/></svg>
<div class="b" style="left:309px;top:860px;width:1px;height:17px;background:#b8b8a8"></div>
<svg class="b" style="left:319px;top:860px" width="16" height="16" viewBox="0 0 16 16"><circle cx="11" cy="5" r="4.2" fill="#fff" stroke="#000" stroke-width="1.1"/><path d="M11 2.5V5l2 1.2" fill="none" stroke="#000" stroke-width=".9"/><path d="M2.5 1.5h2v2h2v2h-2v2h-2v-2h-2v-2h2Z" fill="#fff" stroke="#000" stroke-width=".9"/><path d="M1.5 12 C5 8.5 11 8.5 14.5 12 C11 15.5 5 15.5 1.5 12Z" fill="#f0e0b0" stroke="#805010" stroke-width="1"/><circle cx="8" cy="12" r="2" fill="#489020" stroke="#203000" stroke-width=".6"/></svg>
<div class="b" style="left:337px;top:858px;width:155px;height:21px;background:#fff;border:1px solid #e4e4e4"></div>
<span class="t" style="left:343.00px;top:859.63px;font:400 12.6px/18px 'Liberation Sans',sans-serif;color:#000;letter-spacing:-0.474px;">Scenario Analysis Period</span>
<svg class="b" style="left:479.5px;top:866px;" width="7" height="4"><path d="M0 0h7L3.5 4Z" fill="#000"/></svg>
<svg class="b" style="left:494px;top:860px" width="16" height="16" viewBox="0 0 16 16"><path d="M3.5 10.5 L11.5 2.5 L13.5 4.5 L5.5 12.5Z" fill="#f0c020" stroke="#806000" stroke-width=".7"/><path d="M3.5 10.5 L5.5 12.5 L2 14Z" fill="#f8e0b8" stroke="#806000" stroke-width=".5"/><path d="M11.5 2.5l1-1 2 2-1 1" fill="#e08080" stroke="#806000" stroke-width=".5"/></svg>
<svg class="b" style="left:508px;top:860px" width="16" height="16" viewBox="0 0 16 16"><rect x="1.5" y="1.5" width="13" height="13" fill="#50505a" stroke="#111"/><rect x="4" y="2" width="8" height="5.5" fill="#f2f2f2" stroke="#333" stroke-width=".6"/><rect x="4" y="9.5" width="8" height="5" fill="#c8c8cc"/><rect x="9" y="10.5" width="2" height="3.2" fill="#222"/></svg>
<svg class="b" style="left:524px;top:860px" width="16" height="16" viewBox="0 0 16 16"><rect x="0.5" y="2" width="15" height="12" fill="#e4e4e8"/><path d="M2 9l3-3v2h2.5M14 7l-3 3V8H8.5" fill="none" stroke="#333" stroke-width="1.2"/></svg>
<div class="b" style="left:546px;top:860px;width:1px;height:17px;background:#b8b8a8"></div>
<svg class="b" style="left:557px;top:860px" width="16" height="16" viewBox="0 0 16 16"><path d="M4.5 1 L10 10M11.5 1 L6 10" stroke="#222" stroke-width="1.4"/><circle cx="4.8" cy="12.5" r="2.1" fill="none" stroke="#1840c8" stroke-width="1.3"/><circle cx="11.2" cy="12.5" r="2.1" fill="none" stroke="#1840c8" stroke-width="1.3"/></svg>
<svg class="b" style="left:575.5px;top:860px" width="16" height="16" viewBox="0 0 16 16"><rect x="1.5" y="1.5" width="8" height="9.5" fill="#fff" stroke="#223" stroke-width="1"/><path d="M3 4h5M3 6h5M3 8h5" stroke="#556" stroke-width=".8"/><rect x="6.5" y="5.5" width="8" height="9.5" fill="#fff" stroke="#223" stroke-width="1"/><path d="M8 8h5M8 10h5M8 12h5" stroke="#2040b0" stroke-width=".9"/></svg>
<svg class="b" style="left:593px;top:860px" width="16" height="16" viewBox="0 0 16 16"><rect x="1.5" y="3" width="11" height="12" fill="#b08030" stroke="#302000" stroke-width="1"/><rect x="4.5" y="1.5" width="5" height="3" fill="#c8c8d0" stroke="#202020" stroke-width=".8"/><rect x="6.5" y="7" width="8" height="8" fill="#fff" stroke="#203080" stroke-width=".9"/><path d="M8 9.5h5M8 11.5h5" stroke="#4060c0" stroke-width=".8"/></svg>
<svg class="b" style="left:611px;top:860px" width="16" height="16" viewBox="0 0 16 16"><path d="M2 2.5 L14 14M14 2.5 L2 14" stroke="#e01818" stroke-width="2.1"/></svg>
<div class="b" style="left:636.5px;top:860px;width:1px;height:17px;background:#b8b8a8"></div>
<svg class="b" style="left:648px;top:860px" width="16" height="16" viewBox="0 0 16 16"><circle cx="8" cy="8" r="7" fill="#1c50d8" stroke="#0a2a80" stroke-width=".8"/><text x="8" y="12.2" font-family="Liberation Sans,sans-serif" font-size="11" font-weight="700" fill="#fff" text-anchor="middle">?</text></svg>
<div class="b" style="left:16px;top:882px;width:1904px;height:9px;background:linear-gradient(180deg,#2a7af8,#0a5ae8 40%,#0048d0);"></div>
<div class="b" style="left:1901.5px;top:883.5px;width:18px;height:7px;background:#3c3c3c"></div>
<svg class="b" style="left:16px;top:882px;" width="8" height="9"><path d="M1 1.5h5L4.5 4H1Z" fill="#fff"/><path d="M1 1v7.5" stroke="#fff" stroke-width="1.2"/></svg>
<div class="b" style="left:16px;top:893.5px;width:1904.5px;height:22.5px;background:linear-gradient(180deg,#86b6ea,#8fbdee 40%,#88b4e4);border:1px solid #1c5ad8;border-bottom:2px solid #1c5ad8"></div>
<svg class="b" style="left:16px;top:894.5px;" width="1904" height="8"><path d="M0.2 0V5.5M13.4 0V3.2M26.7 0V3.2M39.9 0V3.2M53.1 0V3.2M66.3 0V3.2M79.6 0V3.2M92.8 0V3.2M106.0 0V3.2M119.2 0V3.2M132.5 0V3.2M145.7 0V3.2M158.9 0V5.5M172.1 0V3.2M185.4 0V3.2M198.6 0V3.2M211.8 0V3.2M225.1 0V3.2M238.3 0V3.2M251.5 0V3.2M264.7 0V3.2M278.0 0V3.2M291.2 0V3.2M304.4 0V3.2M317.6 0V5.5M330.9 0V3.2M344.1 0V3.2M357.3 0V3.2M370.5 0V3.2M383.8 0V3.2M397.0 0V3.2M410.2 0V3.2M423.5 0V3.2M436.7 0V3.2M449.9 0V3.2M463.1 0V3.2M476.4 0V5.5M489.6 0V3.2M502.8 0V3.2M516.0 0V3.2M529.3 0V3.2M542.5 0V3.2M555.7 0V3.2M568.9 0V3.2M582.2 0V3.2M595.4 0V3.2M608.6 0V3.2M621.9 0V3.2M635.1 0V5.5M648.3 0V3.2M661.5 0V3.2M674.8 0V3.2M688.0 0V3.2M701.2 0V3.2M714.4 0V3.2M727.7 0V3.2M740.9 0V3.2M754.1 0V3.2M767.3 0V3.2M780.6 0V3.2M793.8 0V5.5M807.0 0V3.2M820.3 0V3.2M833.5 0V3.2M846.7 0V3.2M859.9 0V3.2M873.2 0V3.2M886.4 0V3.2M899.6 0V3.2M912.8 0V3.2M926.1 0V3.2M939.3 0V3.2M952.5 0V5.5M965.7 0V3.2M979.0 0V3.2M992.2 0V3.2M1005.4 0V3.2M1018.7 0V3.2M1031.9 0V3.2M1045.1 0V3.2M1058.3 0V3.2M1071.6 0V3.2M1084.8 0V3.2M1098.0 0V3.2M1111.2 0V5.5M1124.5 0V3.2M1137.7 0V3.2M1150.9 0V3.2M1164.1 0V3.2M1177.4 0V3.2M1190.6 0V3.2M1203.8 0V3.2M1217.1 0V3.2M1230.3 0V3.2M1243.5 0V3.2M1256.7 0V3.2M1270.0 0V5.5M1283.2 0V3.2M1296.4 0V3.2M1309.6 0V3.2M1322.9 0V3.2M1336.1 0V3.2M1349.3 0V3.2M1362.5 0V3.2M1375.8 0V3.2M1389.0 0V3.2M1402.2 0V3.2M1415.5 0V3.2M1428.7 0V5.5M1441.9 0V3.2M1455.1 0V3.2M1468.4 0V3.2M1481.6 0V3.2M1494.8 0V3.2M1508.0 0V3.2M1521.3 0V3.2M1534.5 0V3.2M1547.7 0V3.2M1560.9 0V3.2M1574.2 0V3.2M1587.4 0V5.5M1600.6 0V3.2M1613.9 0V3.2M1627.1 0V3.2M1640.3 0V3.2M1653.5 0V3.2M1666.8 0V3.2M1680.0 0V3.2M1693.2 0V3.2M1706.4 0V3.2M1719.7 0V3.2M1732.9 0V3.2M1746.1 0V5.5M1759.3 0V3.2M1772.6 0V3.2M1785.8 0V3.2M1799.0 0V3.2M1812.3 0V3.2M1825.5 0V3.2M1838.7 0V3.2M1851.9 0V3.2M1865.2 0V3.2M1878.4 0V3.2M1891.6 0V3.2" stroke="#1a50a8" stroke-width="1"/></svg>
<span class="t" style="left:159.00px;top:899.18px;font:400 11.6px/16px 'Liberation Sans',sans-serif;color:#173a70;letter-spacing:-0.605px;">06:00</span>
<span class="t" style="left:317.72px;top:899.18px;font:400 11.6px/16px 'Liberation Sans',sans-serif;color:#173a70;letter-spacing:-0.605px;">08:00</span>
<span class="t" style="left:476.44px;top:899.18px;font:400 11.6px/16px 'Liberation Sans',sans-serif;color:#173a70;letter-spacing:-0.605px;">10:00</span>
<span class="t" style="left:635.16px;top:899.18px;font:400 11.6px/16px 'Liberation Sans',sans-serif;color:#173a70;letter-spacing:-0.605px;">12:00</span>
<span class="t" style="left:793.88px;top:899.18px;font:400 11.6px/16px 'Liberation Sans',sans-serif;color:#173a70;letter-spacing:-0.605px;">14:00</span>
<span class="t" style="left:952.60px;top:899.18px;font:400 11.6px/16px 'Liberation Sans',sans-serif;color:#173a70;letter-spacing:-0.605px;">16:00</span>
<span class="t" style="left:1111.32px;top:899.18px;font:400 11.6px/16px 'Liberation Sans',sans-serif;color:#173a70;letter-spacing:-0.605px;">18:00</span>
<span class="t" style="left:1270.04px;top:899.18px;font:400 11.6px/16px 'Liberation Sans',sans-serif;color:#173a70;letter-spacing:-0.605px;">20:00</span>
<span class="t" style="left:1428.76px;top:899.18px;font:400 11.6px/16px 'Liberation Sans',sans-serif;color:#173a70;letter-spacing:-0.605px;">22:00</span>
<span class="t" style="left:1587.48px;top:899.18px;font:400 11.6px/16px 'Liberation Sans',sans-serif;color:#173a70;letter-spacing:-0.605px;">00:00</span>
<span class="t" style="left:1746.20px;top:899.18px;font:400 11.6px/16px 'Liberation Sans',sans-serif;color:#173a70;letter-spacing:-0.605px;">02:00</span>
<span class="t" style="left:1904.00px;top:899.18px;font:400 11.6px/16px 'Liberation Sans',sans-serif;color:#173a70;">04</span>
<svg class="b" style="left:14px;top:899px;" width="14" height="16"><circle cx="6.5" cy="8.5" r="5.5" fill="#c8c8c8" stroke="#8a8a8a" stroke-width="1"/><path d="M2 2.5 A6.5 6.5 0 0 1 2 14.5Z" fill="#1c5ad8"/></svg>
<div class="b" style="left:1916px;top:896px;width:3.5px;height:18px;background:#e8f0fa;border-left:1px solid #1c5ad8"></div>
<div class="b" style="left:12px;top:916px;width:1911px;height:22px;background:#add8e6"></div>
<span class="t" style="left:29.00px;top:916.63px;font:700 13.2px/18px 'Liberation Sans',sans-serif;color:#000;letter-spacing:-0.032px;">11 Nov 2022 04:00:00.000</span>
<svg class="b" style="left:0px;top:917px;" width="1923" height="21"><path d="M213.3 6V20M225.2 15V20M237.1 15V20M248.9 15V20M260.8 15V20M272.7 15V20M284.6 15V20M296.4 15V20M308.3 15V20M320.2 15V20M332.1 15V20M343.9 15V20M355.8 6V20M367.7 15V20M379.6 15V20M391.4 15V20M403.3 15V20M415.2 15V20M427.1 15V20M438.9 15V20M450.8 15V20M462.7 15V20M474.6 15V20M486.4 15V20M498.3 6V20M510.2 15V20M522.0 15V20M533.9 15V20M545.8 15V20M557.7 15V20M569.5 15V20M581.4 15V20M593.3 15V20M605.2 15V20M617.0 15V20M628.9 15V20M640.8 6V20M652.7 15V20M664.5 15V20M676.4 15V20M688.3 15V20M700.2 15V20M712.0 15V20M723.9 15V20M735.8 15V20M747.7 15V20M759.5 15V20M771.4 15V20M783.3 6V20M795.2 15V20M807.0 15V20M818.9 15V20M830.8 15V20M842.7 15V20M854.5 15V20M866.4 15V20M878.3 15V20M890.2 15V20M902.0 15V20M913.9 15V20M925.8 6V20M937.7 15V20M949.5 15V20M961.4 15V20M973.3 15V20M985.2 15V20M997.0 15V20M1008.9 15V20M1020.8 15V20M1032.7 15V20M1044.5 15V20M1056.4 15V20M1068.3 6V20M1080.2 15V20M1092.0 15V20M1103.9 15V20M1115.8 15V20M1127.7 15V20M1139.5 15V20M1151.4 15V20M1163.3 15V20M1175.2 15V20M1187.0 15V20M1198.9 15V20M1210.8 6V20M1222.7 15V20M1234.5 15V20M1246.4 15V20M1258.3 15V20M1270.2 15V20M1282.0 15V20M1293.9 15V20M1305.8 15V20M1317.7 15V20M1329.5 15V20M1341.4 15V20M1353.3 6V20M1365.2 15V20M1377.0 15V20M1388.9 15V20M1400.8 15V20M1412.7 15V20M1424.5 15V20M1436.4 15V20M1448.3 15V20M1460.2 15V20M1472.0 15V20M1483.9 15V20M1495.8 6V20M1507.7 15V20M1519.5 15V20M1531.4 15V20M1543.3 15V20M1555.2 15V20M1567.0 15V20M1578.9 15V20M1590.8 15V20M1602.7 15V20M1614.5 15V20M1626.4 15V20M1638.3 6V20M1650.2 15V20M1662.0 15V20M1673.9 15V20M1685.8 15V20M1697.7 15V20M1709.5 15V20M1721.4 15V20M1733.3 15V20M1745.2 15V20M1757.0 15V20M1768.9 15V20M1780.8 6V20M1792.7 15V20M1804.5 15V20M1816.4 15V20M1828.3 15V20M1840.2 15V20M1852.0 15V20M1863.9 15V20M1875.8 15V20M1887.7 15V20M1899.5 15V20M1911.4 15V20" stroke="#44607a" stroke-width="1"/></svg>
<span class="t" style="left:217.20px;top:916.98px;font:400 11.6px/16px 'Liberation Sans',sans-serif;color:#1a2a3a;letter-spacing:-0.605px;">04:00</span>
<span class="t" style="left:359.70px;top:916.98px;font:400 11.6px/16px 'Liberation Sans',sans-serif;color:#1a2a3a;letter-spacing:-0.605px;">06:00</span>
<span class="t" style="left:502.20px;top:916.98px;font:400 11.6px/16px 'Liberation Sans',sans-serif;color:#1a2a3a;letter-spacing:-0.605px;">08:00</span>
<span class="t" style="left:644.70px;top:916.98px;font:400 11.6px/16px 'Liberation Sans',sans-serif;color:#1a2a3a;letter-spacing:-0.605px;">10:00</span>
<span class="t" style="left:787.20px;top:916.98px;font:400 11.6px/16px 'Liberation Sans',sans-serif;color:#1a2a3a;letter-spacing:-0.605px;">12:00</span>
<span class="t" style="left:929.70px;top:916.98px;font:400 11.6px/16px 'Liberation Sans',sans-serif;color:#1a2a3a;letter-spacing:-0.605px;">14:00</span>
<span class="t" style="left:1072.20px;top:916.98px;font:400 11.6px/16px 'Liberation Sans',sans-serif;color:#1a2a3a;letter-spacing:-0.605px;">16:00</span>
<span class="t" style="left:1214.70px;top:916.98px;font:400 11.6px/16px 'Liberation Sans',sans-serif;color:#1a2a3a;letter-spacing:-0.605px;">18:00</span>
<span class="t" style="left:1357.20px;top:916.98px;font:400 11.6px/16px 'Liberation Sans',sans-serif;color:#1a2a3a;letter-spacing:-0.605px;">20:00</span>
<span class="t" style="left:1499.70px;top:916.98px;font:400 11.6px/16px 'Liberation Sans',sans-serif;color:#1a2a3a;letter-spacing:-0.605px;">22:00</span>
<span class="t" style="left:1642.20px;top:916.98px;font:400 11.6px/16px 'Liberation Sans',sans-serif;color:#1a2a3a;letter-spacing:-0.605px;">00:00</span>
<span class="t" style="left:1784.70px;top:916.98px;font:400 11.6px/16px 'Liberation Sans',sans-serif;color:#1a2a3a;letter-spacing:-0.605px;">02:00</span>
<svg class="b" style="left:212px;top:916px;" width="12" height="12"><path d="M1 .5h7.5q1 0 1 1v5L1 11.5Z" fill="#f4f4f4" stroke="#9a9a9a" stroke-width=".8"/></svg>
<div class="b" style="left:12px;top:938px;width:201px;height:21px;background:#fff;border-bottom:1px solid #d0d0d0"></div>
<div class="b" style="left:12px;top:959px;width:201px;height:50px;background:#fff"></div>
<svg class="b" style="left:15px;top:941px" width="16" height="16" viewBox="0 0 16 16"><rect x="0" y="13" width="16" height="2.5" fill="#1f8fd0"/><path d="M0 13 L6 4 L9 8 L11 6 L16 13Z" fill="#9a9ac8"/><path d="M6 4 L4.2 7 L6 6.3 L7.6 7.2 L6 4Z M11 6 L9.8 7.5 L12.2 7.8Z" fill="#fff"/><path d="M0 13 L6 4 L9 8 L11 6 L16 13" fill="none" stroke="#000" stroke-width="1"/><circle cx="4" cy="3.5" r="2.6" fill="#ffd000" stroke="#f03000" stroke-width="1"/><path d="M9 1.5h6M8.5 3.5h5" stroke="#9cc4f0" stroke-width="1"/></svg>
<span class="t" style="left:34.50px;top:939.83px;font:400 12.6px/18px 'Liberation Sans',sans-serif;color:#000;letter-spacing:-0.533px;">STK_Fundamentals Availability</span>
<svg class="b" style="left:197px;top:941.5px" width="14" height="14" viewBox="0 0 16 16"><path d="M0.5 8 C4 3.5 12 3.5 15.5 8 C12 12.5 4 12.5 0.5 8Z" fill="#b8b8b8" stroke="#888" stroke-width=".8"/><circle cx="8" cy="8" r="2.8" fill="#707070"/><circle cx="8" cy="8" r="1.2" fill="#303030"/></svg>
<div class="b" style="left:214px;top:938px;width:1709px;height:71px;background:#808080"></div>
<div class="b" style="left:214px;top:939px;width:1708.5px;height:19.5px;background:#d98312;border:1px solid #7aa0dc;border-bottom:1.5px solid #9ab4d8"></div>
<span class="t" style="left:221.00px;top:939.52px;font:700 11.2px/16px 'Liberation Sans',sans-serif;color:#000;letter-spacing:-0.369px;">STK_Fundamentals AvailabilityIntervals</span>
<div class="b" style="left:212.5px;top:927px;width:1.5px;height:82px;background:#f0a8a0"></div>
<div class="b" style="left:8px;top:1011px;width:1920px;height:21px;background:linear-gradient(180deg,#f4f4f4,#f0f0f0)"></div>
<div class="b" style="left:1112px;top:1015px;width:1px;height:15px;background:#8a8a8a"></div>
<div class="b" style="left:1136px;top:1015px;width:1px;height:15px;background:#8a8a8a"></div>
<div class="b" style="left:1160px;top:1015px;width:1px;height:15px;background:#8a8a8a"></div>
<div class="b" style="left:1367px;top:1015px;width:1px;height:15px;background:#8a8a8a"></div>
<div class="b" style="left:1521px;top:1015px;width:1px;height:15px;background:#8a8a8a"></div>
<div class="b" style="left:1739px;top:1015px;width:1px;height:15px;background:#8a8a8a"></div>
<svg class="b" style="left:1117px;top:1014.5px" width="16" height="16" viewBox="0 0 16 16"><path d="M8 1 L15.5 15 H0.5Z" fill="#ffd818" stroke="#000" stroke-width="1.1"/><path d="M8 5.5v5" stroke="#000" stroke-width="1.8"/><circle cx="8" cy="12.8" r="1.1" fill="#000"/></svg>
<svg class="b" style="left:1141px;top:1014.5px" width="16" height="16" viewBox="0 0 16 16"><path d="M1 6 A10 10 0 0 1 15 6" fill="none" stroke="#18a028" stroke-width="1.7"/><path d="M3.2 8.6 A7 7 0 0 1 12.8 8.6" fill="none" stroke="#18a028" stroke-width="1.7"/><path d="M5.4 11.2 A4 4 0 0 1 10.6 11.2" fill="none" stroke="#18a028" stroke-width="1.7"/><circle cx="8" cy="13.8" r="1.5" fill="#18a028"/></svg>
<span class="t" style="left:1164.50px;top:1013.56px;font:400 12.8px/18px 'Liberation Sans',sans-serif;color:#000;letter-spacing:-0.029px;">Missile1</span>
<span class="t" style="left:1372.00px;top:1013.56px;font:400 12.8px/18px 'Liberation Sans',sans-serif;color:#000;letter-spacing:-0.126px;">(-4.16058, 155.08024)</span>
<span class="t" style="left:1526.00px;top:1013.56px;font:400 12.8px/18px 'Liberation Sans',sans-serif;color:#000;letter-spacing:0.004px;">11 Nov 2022 04:00:00.000</span>
<span class="t" style="left:1744.00px;top:1013.56px;font:400 12.8px/18px 'Liberation Sans',sans-serif;color:#000;letter-spacing:-0.071px;">Time Step: 0.10 sec</span>
</body></html>
